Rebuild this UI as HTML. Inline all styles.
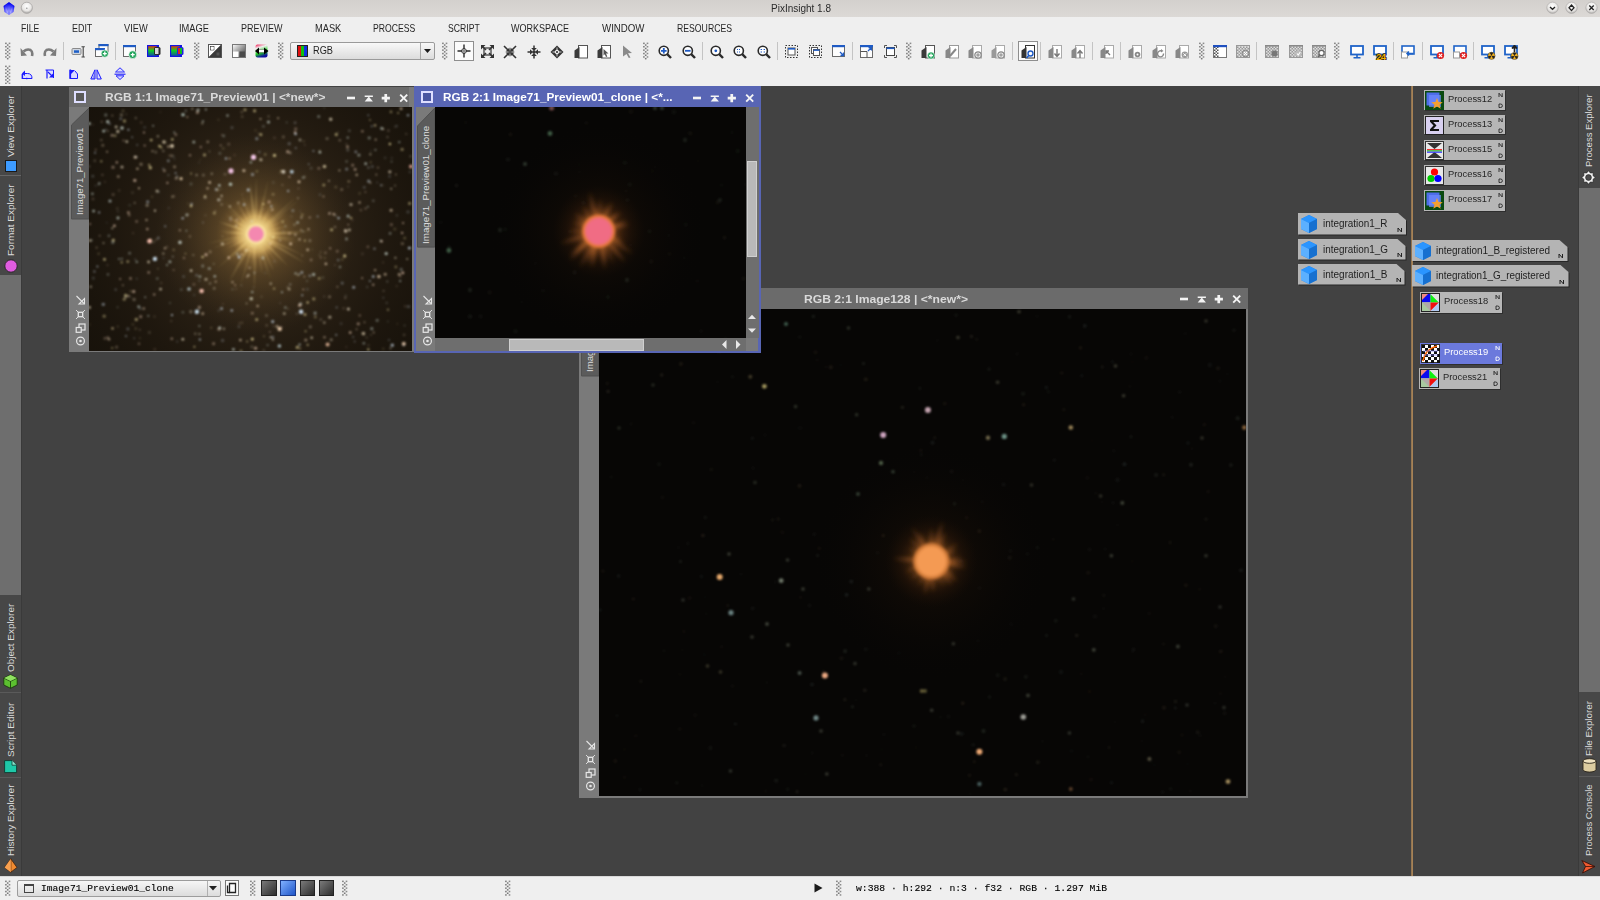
<!DOCTYPE html>
<html><head><meta charset="utf-8"><style>
html,body{margin:0;padding:0;width:1600px;height:900px;overflow:hidden;background:#424242}
#root{position:relative;width:1600px;height:900px;overflow:hidden}
#root div,#root svg{position:absolute}
.t{white-space:pre}
</style></head><body><div id="root">
<div style="left:0px;top:0px;width:1600px;height:17px;background:linear-gradient(#d3d0cd,#dcd9d6)"></div>
<div style="left:0px;top:17px;width:1600px;height:69px;background:#efefef"></div>
<div style="left:0px;top:86px;width:1600px;height:790px;background:#424242"></div>
<div style="left:0px;top:876px;width:1600px;height:24px;background:#efefef;border-top:1px solid #d8d8d8;box-sizing:border-box"></div>
<div class="t" style="left:771px;top:3.84px;font-size:10px;line-height:10px;color:#2b2b2b;font-family:'Liberation Sans', sans-serif;font-weight:normal;transform:scaleX(0.9994);transform-origin:0 0;">PixInsight 1.8</div>
<div class="t" style="left:21.25px;top:22.59px;font-size:11px;line-height:11px;color:#262626;font-family:'Liberation Sans', sans-serif;font-weight:normal;transform:scaleX(0.7899);transform-origin:0 0;">FILE</div>
<div class="t" style="left:71.5px;top:22.59px;font-size:11px;line-height:11px;color:#262626;font-family:'Liberation Sans', sans-serif;font-weight:normal;transform:scaleX(0.8102);transform-origin:0 0;">EDIT</div>
<div class="t" style="left:123.8px;top:22.59px;font-size:11px;line-height:11px;color:#262626;font-family:'Liberation Sans', sans-serif;font-weight:normal;transform:scaleX(0.8430);transform-origin:0 0;">VIEW</div>
<div class="t" style="left:179.3px;top:22.59px;font-size:11px;line-height:11px;color:#262626;font-family:'Liberation Sans', sans-serif;font-weight:normal;transform:scaleX(0.8463);transform-origin:0 0;">IMAGE</div>
<div class="t" style="left:241.2px;top:22.59px;font-size:11px;line-height:11px;color:#262626;font-family:'Liberation Sans', sans-serif;font-weight:normal;transform:scaleX(0.8180);transform-origin:0 0;">PREVIEW</div>
<div class="t" style="left:314.6px;top:22.59px;font-size:11px;line-height:11px;color:#262626;font-family:'Liberation Sans', sans-serif;font-weight:normal;transform:scaleX(0.8436);transform-origin:0 0;">MASK</div>
<div class="t" style="left:373.2px;top:22.59px;font-size:11px;line-height:11px;color:#262626;font-family:'Liberation Sans', sans-serif;font-weight:normal;transform:scaleX(0.7863);transform-origin:0 0;">PROCESS</div>
<div class="t" style="left:447.5px;top:22.59px;font-size:11px;line-height:11px;color:#262626;font-family:'Liberation Sans', sans-serif;font-weight:normal;transform:scaleX(0.7859);transform-origin:0 0;">SCRIPT</div>
<div class="t" style="left:511.2px;top:22.59px;font-size:11px;line-height:11px;color:#262626;font-family:'Liberation Sans', sans-serif;font-weight:normal;transform:scaleX(0.8204);transform-origin:0 0;">WORKSPACE</div>
<div class="t" style="left:601.5px;top:22.59px;font-size:11px;line-height:11px;color:#262626;font-family:'Liberation Sans', sans-serif;font-weight:normal;transform:scaleX(0.8806);transform-origin:0 0;">WINDOW</div>
<div class="t" style="left:676.5px;top:22.59px;font-size:11px;line-height:11px;color:#262626;font-family:'Liberation Sans', sans-serif;font-weight:normal;transform:scaleX(0.7893);transform-origin:0 0;">RESOURCES</div>
<svg style="left:5px;top:41.5px;width:6px;height:19.0px" width="6" height="19.0" viewBox="0 0 6 19.0"><rect x="0.1" y="0.60" width="1.6" height="1.5" fill="#6a6a6a" opacity="0.85"/><rect x="3.7" y="0.60" width="1.6" height="1.5" fill="#6a6a6a" opacity="0.75"/><rect x="1.9" y="2.30" width="1.6" height="1.5" fill="#6a6a6a" opacity="0.9"/><rect x="0.1" y="4.00" width="1.6" height="1.5" fill="#6a6a6a" opacity="0.85"/><rect x="3.7" y="4.00" width="1.6" height="1.5" fill="#6a6a6a" opacity="0.75"/><rect x="1.9" y="5.70" width="1.6" height="1.5" fill="#6a6a6a" opacity="0.9"/><rect x="0.1" y="7.40" width="1.6" height="1.5" fill="#6a6a6a" opacity="0.85"/><rect x="3.7" y="7.40" width="1.6" height="1.5" fill="#6a6a6a" opacity="0.75"/><rect x="1.9" y="9.10" width="1.6" height="1.5" fill="#6a6a6a" opacity="0.9"/><rect x="0.1" y="10.80" width="1.6" height="1.5" fill="#6a6a6a" opacity="0.85"/><rect x="3.7" y="10.80" width="1.6" height="1.5" fill="#6a6a6a" opacity="0.75"/><rect x="1.9" y="12.50" width="1.6" height="1.5" fill="#6a6a6a" opacity="0.9"/><rect x="0.1" y="14.20" width="1.6" height="1.5" fill="#6a6a6a" opacity="0.85"/><rect x="3.7" y="14.20" width="1.6" height="1.5" fill="#6a6a6a" opacity="0.75"/><rect x="1.9" y="15.90" width="1.6" height="1.5" fill="#6a6a6a" opacity="0.9"/></svg>
<svg style="left:5px;top:64.5px;width:6px;height:19.5px" width="6" height="19.5" viewBox="0 0 6 19.5"><rect x="0.1" y="0.60" width="1.6" height="1.5" fill="#6a6a6a" opacity="0.85"/><rect x="3.7" y="0.60" width="1.6" height="1.5" fill="#6a6a6a" opacity="0.75"/><rect x="1.9" y="2.30" width="1.6" height="1.5" fill="#6a6a6a" opacity="0.9"/><rect x="0.1" y="4.00" width="1.6" height="1.5" fill="#6a6a6a" opacity="0.85"/><rect x="3.7" y="4.00" width="1.6" height="1.5" fill="#6a6a6a" opacity="0.75"/><rect x="1.9" y="5.70" width="1.6" height="1.5" fill="#6a6a6a" opacity="0.9"/><rect x="0.1" y="7.40" width="1.6" height="1.5" fill="#6a6a6a" opacity="0.85"/><rect x="3.7" y="7.40" width="1.6" height="1.5" fill="#6a6a6a" opacity="0.75"/><rect x="1.9" y="9.10" width="1.6" height="1.5" fill="#6a6a6a" opacity="0.9"/><rect x="0.1" y="10.80" width="1.6" height="1.5" fill="#6a6a6a" opacity="0.85"/><rect x="3.7" y="10.80" width="1.6" height="1.5" fill="#6a6a6a" opacity="0.75"/><rect x="1.9" y="12.50" width="1.6" height="1.5" fill="#6a6a6a" opacity="0.9"/><rect x="0.1" y="14.20" width="1.6" height="1.5" fill="#6a6a6a" opacity="0.85"/><rect x="3.7" y="14.20" width="1.6" height="1.5" fill="#6a6a6a" opacity="0.75"/><rect x="1.9" y="15.90" width="1.6" height="1.5" fill="#6a6a6a" opacity="0.9"/><rect x="0.1" y="17.60" width="1.6" height="1.5" fill="#6a6a6a" opacity="0.85"/><rect x="3.7" y="17.60" width="1.6" height="1.5" fill="#6a6a6a" opacity="0.75"/></svg>
<svg style="left:20px;top:47px;width:14px;height:10px" width="14" height="10" viewBox="0 0 14 10"><g ><path d="M3.5 4.5 Q7 1.5 10.5 3 Q13 4.5 12 9" stroke="#7c7c7c" stroke-width="2.6" fill="none"/><path d="M0.5 1 L1 9 L7 8.5 Z" fill="#7c7c7c"/></g></svg>
<svg style="left:43px;top:47px;width:14px;height:10px" width="14" height="10" viewBox="0 0 14 10"><g transform="translate(14,0) scale(-1,1)"><path d="M3.5 4.5 Q7 1.5 10.5 3 Q13 4.5 12 9" stroke="#7c7c7c" stroke-width="2.6" fill="none"/><path d="M0.5 1 L1 9 L7 8.5 Z" fill="#7c7c7c"/></g></svg>
<div style="left:63px;top:42px;width:1px;height:17.5px;background:#c4c4c4"></div>
<svg style="left:71px;top:45.5px;width:15px;height:12px" width="15" height="12" viewBox="0 0 15 12"><rect x="1" y="2.5" width="9" height="6" rx="1" fill="#cfd6e0" stroke="#8a8a8a" stroke-width="1"/><rect x="3" y="4.3" width="5" height="2.5" fill="#1d5fc8"/><path d="M10.5 0.8 H13.8 M12.2 0.8 V11 M10.5 11 H13.8" stroke="#444" stroke-width="1.1" fill="none"/></svg>
<svg style="left:95px;top:44px;width:14px;height:14px" width="14" height="14" viewBox="0 0 14 14"><g transform="translate(3.5,0)"><rect x="0.5" y="0.5" width="9" height="7" fill="#fdfdfd" stroke="#6a6a6a" stroke-width="1"/><rect x="0" y="0" width="10" height="2.2" fill="#1f5bc4"/></g><g transform="translate(0,4)"><rect x="0.5" y="0.5" width="9" height="8" fill="#fdfdfd" stroke="#6a6a6a" stroke-width="1"/><rect x="0" y="0" width="10" height="2.2" fill="#1f5bc4"/></g><circle cx="9.8" cy="9.6" r="3.6" fill="#1fa35a" stroke="#fff" stroke-width="0.6"/><path d="M7.800000000000001 9.6 H11.8 M9.8 7.6 V11.6" stroke="#fff" stroke-width="1.3"/></svg>
<div style="left:115px;top:42px;width:1px;height:17.5px;background:#c4c4c4"></div>
<svg style="left:123px;top:45px;width:14px;height:14px" width="14" height="14" viewBox="0 0 14 14"><rect x="0.5" y="0.5" width="12" height="11" fill="#fdfdfd" stroke="#6a6a6a" stroke-width="1"/><rect x="0" y="0" width="13" height="2.2" fill="#1f5bc4"/><circle cx="9.7" cy="9.7" r="3.9" fill="#1fa35a" stroke="#fff" stroke-width="0.6"/><path d="M7.699999999999999 9.7 H11.7 M9.7 7.699999999999999 V11.7" stroke="#fff" stroke-width="1.3"/></svg>
<svg style="left:146.5px;top:45px;width:14px;height:12px" width="14" height="12" viewBox="0 0 14 12"><defs><linearGradient id="rg0" x1="0" y1="0" x2="0" y2="1"><stop offset="0" stop-color="#e23a10"/><stop offset="0.45" stop-color="#10d020"/><stop offset="1" stop-color="#1050a0"/></linearGradient></defs><rect x="0" y="0" width="12" height="12" fill="#1414e0"/><rect x="1.2" y="1.2" width="8.5" height="9.6" fill="url(#rg0)"/><rect x="7" y="2" width="6.5" height="8" rx="1.5" fill="#2a2a2a"/><rect x="8" y="3" width="3.5" height="6" fill="#d8d8d8"/></svg>
<svg style="left:170px;top:45px;width:14px;height:12px" width="14" height="12" viewBox="0 0 14 12"><defs><linearGradient id="rg1" x1="0" y1="0" x2="0" y2="1"><stop offset="0" stop-color="#e23a10"/><stop offset="0.45" stop-color="#10d020"/><stop offset="1" stop-color="#1050a0"/></linearGradient></defs><rect x="0" y="0" width="12" height="12" fill="#1414e0"/><rect x="1.2" y="1.2" width="8.5" height="9.6" fill="url(#rg1)"/><rect x="7" y="2" width="6.5" height="8" rx="1.5" fill="#2020e0"/><rect x="8" y="3" width="2" height="6" fill="#e02020"/><rect x="10" y="3" width="2" height="6" fill="#10c020"/></svg>
<svg style="left:193.5px;top:41.5px;width:6px;height:19.0px" width="6" height="19.0" viewBox="0 0 6 19.0"><rect x="0.1" y="0.60" width="1.6" height="1.5" fill="#6a6a6a" opacity="0.85"/><rect x="3.7" y="0.60" width="1.6" height="1.5" fill="#6a6a6a" opacity="0.75"/><rect x="1.9" y="2.30" width="1.6" height="1.5" fill="#6a6a6a" opacity="0.9"/><rect x="0.1" y="4.00" width="1.6" height="1.5" fill="#6a6a6a" opacity="0.85"/><rect x="3.7" y="4.00" width="1.6" height="1.5" fill="#6a6a6a" opacity="0.75"/><rect x="1.9" y="5.70" width="1.6" height="1.5" fill="#6a6a6a" opacity="0.9"/><rect x="0.1" y="7.40" width="1.6" height="1.5" fill="#6a6a6a" opacity="0.85"/><rect x="3.7" y="7.40" width="1.6" height="1.5" fill="#6a6a6a" opacity="0.75"/><rect x="1.9" y="9.10" width="1.6" height="1.5" fill="#6a6a6a" opacity="0.9"/><rect x="0.1" y="10.80" width="1.6" height="1.5" fill="#6a6a6a" opacity="0.85"/><rect x="3.7" y="10.80" width="1.6" height="1.5" fill="#6a6a6a" opacity="0.75"/><rect x="1.9" y="12.50" width="1.6" height="1.5" fill="#6a6a6a" opacity="0.9"/><rect x="0.1" y="14.20" width="1.6" height="1.5" fill="#6a6a6a" opacity="0.85"/><rect x="3.7" y="14.20" width="1.6" height="1.5" fill="#6a6a6a" opacity="0.75"/><rect x="1.9" y="15.90" width="1.6" height="1.5" fill="#6a6a6a" opacity="0.9"/></svg>
<svg style="left:208px;top:44px;width:14px;height:14px" width="14" height="14" viewBox="0 0 14 14"><rect x="0.5" y="0.5" width="13" height="13" fill="#3a3a3a" stroke="#555"/><path d="M1 1 H13 L1 13 Z" fill="#fff"/><path d="M13 1 V13 H1 Z" fill="#3a3a3a"/><rect x="2.5" y="2.5" width="3.5" height="3.5" fill="#fff" stroke="#222" stroke-width="0.6"/><rect x="8.5" y="8.5" width="3" height="3" fill="#555"/><path d="M3 3h2.5v2.5H3z" fill="#fff"/></svg>
<svg style="left:232px;top:44px;width:14px;height:14px" width="14" height="14" viewBox="0 0 14 14"><defs><linearGradient id="gsq" x1="0" y1="0" x2="1" y2="1"><stop offset="0" stop-color="#fff"/><stop offset="1" stop-color="#333"/></linearGradient></defs><rect x="0.5" y="0.5" width="13" height="13" fill="url(#gsq)" stroke="#777"/><rect x="1" y="7.5" width="5.5" height="5.5" fill="#fff"/><rect x="7.5" y="7.5" width="5.5" height="5.5" fill="#4a4a4a"/></svg>
<svg style="left:255px;top:44px;width:14px;height:14px" width="14" height="14" viewBox="0 0 14 14"><defs><linearGradient id="car" x1="0" y1="0" x2="0.3" y2="1"><stop offset="0" stop-color="#f0104a"/><stop offset="0.3" stop-color="#f0f0f0"/><stop offset="0.7" stop-color="#20d020"/><stop offset="1" stop-color="#1010a0"/></linearGradient></defs><rect x="0.5" y="0.5" width="12" height="13" rx="2" fill="url(#car)"/><path d="M0 7 L4 3.5 V5.5 H9 V3.5 L13.5 7 L9 10.5 V8.5 H4 V10.5 Z" fill="#000"/><rect x="4" y="5.6" width="5" height="2.8" fill="#fff"/></svg>
<svg style="left:278px;top:41.5px;width:6px;height:19.0px" width="6" height="19.0" viewBox="0 0 6 19.0"><rect x="0.1" y="0.60" width="1.6" height="1.5" fill="#6a6a6a" opacity="0.85"/><rect x="3.7" y="0.60" width="1.6" height="1.5" fill="#6a6a6a" opacity="0.75"/><rect x="1.9" y="2.30" width="1.6" height="1.5" fill="#6a6a6a" opacity="0.9"/><rect x="0.1" y="4.00" width="1.6" height="1.5" fill="#6a6a6a" opacity="0.85"/><rect x="3.7" y="4.00" width="1.6" height="1.5" fill="#6a6a6a" opacity="0.75"/><rect x="1.9" y="5.70" width="1.6" height="1.5" fill="#6a6a6a" opacity="0.9"/><rect x="0.1" y="7.40" width="1.6" height="1.5" fill="#6a6a6a" opacity="0.85"/><rect x="3.7" y="7.40" width="1.6" height="1.5" fill="#6a6a6a" opacity="0.75"/><rect x="1.9" y="9.10" width="1.6" height="1.5" fill="#6a6a6a" opacity="0.9"/><rect x="0.1" y="10.80" width="1.6" height="1.5" fill="#6a6a6a" opacity="0.85"/><rect x="3.7" y="10.80" width="1.6" height="1.5" fill="#6a6a6a" opacity="0.75"/><rect x="1.9" y="12.50" width="1.6" height="1.5" fill="#6a6a6a" opacity="0.9"/><rect x="0.1" y="14.20" width="1.6" height="1.5" fill="#6a6a6a" opacity="0.85"/><rect x="3.7" y="14.20" width="1.6" height="1.5" fill="#6a6a6a" opacity="0.75"/><rect x="1.9" y="15.90" width="1.6" height="1.5" fill="#6a6a6a" opacity="0.9"/></svg>
<div style="left:290px;top:41.5px;width:144.5px;height:18.5px;box-sizing:border-box;border:1px solid #9a9a9a;border-radius:2px;background:linear-gradient(#f8f8f8,#dcdcdc)"></div><div style="left:419.5px;top:42.5px;width:1px;height:16.5px;background:#a8a8a8"></div><svg style="left:422.5px;top:47.75px;width:9px;height:6px" width="9" height="6" viewBox="0 0 9 6"><path d="M1 1 H8 L4.5 5 Z" fill="#1a1a1a"/></svg>
<svg style="left:296.5px;top:45px;width:11px;height:12px" width="11" height="12" viewBox="0 0 11 12"><rect x="0" y="0" width="11" height="12" fill="#222"/><rect x="1" y="1" width="3" height="10" fill="#e01010"/><rect x="4" y="1" width="3" height="10" fill="#10c010"/><rect x="7" y="1" width="3" height="10" fill="#1030e0"/></svg>
<svg style="left:442px;top:41.5px;width:6px;height:19.0px" width="6" height="19.0" viewBox="0 0 6 19.0"><rect x="0.1" y="0.60" width="1.6" height="1.5" fill="#6a6a6a" opacity="0.85"/><rect x="3.7" y="0.60" width="1.6" height="1.5" fill="#6a6a6a" opacity="0.75"/><rect x="1.9" y="2.30" width="1.6" height="1.5" fill="#6a6a6a" opacity="0.9"/><rect x="0.1" y="4.00" width="1.6" height="1.5" fill="#6a6a6a" opacity="0.85"/><rect x="3.7" y="4.00" width="1.6" height="1.5" fill="#6a6a6a" opacity="0.75"/><rect x="1.9" y="5.70" width="1.6" height="1.5" fill="#6a6a6a" opacity="0.9"/><rect x="0.1" y="7.40" width="1.6" height="1.5" fill="#6a6a6a" opacity="0.85"/><rect x="3.7" y="7.40" width="1.6" height="1.5" fill="#6a6a6a" opacity="0.75"/><rect x="1.9" y="9.10" width="1.6" height="1.5" fill="#6a6a6a" opacity="0.9"/><rect x="0.1" y="10.80" width="1.6" height="1.5" fill="#6a6a6a" opacity="0.85"/><rect x="3.7" y="10.80" width="1.6" height="1.5" fill="#6a6a6a" opacity="0.75"/><rect x="1.9" y="12.50" width="1.6" height="1.5" fill="#6a6a6a" opacity="0.9"/><rect x="0.1" y="14.20" width="1.6" height="1.5" fill="#6a6a6a" opacity="0.85"/><rect x="3.7" y="14.20" width="1.6" height="1.5" fill="#6a6a6a" opacity="0.75"/><rect x="1.9" y="15.90" width="1.6" height="1.5" fill="#6a6a6a" opacity="0.9"/></svg>
<div style="left:453.5px;top:41px;width:20px;height:20px;box-sizing:border-box;border:1px solid #8e8e8e;background:#fbfbfb"></div>
<svg style="left:456.5px;top:44px;width:14px;height:14px" width="14" height="14" viewBox="0 0 14 14"><path d="M7 0.5 V5 M7 9 V13.5 M0.5 7 H5 M9 7 H13.5" stroke="#2a2a2a" stroke-width="1.4"/><circle cx="7" cy="7" r="2.4" fill="none" stroke="#2a2a2a" stroke-width="0.9"/><path d="M7 5 V9 M5 7 H9" stroke="#2a2a2a" stroke-width="0.6"/></svg>
<svg style="left:481px;top:45px;width:13px;height:13px" width="13" height="13" viewBox="0 0 13 13"><rect x="3" y="3" width="7" height="7" fill="none" stroke="#333" stroke-width="1.2"/><path d="M0 0 L4.5 0 L0 4.5 Z" fill="#333"/><path d="M1 1 L5 5" stroke="#333" stroke-width="1.6"/><path d="M13 0 L8.5 0 L13 4.5 Z" fill="#333"/><path d="M12 1 L8 5" stroke="#333" stroke-width="1.6"/><path d="M0 13 L4.5 13 L0 8.5 Z" fill="#333"/><path d="M1 12 L5 8" stroke="#333" stroke-width="1.6"/><path d="M13 13 L8.5 13 L13 8.5 Z" fill="#333"/><path d="M12 12 L8 8" stroke="#333" stroke-width="1.6"/></svg>
<svg style="left:503px;top:44.5px;width:14px;height:14px" width="14" height="14" viewBox="0 0 14 14"><path d="M1 1 L5.5 5.5" stroke="#333" stroke-width="1.6"/><path d="M6.5 6.5 L2.5 6.5 L6.5 2.5 Z" fill="#333"/><path d="M13 1 L8.5 5.5" stroke="#333" stroke-width="1.6"/><path d="M7.5 6.5 L11.5 6.5 L7.5 2.5 Z" fill="#333"/><path d="M1 13 L5.5 8.5" stroke="#333" stroke-width="1.6"/><path d="M6.5 7.5 L2.5 7.5 L6.5 11.5 Z" fill="#333"/><path d="M13 13 L8.5 8.5" stroke="#333" stroke-width="1.6"/><path d="M7.5 7.5 L11.5 7.5 L7.5 11.5 Z" fill="#333"/><path d="M7 4.5 V9.5 M4.5 7 H9.5" stroke="#333" stroke-width="1.2"/></svg>
<svg style="left:526.5px;top:44.5px;width:14px;height:14px" width="14" height="14" viewBox="0 0 14 14"><circle cx="7" cy="7" r="1.8" fill="#333"/><g transform="rotate(0 7 7)"><path d="M7 0.5 V5" stroke="#333" stroke-width="1.5"/><path d="M4.2 3 L7 6 L9.8 3 Z" fill="#333"/></g><g transform="rotate(90 7 7)"><path d="M7 0.5 V5" stroke="#333" stroke-width="1.5"/><path d="M4.2 3 L7 6 L9.8 3 Z" fill="#333"/></g><g transform="rotate(180 7 7)"><path d="M7 0.5 V5" stroke="#333" stroke-width="1.5"/><path d="M4.2 3 L7 6 L9.8 3 Z" fill="#333"/></g><g transform="rotate(270 7 7)"><path d="M7 0.5 V5" stroke="#333" stroke-width="1.5"/><path d="M4.2 3 L7 6 L9.8 3 Z" fill="#333"/></g></svg>
<svg style="left:550px;top:44.5px;width:14px;height:14px" width="14" height="14" viewBox="0 0 14 14"><path d="M7 0.5 L13.5 7 L7 13.5 L0.5 7 Z" fill="#333"/><path d="M7 4 L10 7 L7 10 L4 7 Z" fill="#efefef"/><circle cx="7" cy="7" r="1.1" fill="#333"/><path d="M7 2.5 V4 M7 10 V11.5 M2.5 7 H4 M10 7 H11.5" stroke="#efefef" stroke-width="0.8"/></svg>
<svg style="left:573.5px;top:45px;width:14px;height:14px" width="14" height="14" viewBox="0 0 14 14"><rect x="4.5" y="0.5" width="9" height="12.5" fill="#fff" stroke="#555" stroke-width="1"/><path d="M0.5 5.5 L5.5 2 V13 H0.5 Z" fill="#3a3a3a"/></svg>
<svg style="left:597px;top:45px;width:14px;height:14px" width="14" height="14" viewBox="0 0 14 14"><rect x="4.5" y="0.5" width="9" height="12.5" fill="#fff" stroke="#555" stroke-width="1"/><path d="M0.5 5.5 L5.5 2 V13 H0.5 Z" fill="#3a3a3a"/><path d="M6.5 4 L11.5 8.5 L9 8.6 L10.3 11.5 L9 12 L7.8 9.2 L6.5 10.5 Z" fill="#555"/></svg>
<svg style="left:622px;top:44.5px;width:11px;height:13px" width="11" height="13" viewBox="0 0 11 13"><path d="M1 0.5 L10 8 L6 8.3 L8.5 12.5 L6.8 13 L4.5 9 L1 11.5 Z" fill="#8a8a8a"/></svg>
<svg style="left:643px;top:41.5px;width:6px;height:19.0px" width="6" height="19.0" viewBox="0 0 6 19.0"><rect x="0.1" y="0.60" width="1.6" height="1.5" fill="#6a6a6a" opacity="0.85"/><rect x="3.7" y="0.60" width="1.6" height="1.5" fill="#6a6a6a" opacity="0.75"/><rect x="1.9" y="2.30" width="1.6" height="1.5" fill="#6a6a6a" opacity="0.9"/><rect x="0.1" y="4.00" width="1.6" height="1.5" fill="#6a6a6a" opacity="0.85"/><rect x="3.7" y="4.00" width="1.6" height="1.5" fill="#6a6a6a" opacity="0.75"/><rect x="1.9" y="5.70" width="1.6" height="1.5" fill="#6a6a6a" opacity="0.9"/><rect x="0.1" y="7.40" width="1.6" height="1.5" fill="#6a6a6a" opacity="0.85"/><rect x="3.7" y="7.40" width="1.6" height="1.5" fill="#6a6a6a" opacity="0.75"/><rect x="1.9" y="9.10" width="1.6" height="1.5" fill="#6a6a6a" opacity="0.9"/><rect x="0.1" y="10.80" width="1.6" height="1.5" fill="#6a6a6a" opacity="0.85"/><rect x="3.7" y="10.80" width="1.6" height="1.5" fill="#6a6a6a" opacity="0.75"/><rect x="1.9" y="12.50" width="1.6" height="1.5" fill="#6a6a6a" opacity="0.9"/><rect x="0.1" y="14.20" width="1.6" height="1.5" fill="#6a6a6a" opacity="0.85"/><rect x="3.7" y="14.20" width="1.6" height="1.5" fill="#6a6a6a" opacity="0.75"/><rect x="1.9" y="15.90" width="1.6" height="1.5" fill="#6a6a6a" opacity="0.9"/></svg>
<svg style="left:658px;top:44.5px;width:14px;height:14px" width="14" height="14" viewBox="0 0 14 14"><circle cx="5.8" cy="5.8" r="4.6" fill="#fff" stroke="#2a2a2a" stroke-width="1.6"/><path d="M9.2 9.2 L13 13" stroke="#2a2a2a" stroke-width="2.4"/><path d="M3 5.8 H8.6 M5.8 3 V8.6" stroke="#1f5bc4" stroke-width="1.8"/></svg>
<svg style="left:682px;top:44.5px;width:14px;height:14px" width="14" height="14" viewBox="0 0 14 14"><circle cx="5.8" cy="5.8" r="4.6" fill="#fff" stroke="#2a2a2a" stroke-width="1.6"/><path d="M9.2 9.2 L13 13" stroke="#2a2a2a" stroke-width="2.4"/><path d="M3 5.8 H8.6" stroke="#1f5bc4" stroke-width="1.8"/></svg>
<div style="left:702px;top:42px;width:1px;height:17.5px;background:#c4c4c4"></div>
<svg style="left:710px;top:44.5px;width:14px;height:14px" width="14" height="14" viewBox="0 0 14 14"><circle cx="5.8" cy="5.8" r="4.6" fill="#fff" stroke="#2a2a2a" stroke-width="1.6"/><path d="M9.2 9.2 L13 13" stroke="#2a2a2a" stroke-width="2.4"/><circle cx="5.8" cy="5.8" r="1.4" fill="#1f5bc4"/></svg>
<svg style="left:733px;top:44.5px;width:14px;height:14px" width="14" height="14" viewBox="0 0 14 14"><circle cx="5.8" cy="5.8" r="4.6" fill="#fff" stroke="#2a2a2a" stroke-width="1.6"/><path d="M9.2 9.2 L13 13" stroke="#2a2a2a" stroke-width="2.4"/><path d="M4 4.5 H7.6 M4 7 H7.6" stroke="#1f5bc4" stroke-width="1" stroke-dasharray="1 1"/></svg>
<svg style="left:757px;top:44.5px;width:14px;height:14px" width="14" height="14" viewBox="0 0 14 14"><circle cx="5.8" cy="5.8" r="4.6" fill="#fff" stroke="#2a2a2a" stroke-width="1.6"/><path d="M9.2 9.2 L13 13" stroke="#2a2a2a" stroke-width="2.4"/><path d="M3.6 4.5 H5 M6.6 4.5 H8 M3.6 7 H5 M6.6 7 H8" stroke="#1f5bc4" stroke-width="1.2"/></svg>
<div style="left:777px;top:42px;width:1px;height:17.5px;background:#c4c4c4"></div>
<svg style="left:785px;top:44.5px;width:13px;height:13px" width="13" height="13" viewBox="0 0 13 13"><rect x="0.5" y="0.5" width="12" height="12" fill="none" stroke="#333" stroke-dasharray="1.5 1.5"/><rect x="3" y="3" width="7" height="7" fill="#fff" stroke="#555"/><rect x="3" y="3" width="7" height="1.6" fill="#1f5bc4"/></svg>
<svg style="left:808.5px;top:44.5px;width:13px;height:13px" width="13" height="13" viewBox="0 0 13 13"><rect x="0.5" y="0.5" width="12" height="12" fill="none" stroke="#333" stroke-dasharray="1.5 1.5"/><rect x="2.5" y="2.5" width="6" height="6" fill="#fff" stroke="#555"/><rect x="4.5" y="4.5" width="6" height="6" fill="#fff" stroke="#555"/><rect x="4.5" y="4.5" width="6" height="1.4" fill="#1f5bc4"/></svg>
<svg style="left:832px;top:45px;width:13px;height:13px" width="13" height="13" viewBox="0 0 13 13"><rect x="0.5" y="0.5" width="12" height="11" fill="#fdfdfd" stroke="#6a6a6a" stroke-width="1"/><rect x="0" y="0" width="13" height="2.2" fill="#1f5bc4"/><path d="M8 7 L11.5 10.5 M11.5 7.5 V10.5 H8.5" stroke="#1f5bc4" stroke-width="1.3" fill="none"/></svg>
<div style="left:852px;top:42px;width:1px;height:17.5px;background:#c4c4c4"></div>
<svg style="left:860px;top:44.5px;width:13px;height:13px" width="13" height="13" viewBox="0 0 13 13"><rect x="0.5" y="0.5" width="12" height="12" fill="#fdfdfd" stroke="#6a6a6a" stroke-width="1"/><rect x="0" y="0" width="13" height="2.2" fill="#1f5bc4"/><path d="M0.5 6.5 H7 V12.5" stroke="#555" fill="none"/><path d="M8 6 L11.5 2.5 M8.5 2.5 H11.5 V5.5" stroke="#1f5bc4" stroke-width="1.3" fill="none"/></svg>
<svg style="left:883.5px;top:44.5px;width:13px;height:13px" width="13" height="13" viewBox="0 0 13 13"><rect x="2.5" y="2.5" width="8" height="8" fill="#fff" stroke="#444"/><rect x="2.5" y="2.5" width="8" height="1.6" fill="#1f5bc4"/><path d="M0.5 3 V0.5 H3 M10 0.5 H12.5 V3 M0.5 10 V12.5 H3 M10 12.5 H12.5 V10" stroke="#555" fill="none"/></svg>
<svg style="left:906px;top:41.5px;width:6px;height:19.0px" width="6" height="19.0" viewBox="0 0 6 19.0"><rect x="0.1" y="0.60" width="1.6" height="1.5" fill="#6a6a6a" opacity="0.85"/><rect x="3.7" y="0.60" width="1.6" height="1.5" fill="#6a6a6a" opacity="0.75"/><rect x="1.9" y="2.30" width="1.6" height="1.5" fill="#6a6a6a" opacity="0.9"/><rect x="0.1" y="4.00" width="1.6" height="1.5" fill="#6a6a6a" opacity="0.85"/><rect x="3.7" y="4.00" width="1.6" height="1.5" fill="#6a6a6a" opacity="0.75"/><rect x="1.9" y="5.70" width="1.6" height="1.5" fill="#6a6a6a" opacity="0.9"/><rect x="0.1" y="7.40" width="1.6" height="1.5" fill="#6a6a6a" opacity="0.85"/><rect x="3.7" y="7.40" width="1.6" height="1.5" fill="#6a6a6a" opacity="0.75"/><rect x="1.9" y="9.10" width="1.6" height="1.5" fill="#6a6a6a" opacity="0.9"/><rect x="0.1" y="10.80" width="1.6" height="1.5" fill="#6a6a6a" opacity="0.85"/><rect x="3.7" y="10.80" width="1.6" height="1.5" fill="#6a6a6a" opacity="0.75"/><rect x="1.9" y="12.50" width="1.6" height="1.5" fill="#6a6a6a" opacity="0.9"/><rect x="0.1" y="14.20" width="1.6" height="1.5" fill="#6a6a6a" opacity="0.85"/><rect x="3.7" y="14.20" width="1.6" height="1.5" fill="#6a6a6a" opacity="0.75"/><rect x="1.9" y="15.90" width="1.6" height="1.5" fill="#6a6a6a" opacity="0.9"/></svg>
<svg style="left:921px;top:45px;width:14px;height:14px" width="14" height="14" viewBox="0 0 14 14"><rect x="4.5" y="0.5" width="9" height="12.5" fill="#fff" stroke="#555" stroke-width="1"/><path d="M0.5 5.5 L5.5 2 V13 H0.5 Z" fill="#3a3a3a"/><circle cx="10" cy="10.5" r="3.6" fill="#1fa35a" stroke="#fff" stroke-width="0.6"/><path d="M8 10.5 H12 M10 8.5 V12.5" stroke="#fff" stroke-width="1.3"/></svg>
<svg style="left:945px;top:45px;width:14px;height:14px" width="14" height="14" viewBox="0 0 14 14"><rect x="4.5" y="0.5" width="9" height="12.5" fill="#fff" stroke="#999" stroke-width="1"/><path d="M0.5 5.5 L5.5 2 V13 H0.5 Z" fill="#888"/><path d="M5 11 L11 4" stroke="#888" stroke-width="2"/></svg>
<svg style="left:968px;top:45px;width:14px;height:14px" width="14" height="14" viewBox="0 0 14 14"><rect x="4.5" y="0.5" width="9" height="12.5" fill="#fff" stroke="#aaa" stroke-width="1"/><path d="M0.5 5.5 L5.5 2 V13 H0.5 Z" fill="#888"/><circle cx="10" cy="10" r="3.2" fill="#efefef" stroke="#888" stroke-width="1.2"/><path d="M8.2 10 H11.8 M10 8.2 V11.8" stroke="#888" stroke-width="1"/></svg>
<svg style="left:991px;top:45px;width:14px;height:14px" width="14" height="14" viewBox="0 0 14 14"><rect x="4.5" y="0.5" width="9" height="12.5" fill="#fff" stroke="#aaa" stroke-width="1"/><path d="M0.5 5.5 L5.5 2 V13 H0.5 Z" fill="#999"/><circle cx="10" cy="10" r="3.2" fill="#efefef" stroke="#888" stroke-width="1.2"/><path d="M8.2 10 H11.8 M10 8.2 V11.8" stroke="#888" stroke-width="1"/></svg>
<div style="left:1012px;top:42px;width:1px;height:17.5px;background:#c4c4c4"></div>
<div style="left:1017.5px;top:41px;width:20px;height:20px;box-sizing:border-box;border:1px solid #8e8e8e;background:#fbfbfb"></div>
<svg style="left:1020.5px;top:45px;width:14px;height:14px" width="14" height="14" viewBox="0 0 14 14"><rect x="4.5" y="0.5" width="9" height="12.5" fill="#fff" stroke="#333" stroke-width="1"/><path d="M0.5 5.5 L5.5 2 V13 H0.5 Z" fill="#333"/><circle cx="9.5" cy="8.5" r="2.5" fill="none" stroke="#1f5bc4" stroke-width="1.4"/><path d="M7.8 10.5 L5.5 13" stroke="#1f5bc4" stroke-width="1.6"/></svg>
<div style="left:1040px;top:42px;width:1px;height:17.5px;background:#c4c4c4"></div>
<svg style="left:1048px;top:45px;width:14px;height:14px" width="14" height="14" viewBox="0 0 14 14"><rect x="4.5" y="0.5" width="9" height="12.5" fill="#fff" stroke="#aaa" stroke-width="1"/><path d="M0.5 5.5 L5.5 2 V13 H0.5 Z" fill="#888"/><path d="M9 4 V11 M6.5 8.5 L9 11.5 L11.5 8.5" stroke="#777" stroke-width="1.4" fill="none"/></svg>
<svg style="left:1071px;top:45px;width:14px;height:14px" width="14" height="14" viewBox="0 0 14 14"><rect x="4.5" y="0.5" width="9" height="12.5" fill="#fff" stroke="#aaa" stroke-width="1"/><path d="M0.5 5.5 L5.5 2 V13 H0.5 Z" fill="#888"/><path d="M9 13 V6 M6.5 8.5 L9 5.5 L11.5 8.5" stroke="#777" stroke-width="1.4" fill="none"/></svg>
<div style="left:1092px;top:42px;width:1px;height:17.5px;background:#c4c4c4"></div>
<svg style="left:1100px;top:45px;width:14px;height:14px" width="14" height="14" viewBox="0 0 14 14"><rect x="4.5" y="0.5" width="9" height="12.5" fill="#fff" stroke="#aaa" stroke-width="1"/><path d="M0.5 5.5 L5.5 2 V13 H0.5 Z" fill="#888"/><path d="M6 6 L10 10 M6 9 V6 H9" stroke="#777" stroke-width="1.4" fill="none"/></svg>
<div style="left:1120px;top:42px;width:1px;height:17.5px;background:#c4c4c4"></div>
<svg style="left:1128px;top:45px;width:14px;height:14px" width="14" height="14" viewBox="0 0 14 14"><rect x="4.5" y="0.5" width="9" height="12.5" fill="#fff" stroke="#aaa" stroke-width="1"/><path d="M0.5 5.5 L5.5 2 V13 H0.5 Z" fill="#888"/><circle cx="9.5" cy="9.5" r="2.8" fill="#888"/><circle cx="9.5" cy="9.5" r="1" fill="#fff"/></svg>
<svg style="left:1152px;top:45px;width:14px;height:14px" width="14" height="14" viewBox="0 0 14 14"><rect x="4.5" y="0.5" width="9" height="12.5" fill="#fff" stroke="#aaa" stroke-width="1"/><path d="M0.5 5.5 L5.5 2 V13 H0.5 Z" fill="#888"/><path d="M11.5 8.5 A3 3 0 1 1 9.5 6" stroke="#888" stroke-width="1.4" fill="none"/><path d="M9 4 L11.5 6 L9 7.5 Z" fill="#888"/></svg>
<svg style="left:1175px;top:45px;width:14px;height:14px" width="14" height="14" viewBox="0 0 14 14"><rect x="4.5" y="0.5" width="9" height="12.5" fill="#fff" stroke="#aaa" stroke-width="1"/><path d="M0.5 5.5 L5.5 2 V13 H0.5 Z" fill="#888"/><circle cx="9.8" cy="9.8" r="3.2" fill="#999"/><path d="M8.4 8.4 L11.2 11.2 M11.2 8.4 L8.4 11.2" stroke="#fff" stroke-width="1"/></svg>
<svg style="left:1199px;top:41.5px;width:6px;height:19.0px" width="6" height="19.0" viewBox="0 0 6 19.0"><rect x="0.1" y="0.60" width="1.6" height="1.5" fill="#6a6a6a" opacity="0.85"/><rect x="3.7" y="0.60" width="1.6" height="1.5" fill="#6a6a6a" opacity="0.75"/><rect x="1.9" y="2.30" width="1.6" height="1.5" fill="#6a6a6a" opacity="0.9"/><rect x="0.1" y="4.00" width="1.6" height="1.5" fill="#6a6a6a" opacity="0.85"/><rect x="3.7" y="4.00" width="1.6" height="1.5" fill="#6a6a6a" opacity="0.75"/><rect x="1.9" y="5.70" width="1.6" height="1.5" fill="#6a6a6a" opacity="0.9"/><rect x="0.1" y="7.40" width="1.6" height="1.5" fill="#6a6a6a" opacity="0.85"/><rect x="3.7" y="7.40" width="1.6" height="1.5" fill="#6a6a6a" opacity="0.75"/><rect x="1.9" y="9.10" width="1.6" height="1.5" fill="#6a6a6a" opacity="0.9"/><rect x="0.1" y="10.80" width="1.6" height="1.5" fill="#6a6a6a" opacity="0.85"/><rect x="3.7" y="10.80" width="1.6" height="1.5" fill="#6a6a6a" opacity="0.75"/><rect x="1.9" y="12.50" width="1.6" height="1.5" fill="#6a6a6a" opacity="0.9"/><rect x="0.1" y="14.20" width="1.6" height="1.5" fill="#6a6a6a" opacity="0.85"/><rect x="3.7" y="14.20" width="1.6" height="1.5" fill="#6a6a6a" opacity="0.75"/><rect x="1.9" y="15.90" width="1.6" height="1.5" fill="#6a6a6a" opacity="0.9"/></svg>
<svg style="left:1213px;top:45px;width:14px;height:13px" width="14" height="13" viewBox="0 0 14 13"><rect x="0.5" y="0.5" width="13" height="12" fill="#fff" stroke="#777"/><rect x="1.0" y="1.5" width="1.5" height="1.5" fill="#555"/><rect x="1.0" y="4.5" width="1.5" height="1.5" fill="#555"/><rect x="1.0" y="7.5" width="1.5" height="1.5" fill="#555"/><rect x="1.0" y="10.5" width="1.5" height="1.5" fill="#555"/><rect x="2.5" y="3.0" width="1.5" height="1.5" fill="#555"/><rect x="2.5" y="6.0" width="1.5" height="1.5" fill="#555"/><rect x="2.5" y="9.0" width="1.5" height="1.5" fill="#555"/><rect x="4.0" y="1.5" width="1.5" height="1.5" fill="#555"/><rect x="4.0" y="4.5" width="1.5" height="1.5" fill="#555"/><rect x="4.0" y="7.5" width="1.5" height="1.5" fill="#555"/><rect x="4.0" y="10.5" width="1.5" height="1.5" fill="#555"/><rect x="0" y="0" width="14" height="2.2" fill="#1f50c0"/></svg>
<svg style="left:1236px;top:45px;width:14px;height:13px" width="14" height="13" viewBox="0 0 14 13"><rect x="0.5" y="0.5" width="13" height="12" fill="#ddd" stroke="#999"/><rect x="1.0" y="1.5" width="1.5" height="1.5" fill="#999"/><rect x="1.0" y="4.5" width="1.5" height="1.5" fill="#999"/><rect x="1.0" y="7.5" width="1.5" height="1.5" fill="#999"/><rect x="1.0" y="10.5" width="1.5" height="1.5" fill="#999"/><rect x="2.5" y="3.0" width="1.5" height="1.5" fill="#999"/><rect x="2.5" y="6.0" width="1.5" height="1.5" fill="#999"/><rect x="2.5" y="9.0" width="1.5" height="1.5" fill="#999"/><rect x="4.0" y="1.5" width="1.5" height="1.5" fill="#999"/><rect x="4.0" y="4.5" width="1.5" height="1.5" fill="#999"/><rect x="4.0" y="7.5" width="1.5" height="1.5" fill="#999"/><rect x="4.0" y="10.5" width="1.5" height="1.5" fill="#999"/><rect x="5.5" y="3.0" width="1.5" height="1.5" fill="#999"/><rect x="5.5" y="6.0" width="1.5" height="1.5" fill="#999"/><rect x="5.5" y="9.0" width="1.5" height="1.5" fill="#999"/><rect x="7.0" y="1.5" width="1.5" height="1.5" fill="#999"/><rect x="7.0" y="4.5" width="1.5" height="1.5" fill="#999"/><rect x="7.0" y="7.5" width="1.5" height="1.5" fill="#999"/><rect x="7.0" y="10.5" width="1.5" height="1.5" fill="#999"/><rect x="8.5" y="3.0" width="1.5" height="1.5" fill="#999"/><rect x="8.5" y="6.0" width="1.5" height="1.5" fill="#999"/><rect x="8.5" y="9.0" width="1.5" height="1.5" fill="#999"/><rect x="10.0" y="1.5" width="1.5" height="1.5" fill="#999"/><rect x="10.0" y="4.5" width="1.5" height="1.5" fill="#999"/><rect x="10.0" y="7.5" width="1.5" height="1.5" fill="#999"/><rect x="10.0" y="10.5" width="1.5" height="1.5" fill="#999"/><rect x="11.5" y="3.0" width="1.5" height="1.5" fill="#999"/><rect x="11.5" y="6.0" width="1.5" height="1.5" fill="#999"/><rect x="11.5" y="9.0" width="1.5" height="1.5" fill="#999"/><circle cx="9.5" cy="8.5" r="3.3" fill="#bbb" stroke="#888"/><path d="M8 7 L11 10 M11 7 L8 10" stroke="#fff" stroke-width="1"/></svg>
<div style="left:1256px;top:42px;width:1px;height:17.5px;background:#c4c4c4"></div>
<svg style="left:1265px;top:45px;width:14px;height:13px" width="14" height="13" viewBox="0 0 14 13"><rect x="0.5" y="0.5" width="13" height="12" fill="#ddd" stroke="#999"/><rect x="1.0" y="1.5" width="1.5" height="1.5" fill="#999"/><rect x="1.0" y="4.5" width="1.5" height="1.5" fill="#999"/><rect x="1.0" y="7.5" width="1.5" height="1.5" fill="#999"/><rect x="1.0" y="10.5" width="1.5" height="1.5" fill="#999"/><rect x="2.5" y="3.0" width="1.5" height="1.5" fill="#999"/><rect x="2.5" y="6.0" width="1.5" height="1.5" fill="#999"/><rect x="2.5" y="9.0" width="1.5" height="1.5" fill="#999"/><rect x="4.0" y="1.5" width="1.5" height="1.5" fill="#999"/><rect x="4.0" y="4.5" width="1.5" height="1.5" fill="#999"/><rect x="4.0" y="7.5" width="1.5" height="1.5" fill="#999"/><rect x="4.0" y="10.5" width="1.5" height="1.5" fill="#999"/><rect x="5.5" y="3.0" width="1.5" height="1.5" fill="#999"/><rect x="5.5" y="6.0" width="1.5" height="1.5" fill="#999"/><rect x="5.5" y="9.0" width="1.5" height="1.5" fill="#999"/><rect x="7.0" y="1.5" width="1.5" height="1.5" fill="#999"/><rect x="7.0" y="4.5" width="1.5" height="1.5" fill="#999"/><rect x="7.0" y="7.5" width="1.5" height="1.5" fill="#999"/><rect x="7.0" y="10.5" width="1.5" height="1.5" fill="#999"/><rect x="8.5" y="3.0" width="1.5" height="1.5" fill="#999"/><rect x="8.5" y="6.0" width="1.5" height="1.5" fill="#999"/><rect x="8.5" y="9.0" width="1.5" height="1.5" fill="#999"/><rect x="10.0" y="1.5" width="1.5" height="1.5" fill="#999"/><rect x="10.0" y="4.5" width="1.5" height="1.5" fill="#999"/><rect x="10.0" y="7.5" width="1.5" height="1.5" fill="#999"/><rect x="10.0" y="10.5" width="1.5" height="1.5" fill="#999"/><rect x="11.5" y="3.0" width="1.5" height="1.5" fill="#999"/><rect x="11.5" y="6.0" width="1.5" height="1.5" fill="#999"/><rect x="11.5" y="9.0" width="1.5" height="1.5" fill="#999"/><rect x="0" y="0" width="14" height="1.6" fill="#888"/><circle cx="9.5" cy="8.5" r="3" fill="#777"/></svg>
<svg style="left:1288.5px;top:45px;width:14px;height:13px" width="14" height="13" viewBox="0 0 14 13"><rect x="0.5" y="0.5" width="13" height="12" fill="#ddd" stroke="#999"/><rect x="1.0" y="1.5" width="1.5" height="1.5" fill="#999"/><rect x="1.0" y="4.5" width="1.5" height="1.5" fill="#999"/><rect x="1.0" y="7.5" width="1.5" height="1.5" fill="#999"/><rect x="1.0" y="10.5" width="1.5" height="1.5" fill="#999"/><rect x="2.5" y="3.0" width="1.5" height="1.5" fill="#999"/><rect x="2.5" y="6.0" width="1.5" height="1.5" fill="#999"/><rect x="2.5" y="9.0" width="1.5" height="1.5" fill="#999"/><rect x="4.0" y="1.5" width="1.5" height="1.5" fill="#999"/><rect x="4.0" y="4.5" width="1.5" height="1.5" fill="#999"/><rect x="4.0" y="7.5" width="1.5" height="1.5" fill="#999"/><rect x="4.0" y="10.5" width="1.5" height="1.5" fill="#999"/><rect x="5.5" y="3.0" width="1.5" height="1.5" fill="#999"/><rect x="5.5" y="6.0" width="1.5" height="1.5" fill="#999"/><rect x="5.5" y="9.0" width="1.5" height="1.5" fill="#999"/><rect x="7.0" y="1.5" width="1.5" height="1.5" fill="#999"/><rect x="7.0" y="4.5" width="1.5" height="1.5" fill="#999"/><rect x="7.0" y="7.5" width="1.5" height="1.5" fill="#999"/><rect x="7.0" y="10.5" width="1.5" height="1.5" fill="#999"/><rect x="8.5" y="3.0" width="1.5" height="1.5" fill="#999"/><rect x="8.5" y="6.0" width="1.5" height="1.5" fill="#999"/><rect x="8.5" y="9.0" width="1.5" height="1.5" fill="#999"/><rect x="10.0" y="1.5" width="1.5" height="1.5" fill="#999"/><rect x="10.0" y="4.5" width="1.5" height="1.5" fill="#999"/><rect x="10.0" y="7.5" width="1.5" height="1.5" fill="#999"/><rect x="10.0" y="10.5" width="1.5" height="1.5" fill="#999"/><rect x="11.5" y="3.0" width="1.5" height="1.5" fill="#999"/><rect x="11.5" y="6.0" width="1.5" height="1.5" fill="#999"/><rect x="11.5" y="9.0" width="1.5" height="1.5" fill="#999"/><rect x="0" y="0" width="14" height="1.6" fill="#888"/><circle cx="9.5" cy="8.5" r="3.3" fill="#bbb"/><path d="M8 8.5 L9.2 10 L11.3 7" stroke="#fff" stroke-width="1.1" fill="none"/></svg>
<svg style="left:1312px;top:45px;width:14px;height:13px" width="14" height="13" viewBox="0 0 14 13"><rect x="0.5" y="0.5" width="13" height="12" fill="#ddd" stroke="#999"/><rect x="1.0" y="1.5" width="1.5" height="1.5" fill="#999"/><rect x="1.0" y="4.5" width="1.5" height="1.5" fill="#999"/><rect x="1.0" y="7.5" width="1.5" height="1.5" fill="#999"/><rect x="1.0" y="10.5" width="1.5" height="1.5" fill="#999"/><rect x="2.5" y="3.0" width="1.5" height="1.5" fill="#999"/><rect x="2.5" y="6.0" width="1.5" height="1.5" fill="#999"/><rect x="2.5" y="9.0" width="1.5" height="1.5" fill="#999"/><rect x="4.0" y="1.5" width="1.5" height="1.5" fill="#999"/><rect x="4.0" y="4.5" width="1.5" height="1.5" fill="#999"/><rect x="4.0" y="7.5" width="1.5" height="1.5" fill="#999"/><rect x="4.0" y="10.5" width="1.5" height="1.5" fill="#999"/><rect x="5.5" y="3.0" width="1.5" height="1.5" fill="#999"/><rect x="5.5" y="6.0" width="1.5" height="1.5" fill="#999"/><rect x="5.5" y="9.0" width="1.5" height="1.5" fill="#999"/><rect x="7.0" y="1.5" width="1.5" height="1.5" fill="#999"/><rect x="7.0" y="4.5" width="1.5" height="1.5" fill="#999"/><rect x="7.0" y="7.5" width="1.5" height="1.5" fill="#999"/><rect x="7.0" y="10.5" width="1.5" height="1.5" fill="#999"/><rect x="8.5" y="3.0" width="1.5" height="1.5" fill="#999"/><rect x="8.5" y="6.0" width="1.5" height="1.5" fill="#999"/><rect x="8.5" y="9.0" width="1.5" height="1.5" fill="#999"/><rect x="10.0" y="1.5" width="1.5" height="1.5" fill="#999"/><rect x="10.0" y="4.5" width="1.5" height="1.5" fill="#999"/><rect x="10.0" y="7.5" width="1.5" height="1.5" fill="#999"/><rect x="10.0" y="10.5" width="1.5" height="1.5" fill="#999"/><rect x="11.5" y="3.0" width="1.5" height="1.5" fill="#999"/><rect x="11.5" y="6.0" width="1.5" height="1.5" fill="#999"/><rect x="11.5" y="9.0" width="1.5" height="1.5" fill="#999"/><rect x="0" y="0" width="14" height="1.6" fill="#888"/><circle cx="9.5" cy="8" r="2.6" fill="#fff" stroke="#666" stroke-width="1.2"/><path d="M7.8 10 L6 12" stroke="#666" stroke-width="1.5"/></svg>
<svg style="left:1334px;top:41.5px;width:6px;height:19.0px" width="6" height="19.0" viewBox="0 0 6 19.0"><rect x="0.1" y="0.60" width="1.6" height="1.5" fill="#6a6a6a" opacity="0.85"/><rect x="3.7" y="0.60" width="1.6" height="1.5" fill="#6a6a6a" opacity="0.75"/><rect x="1.9" y="2.30" width="1.6" height="1.5" fill="#6a6a6a" opacity="0.9"/><rect x="0.1" y="4.00" width="1.6" height="1.5" fill="#6a6a6a" opacity="0.85"/><rect x="3.7" y="4.00" width="1.6" height="1.5" fill="#6a6a6a" opacity="0.75"/><rect x="1.9" y="5.70" width="1.6" height="1.5" fill="#6a6a6a" opacity="0.9"/><rect x="0.1" y="7.40" width="1.6" height="1.5" fill="#6a6a6a" opacity="0.85"/><rect x="3.7" y="7.40" width="1.6" height="1.5" fill="#6a6a6a" opacity="0.75"/><rect x="1.9" y="9.10" width="1.6" height="1.5" fill="#6a6a6a" opacity="0.9"/><rect x="0.1" y="10.80" width="1.6" height="1.5" fill="#6a6a6a" opacity="0.85"/><rect x="3.7" y="10.80" width="1.6" height="1.5" fill="#6a6a6a" opacity="0.75"/><rect x="1.9" y="12.50" width="1.6" height="1.5" fill="#6a6a6a" opacity="0.9"/><rect x="0.1" y="14.20" width="1.6" height="1.5" fill="#6a6a6a" opacity="0.85"/><rect x="3.7" y="14.20" width="1.6" height="1.5" fill="#6a6a6a" opacity="0.75"/><rect x="1.9" y="15.90" width="1.6" height="1.5" fill="#6a6a6a" opacity="0.9"/></svg>
<svg style="left:1350px;top:44.5px;width:15px;height:15px" width="15" height="15" viewBox="0 0 15 15"><rect x="1" y="1" width="12" height="8.5" fill="#fff" stroke="#1f63c8" stroke-width="1.8"/><path d="M7 10 V12 M3.5 12.8 H10.5" stroke="#1f63c8" stroke-width="1.6"/></svg>
<svg style="left:1373px;top:44.5px;width:15px;height:15px" width="15" height="15" viewBox="0 0 15 15"><rect x="1" y="1" width="12" height="8.5" fill="#fff" stroke="#1f63c8" stroke-width="1.8"/><path d="M7 10 V12 M3.5 12.8 H10.5" stroke="#1f63c8" stroke-width="1.6"/><text x="3.2" y="14.6" font-family="Liberation Sans" font-weight="bold" font-size="9.5" fill="#f4b000" stroke="#1a1a1a" stroke-width="1.4" paint-order="stroke" letter-spacing="-0.6">24</text></svg>
<div style="left:1393px;top:42px;width:1px;height:17.5px;background:#c4c4c4"></div>
<svg style="left:1401px;top:44.5px;width:15px;height:15px" width="15" height="15" viewBox="0 0 15 15"><rect x="1" y="1" width="12" height="8" fill="#fff" stroke="#1f63c8" stroke-width="1.6"/><rect x="0.5" y="7" width="6" height="6" fill="#fff" stroke="#999" stroke-width="1"/><path d="M12 8.5 H6 M8 6.5 L6 8.5 L8 10.5" stroke="#1f63c8" stroke-width="1.5" fill="none"/></svg>
<div style="left:1422px;top:42px;width:1px;height:17.5px;background:#c4c4c4"></div>
<svg style="left:1430px;top:44.5px;width:15px;height:15px" width="15" height="15" viewBox="0 0 15 15"><rect x="1" y="1" width="12" height="8.5" fill="#fff" stroke="#1f63c8" stroke-width="1.8"/><path d="M7 10 V12 M3.5 12.8 H10.5" stroke="#1f63c8" stroke-width="1.6"/><circle cx="10.5" cy="10.5" r="3.6" fill="#e02020"/><path d="M8.9 8.9 L12.1 12.1 M12.1 8.9 L8.9 12.1" stroke="#fff" stroke-width="1.2"/></svg>
<svg style="left:1453px;top:44.5px;width:15px;height:15px" width="15" height="15" viewBox="0 0 15 15"><rect x="1" y="1" width="12" height="8" fill="#fff" stroke="#1f63c8" stroke-width="1.6"/><rect x="0.5" y="7" width="6" height="6" fill="#fff" stroke="#999" stroke-width="1"/><circle cx="10.5" cy="10.5" r="3.6" fill="#e02020"/><path d="M8.9 8.9 L12.1 12.1 M12.1 8.9 L8.9 12.1" stroke="#fff" stroke-width="1.2"/></svg>
<div style="left:1473px;top:42px;width:1px;height:17.5px;background:#c4c4c4"></div>
<svg style="left:1481px;top:44.5px;width:15px;height:15px" width="15" height="15" viewBox="0 0 15 15"><rect x="1" y="1" width="12" height="8.5" fill="#fff" stroke="#1f63c8" stroke-width="1.8"/><path d="M7 10 V12 M3.5 12.8 H10.5" stroke="#1f63c8" stroke-width="1.6"/><circle cx="10.5" cy="10.8" r="3.6" fill="#f0b020" stroke="#333" stroke-width="0.5"/><path d="M10.5 10.8 L8.7 7.800000000000001 A3.4 3.4 0 0 1 12.3 7.800000000000001 Z M10.5 10.8 L13.9 11.0 A3.4 3.4 0 0 1 12.1 13.8 Z M10.5 10.8 L8.9 13.8 A3.4 3.4 0 0 1 7.1 11.0 Z" fill="#222"/></svg>
<svg style="left:1504px;top:44.5px;width:15px;height:15px" width="15" height="15" viewBox="0 0 15 15"><rect x="1" y="1" width="12" height="8.5" fill="#fff" stroke="#1f63c8" stroke-width="1.8"/><path d="M7 10 V12 M3.5 12.8 H10.5" stroke="#1f63c8" stroke-width="1.6"/><circle cx="10.5" cy="11" r="3.6" fill="#f0b020" stroke="#333" stroke-width="0.5"/><path d="M10.5 11 L8.7 8 A3.4 3.4 0 0 1 12.3 8 Z M10.5 11 L13.9 11.2 A3.4 3.4 0 0 1 12.1 14 Z M10.5 11 L8.9 14 A3.4 3.4 0 0 1 7.1 11.2 Z" fill="#222"/><path d="M10.5 7 V1 M8 3.5 L10.5 0.5 L13 3.5" stroke="#222" stroke-width="1.6" fill="#222"/></svg>
<svg style="left:21px;top:68.5px;width:12px;height:13px" width="12" height="13" viewBox="0 0 12 13"><path d="M1 9.5 H11 Q11 4.5 6.5 4.5 H3.5" stroke="#1a1aff" stroke-width="1" fill="#dcdcff"/><path d="M0.8 4.5 L4 1.5 V7 Z" fill="#1a1aff"/><rect x="0.6" y="5" width="1.5" height="5" fill="#1a1aff"/><rect x="5" y="8.8" width="1.4" height="1.4" fill="#1a1aff"/></svg>
<svg style="left:45px;top:68.5px;width:12px;height:13px" width="12" height="13" viewBox="0 0 12 13"><path d="M0.5 1 H8.5 V9" stroke="#1a1aff" stroke-width="1" fill="#dcdcff"/><path d="M2 1 V9.5" stroke="#1a1aff" stroke-width="1.2"/><path d="M3 3 L7 7" stroke="#1a1aff" stroke-width="1.1"/><path d="M8 8.5 L4 8.5 L8 4.5 Z" fill="#1a1aff"/></svg>
<svg style="left:69px;top:68.5px;width:12px;height:13px" width="12" height="13" viewBox="0 0 12 13"><path d="M1 1 V9.5 H8.5 V5 L6 2" stroke="#1a1aff" stroke-width="1" fill="#dcdcff"/><rect x="0.5" y="0.5" width="1.6" height="9.5" fill="#1a1aff"/><path d="M1.5 1 H6 L1.5 5.5 Z" fill="#1a1aff"/></svg>
<svg style="left:90px;top:68.5px;width:12px;height:13px" width="12" height="13" viewBox="0 0 12 13"><path d="M5 0.8 V10 H0.8 Z" fill="none" stroke="#1a1aff" stroke-width="1"/><path d="M4.6 3 V10 H2 Z" fill="#1a1aff" opacity="0.45"/><path d="M7 0.8 V10 H11.3 Z" fill="#dcdcff" stroke="#1a1aff" stroke-width="1"/></svg>
<svg style="left:114px;top:66.8px;width:12px;height:13px" width="12" height="13" viewBox="0 0 12 13"><path d="M0.5 7.2 H11.5" stroke="#1a1aff" stroke-width="1.1"/><path d="M1.5 5 L6 0.8 L10.5 5 Z M2 8.8 L6 12.5 L10 8.8 Z" fill="#dcdcff" stroke="#1a1aff" stroke-width="0.9"/></svg>
<div class="t" style="left:313px;top:45.49px;font-size:11px;line-height:11px;color:#1e1e1e;font-family:'Liberation Sans', sans-serif;font-weight:normal;transform:scaleX(0.8390);transform-origin:0 0;">RGB</div>
<div style="left:0px;top:275px;width:22px;height:320px;background:#6e6e6e"></div>
<div style="left:1579px;top:188px;width:21px;height:504px;background:#6e6e6e"></div>
<div style="left:0px;top:86px;width:22px;height:89px;background:#474747"></div>
<div style="left:0px;top:175px;width:22px;height:1px;background:#666"></div>
<div style="left:0px;top:176px;width:22px;height:99px;background:#474747"></div>
<div style="left:0px;top:595px;width:22px;height:97px;background:#474747"></div>
<div style="left:0px;top:692px;width:22px;height:1px;background:#5a5a5a"></div>
<div style="left:0px;top:693px;width:22px;height:84px;background:#474747"></div>
<div style="left:0px;top:777px;width:22px;height:1px;background:#5a5a5a"></div>
<div style="left:0px;top:778px;width:22px;height:98px;background:#474747"></div>
<div style="left:21px;top:86px;width:1px;height:790px;background:#3a3a3a"></div>
<div style="left:1579px;top:86px;width:21px;height:102px;background:#474747"></div>
<div style="left:1579px;top:692px;width:21px;height:84px;background:#474747"></div>
<div style="left:1579px;top:776px;width:21px;height:1px;background:#5a5a5a"></div>
<div style="left:1579px;top:777px;width:21px;height:99px;background:#474747"></div>
<div style="left:1578px;top:86px;width:1px;height:790px;background:#3a3a3a"></div>
<div class="t" style="left:6.69px;top:157.10px;font-size:9.2px;line-height:9.2px;color:#dcdcdc;font-family:'Liberation Sans', sans-serif;font-weight:normal;transform:rotate(-90deg) scaleX(1.0903);transform-origin:0 0;">View Explorer</div>
<div class="t" style="left:6.69px;top:256.30px;font-size:9.2px;line-height:9.2px;color:#dcdcdc;font-family:'Liberation Sans', sans-serif;font-weight:normal;transform:rotate(-90deg) scaleX(1.0856);transform-origin:0 0;">Format Explorer</div>
<div class="t" style="left:6.69px;top:671.70px;font-size:9.2px;line-height:9.2px;color:#dcdcdc;font-family:'Liberation Sans', sans-serif;font-weight:normal;transform:rotate(-90deg) scaleX(1.0772);transform-origin:0 0;">Object Explorer</div>
<div class="t" style="left:6.69px;top:757.20px;font-size:9.2px;line-height:9.2px;color:#dcdcdc;font-family:'Liberation Sans', sans-serif;font-weight:normal;transform:rotate(-90deg) scaleX(1.0857);transform-origin:0 0;">Script Editor</div>
<div class="t" style="left:6.69px;top:856.30px;font-size:9.2px;line-height:9.2px;color:#dcdcdc;font-family:'Liberation Sans', sans-serif;font-weight:normal;transform:rotate(-90deg) scaleX(1.0941);transform-origin:0 0;">History Explorer</div>
<div class="t" style="left:1585.39px;top:167.30px;font-size:9.2px;line-height:9.2px;color:#dcdcdc;font-family:'Liberation Sans', sans-serif;font-weight:normal;transform:rotate(-90deg) scaleX(1.0378);transform-origin:0 0;">Process Explorer</div>
<div class="t" style="left:1585.39px;top:755.50px;font-size:9.2px;line-height:9.2px;color:#dcdcdc;font-family:'Liberation Sans', sans-serif;font-weight:normal;transform:rotate(-90deg) scaleX(1.0651);transform-origin:0 0;">File Explorer</div>
<div class="t" style="left:1585.39px;top:856.30px;font-size:9.2px;line-height:9.2px;color:#dcdcdc;font-family:'Liberation Sans', sans-serif;font-weight:normal;transform:rotate(-90deg) scaleX(1.0295);transform-origin:0 0;">Process Console</div>
<div style="left:1411px;top:86px;width:2px;height:790px;background:linear-gradient(90deg,#8a7050,#b08858)"></div>
<svg style="left:2px;top:1px;width:14px;height:15px" width="14" height="15"><defs><radialGradient id="lg" cx="0.5" cy="0.7" r="0.6"><stop offset="0" stop-color="#e0e0ff"/><stop offset="0.6" stop-color="#6060ff"/><stop offset="1" stop-color="#0000f0"/></radialGradient></defs><path d="M7 1 L12.5 5 L11.5 11 L7 14 L2.5 11 L1.5 5 Z" fill="url(#lg)"/><path d="M7 2 L4 5.5 L7 14 L10 5.5 Z" fill="#0a0af0" opacity="0.35"/></svg>
<svg style="left:20px;top:1px;width:14px;height:14px" width="14" height="14"><defs><radialGradient id="cg" cx="0.5" cy="0.35" r="0.6"><stop offset="0" stop-color="#ffffff"/><stop offset="0.7" stop-color="#e8e6e4"/><stop offset="1" stop-color="#b0aeac"/></radialGradient></defs><circle cx="6.8" cy="6.8" r="5.6" fill="url(#cg)" stroke="#a8a6a4" stroke-width="0.8"/><circle cx="6.8" cy="7.3" r="0.8" fill="#999"/></svg>
<svg style="left:1545.9px;top:1.2px;width:13px;height:14px" width="13" height="14"><defs><radialGradient id="wb0" cx="0.5" cy="0.35" r="0.6"><stop offset="0" stop-color="#ffffff"/><stop offset="0.75" stop-color="#e6e4e2"/><stop offset="1" stop-color="#b4b2b0"/></radialGradient></defs><circle cx="6.5" cy="6.8" r="5.7" fill="url(#wb0)" stroke="#b0aeac" stroke-width="0.7"/><path d="M4 6 L6.5 8.3 L9 6" stroke="#222" stroke-width="1.3" fill="none"/></svg>
<svg style="left:1565.4px;top:1.2px;width:13px;height:14px" width="13" height="14"><defs><radialGradient id="wb1" cx="0.5" cy="0.35" r="0.6"><stop offset="0" stop-color="#ffffff"/><stop offset="0.75" stop-color="#e6e4e2"/><stop offset="1" stop-color="#b4b2b0"/></radialGradient></defs><circle cx="6.5" cy="6.8" r="5.7" fill="url(#wb1)" stroke="#b0aeac" stroke-width="0.7"/><path d="M6.5 4 L9 6.8 L6.5 9.6 L4 6.8 Z" fill="none" stroke="#222" stroke-width="1.3"/></svg>
<svg style="left:1584.7px;top:1.2px;width:13px;height:14px" width="13" height="14"><defs><radialGradient id="wb2" cx="0.5" cy="0.35" r="0.6"><stop offset="0" stop-color="#ffffff"/><stop offset="0.75" stop-color="#e6e4e2"/><stop offset="1" stop-color="#b4b2b0"/></radialGradient></defs><circle cx="6.5" cy="6.8" r="5.7" fill="url(#wb2)" stroke="#b0aeac" stroke-width="0.7"/><path d="M4.3 4.5 L8.7 9 M8.7 4.5 L4.3 9" stroke="#222" stroke-width="1.3"/></svg>
<div style="left:4.5px;top:159.5px;width:12px;height:12px;box-sizing:border-box;border:1px solid #1a1a1a;background:#3d9bff"></div>
<svg style="left:4px;top:259px;width:14px;height:14px" width="14" height="14"><circle cx="7" cy="7" r="6.2" fill="#e05ce0" stroke="#222" stroke-width="0.9"/></svg>
<svg style="left:3px;top:673.5px;width:15px;height:15px" width="15" height="15"><path d="M7.5 0.7 L14.2 4 V11 L7.5 14.3 L0.8 11 V4 Z" fill="#5cc030" stroke="#1d3a10" stroke-width="0.9"/><path d="M0.8 4 L7.5 7.3 L14.2 4" stroke="#1d3a10" stroke-width="0.9" fill="none"/><path d="M7.5 7.3 V14.3" stroke="#1d3a10" stroke-width="0.9"/><path d="M1.2 4 L7.5 1 L13.8 4 L7.5 7 Z" fill="#90e060"/></svg>
<svg style="left:4px;top:759.5px;width:14px;height:14px" width="14" height="14"><path d="M0.6 0.6 H8 L12.6 5.2 V12.6 H0.6 Z" fill="#1ec8a8" stroke="#0d3a30" stroke-width="0.9"/><path d="M8 0.6 V5.2 H12.6" fill="#8ae8d0" stroke="#0d3a30" stroke-width="0.8"/></svg>
<svg style="left:3.5px;top:858px;width:14px;height:15px" width="14" height="15"><path d="M6.8 0.8 L13 9.5 L6.8 14.2 L0.6 9.5 Z" fill="#f08a30" stroke="#40200a" stroke-width="0.8"/><path d="M6.8 0.8 V14.2" stroke="#40200a" stroke-width="0.9"/><path d="M6.8 0.8 L0.6 9.5 L6.8 14.2 Z" fill="#f8a050"/></svg>
<svg style="left:1581.2px;top:169.5px;width:15px;height:15px" width="15" height="15"><path d="M7.50 0.70 L9.38 2.97 L12.31 2.69 L12.03 5.62 L14.30 7.50 L12.03 9.38 L12.31 12.31 L9.38 12.03 L7.50 14.30 L5.62 12.03 L2.69 12.31 L2.97 9.38 L0.70 7.50 L2.97 5.62 L2.69 2.69 L5.62 2.97 Z" fill="#f2f2f2" stroke="#202020" stroke-width="0.7"/><circle cx="7.5" cy="7.5" r="2.9" fill="#4a4a4a" stroke="#202020" stroke-width="0.6"/></svg>
<svg style="left:1581.5px;top:757.5px;width:15px;height:15px" width="15" height="15"><path d="M1 3 V11.5 A6.5 2.6 0 0 0 14 11.5 V3 Z" fill="#dccca0" stroke="#2a2418" stroke-width="0.9"/><ellipse cx="7.5" cy="3" rx="6.5" ry="2.3" fill="#efe2c0" stroke="#2a2418" stroke-width="0.9"/></svg>
<svg style="left:1581px;top:858.5px;width:15px;height:15px" width="15" height="15"><path d="M0.8 1.5 L14 7.5 L1.5 14 L4.5 7.5 Z" fill="#f05a30" stroke="#3a1008" stroke-width="0.9"/><path d="M4.5 7.5 L14 7.5" stroke="#3a1008" stroke-width="0.8"/></svg>
<div style="left:69px;top:87px;width:345px;height:265px;background:#7a7a7a"></div>
<div style="left:69px;top:87px;width:340px;height:20px;background:#6b6b6b"></div>
<div style="left:74px;top:91px;width:12px;height:12px;box-sizing:border-box;border:2px solid #dedeff;background:#5a5a5a"></div>
<div class="t" style="left:104.6px;top:92.29px;font-size:11px;line-height:11px;color:#dadada;font-family:'Liberation Sans', sans-serif;font-weight:bold;transform:scaleX(1.0894);transform-origin:0 0;">RGB 1:1 Image71_Preview01 | &lt;*new*&gt;</div>
<svg style="left:347.2px;top:92.7px;width:64px;height:10px" width="64" height="10" viewBox="0 0 64 10"><rect x="0" y="3.7" width="8" height="2.6" fill="#f4f4f4"/><rect x="17.7" y="2.5" width="8.2" height="1.5" fill="#f4f4f4"/><path d="M21.8 3.6 L25.9 8.5 L17.7 8.5 Z" fill="#f4f4f4"/><path d="M37.4 1.1h2.7v2.7h2.8v2.7h-2.8v2.8h-2.7v-2.8h-2.7v-2.7h2.7z" fill="#f4f4f4"/><path d="M53.2 1.6 L60.2 8.6 M60.2 1.6 L53.2 8.6" stroke="#f4f4f4" stroke-width="1.9"/></svg>
<div style="left:89px;top:107px;width:323px;height:244px;background:#1c160d"></div>
<div id="img1" style="left:89px;top:107px;width:323px;height:244px;overflow:hidden"><svg style="left:0;top:0" width="323" height="244" viewBox="0 0 323 244"><defs><filter id="bl11" x="-20%" y="-20%" width="140%" height="140%"><feGaussianBlur stdDeviation="0.8"/></filter><filter id="bl211" x="-50%" y="-50%" width="200%" height="200%"><feGaussianBlur stdDeviation="1.2"/></filter><radialGradient id="g11_0" cx="167" cy="127" r="250" gradientUnits="userSpaceOnUse"><stop offset="0" stop-color="#52402a" stop-opacity="0.75"/><stop offset="0.55" stop-color="#2a2014" stop-opacity="0.45"/><stop offset="1" stop-color="#18130b" stop-opacity="0"/></radialGradient><radialGradient id="g11_1" cx="167" cy="127" r="100" gradientUnits="userSpaceOnUse"><stop offset="0" stop-color="#d8a850" stop-opacity="0.85"/><stop offset="0.15" stop-color="#c09048" stop-opacity="0.7"/><stop offset="0.4" stop-color="#806030" stop-opacity="0.38"/><stop offset="1" stop-color="#4a3820" stop-opacity="0"/></radialGradient><radialGradient id="g11_2" cx="167" cy="127" r="26" gradientUnits="userSpaceOnUse"><stop offset="0" stop-color="#fff8d0" stop-opacity="1"/><stop offset="0.35" stop-color="#f8e098" stop-opacity="0.95"/><stop offset="0.7" stop-color="#e0b868" stop-opacity="0.55"/><stop offset="1" stop-color="#a07840" stop-opacity="0"/></radialGradient></defs><rect width="323" height="244" fill="#16110a"/><rect width="323" height="244" fill="url(#g11_0)"/><rect width="323" height="244" fill="url(#g11_1)"/><rect width="323" height="244" fill="url(#g11_2)"/><g filter="url(#bl211)"><path d="M167.0 128.7 L212.2 126.6 L167.0 125.3 Z" fill="#f0d080" fill-opacity="0.31"/><path d="M166.8 128.7 L210.4 132.2 L167.2 125.3 Z" fill="#f0d080" fill-opacity="0.25"/><path d="M166.7 128.7 L210.1 135.2 L167.3 125.3 Z" fill="#f0d080" fill-opacity="0.26"/><path d="M166.3 128.5 L195.8 140.4 L167.7 125.5 Z" fill="#f0d080" fill-opacity="0.21"/><path d="M166.3 128.6 L214.9 148.4 L167.7 125.4 Z" fill="#f0d080" fill-opacity="0.27"/><path d="M166.1 128.5 L216.4 156.4 L167.9 125.5 Z" fill="#f0d080" fill-opacity="0.31"/><path d="M165.8 128.2 L200.1 160.1 L168.2 125.8 Z" fill="#f0d080" fill-opacity="0.19"/><path d="M165.8 128.2 L198.4 158.3 L168.2 125.8 Z" fill="#f0d080" fill-opacity="0.17"/><path d="M165.6 128.0 L188.1 156.2 L168.4 126.0 Z" fill="#f0d080" fill-opacity="0.16"/><path d="M165.5 127.7 L185.1 164.7 L168.5 126.3 Z" fill="#f0d080" fill-opacity="0.29"/><path d="M165.4 127.5 L181.5 172.3 L168.6 126.5 Z" fill="#f0d080" fill-opacity="0.24"/><path d="M165.3 127.3 L173.6 168.7 L168.7 126.7 Z" fill="#f0d080" fill-opacity="0.20"/><path d="M165.3 126.9 L164.9 184.8 L168.7 127.1 Z" fill="#f0d080" fill-opacity="0.29"/><path d="M165.3 126.8 L163.0 164.9 L168.7 127.2 Z" fill="#f0d080" fill-opacity="0.20"/><path d="M165.3 126.8 L162.5 157.7 L168.7 127.2 Z" fill="#f0d080" fill-opacity="0.28"/><path d="M165.4 126.5 L151.5 178.2 L168.6 127.5 Z" fill="#f0d080" fill-opacity="0.22"/><path d="M165.5 126.1 L139.9 173.2 L168.5 127.9 Z" fill="#f0d080" fill-opacity="0.16"/><path d="M165.5 126.2 L140.1 175.4 L168.5 127.8 Z" fill="#f0d080" fill-opacity="0.24"/><path d="M165.8 125.8 L138.3 155.6 L168.2 128.2 Z" fill="#f0d080" fill-opacity="0.17"/><path d="M165.9 125.7 L128.5 161.3 L168.1 128.3 Z" fill="#f0d080" fill-opacity="0.20"/><path d="M165.9 125.7 L137.7 152.2 L168.1 128.3 Z" fill="#f0d080" fill-opacity="0.31"/><path d="M166.3 125.5 L137.8 141.1 L167.7 128.5 Z" fill="#f0d080" fill-opacity="0.20"/><path d="M166.3 125.5 L139.4 140.6 L167.7 128.5 Z" fill="#f0d080" fill-opacity="0.29"/><path d="M166.5 125.4 L124.0 141.0 L167.5 128.6 Z" fill="#f0d080" fill-opacity="0.23"/><path d="M166.7 125.3 L117.7 136.4 L167.3 128.7 Z" fill="#f0d080" fill-opacity="0.18"/><path d="M167.0 125.3 L134.6 126.1 L167.0 128.7 Z" fill="#f0d080" fill-opacity="0.23"/><path d="M167.1 125.3 L130.3 124.5 L166.9 128.7 Z" fill="#f0d080" fill-opacity="0.32"/><path d="M167.5 125.4 L131.0 115.4 L166.5 128.6 Z" fill="#f0d080" fill-opacity="0.30"/><path d="M167.5 125.4 L128.6 114.3 L166.5 128.6 Z" fill="#f0d080" fill-opacity="0.30"/><path d="M167.9 125.5 L139.5 110.8 L166.1 128.5 Z" fill="#f0d080" fill-opacity="0.32"/><path d="M167.9 125.6 L136.3 107.3 L166.1 128.4 Z" fill="#f0d080" fill-opacity="0.28"/><path d="M168.1 125.7 L138.7 102.2 L165.9 128.3 Z" fill="#f0d080" fill-opacity="0.17"/><path d="M168.2 125.8 L134.9 94.1 L165.8 128.2 Z" fill="#f0d080" fill-opacity="0.20"/><path d="M168.5 126.1 L146.4 93.0 L165.5 127.9 Z" fill="#f0d080" fill-opacity="0.23"/><path d="M168.6 126.4 L152.3 86.6 L165.4 127.6 Z" fill="#f0d080" fill-opacity="0.25"/><path d="M168.7 126.6 L158.8 93.7 L165.3 127.4 Z" fill="#f0d080" fill-opacity="0.18"/><path d="M168.7 126.8 L161.4 74.6 L165.3 127.2 Z" fill="#f0d080" fill-opacity="0.20"/><path d="M168.7 126.8 L160.7 76.9 L165.3 127.2 Z" fill="#f0d080" fill-opacity="0.31"/><path d="M168.7 127.0 L167.1 70.4 L165.3 127.0 Z" fill="#f0d080" fill-opacity="0.30"/><path d="M168.7 127.4 L175.6 86.7 L165.3 126.6 Z" fill="#f0d080" fill-opacity="0.18"/><path d="M168.7 127.4 L179.5 71.5 L165.3 126.6 Z" fill="#f0d080" fill-opacity="0.20"/><path d="M168.5 127.8 L183.9 94.7 L165.5 126.2 Z" fill="#f0d080" fill-opacity="0.29"/><path d="M168.4 127.9 L187.7 95.7 L165.6 126.1 Z" fill="#f0d080" fill-opacity="0.19"/><path d="M168.3 128.1 L187.8 104.0 L165.7 125.9 Z" fill="#f0d080" fill-opacity="0.20"/><path d="M168.1 128.3 L206.6 90.7 L165.9 125.7 Z" fill="#f0d080" fill-opacity="0.26"/><path d="M168.1 128.3 L210.5 92.4 L165.9 125.7 Z" fill="#f0d080" fill-opacity="0.19"/><path d="M168.0 128.4 L197.4 106.2 L166.0 125.6 Z" fill="#f0d080" fill-opacity="0.23"/><path d="M167.8 128.5 L197.5 111.7 L166.2 125.5 Z" fill="#f0d080" fill-opacity="0.22"/><path d="M167.4 128.7 L198.9 119.3 L166.6 125.3 Z" fill="#f0d080" fill-opacity="0.22"/><path d="M167.1 128.7 L224.4 124.3 L166.9 125.3 Z" fill="#f0d080" fill-opacity="0.27"/></g><g filter="url(#bl11)"><circle cx="223.3" cy="142.6" r="1.01" fill="#e8dcc0" fill-opacity="0.10"/><circle cx="153.4" cy="87.2" r="1.15" fill="#e8c8b0" fill-opacity="0.10"/><circle cx="205.5" cy="117.7" r="1.48" fill="#e8dcc0" fill-opacity="0.24"/><circle cx="24.3" cy="133.2" r="1.49" fill="#f0e0a0" fill-opacity="0.64"/><circle cx="238.1" cy="31.6" r="1.67" fill="#e8dcc0" fill-opacity="0.26"/><circle cx="221.3" cy="219.8" r="1.60" fill="#e8dcc0" fill-opacity="0.30"/><circle cx="278.9" cy="139.8" r="1.40" fill="#e8c8b0" fill-opacity="0.28"/><circle cx="4.0" cy="17.6" r="0.97" fill="#f0d8b8" fill-opacity="0.14"/><circle cx="284.2" cy="177.7" r="1.21" fill="#e8c8b0" fill-opacity="0.51"/><circle cx="147.9" cy="112.9" r="1.33" fill="#e8c8b0" fill-opacity="0.37"/><circle cx="9.6" cy="146.7" r="1.28" fill="#f0e0a0" fill-opacity="0.20"/><circle cx="36.5" cy="190.3" r="1.43" fill="#e8dcc0" fill-opacity="0.34"/><circle cx="118.8" cy="34.9" r="1.39" fill="#f0d8b8" fill-opacity="0.37"/><circle cx="213.2" cy="107.8" r="1.61" fill="#f0e0a0" fill-opacity="0.25"/><circle cx="80.9" cy="154.7" r="1.54" fill="#d8e8e0" fill-opacity="0.53"/><circle cx="284.3" cy="93.8" r="1.37" fill="#d8e8e0" fill-opacity="0.24"/><circle cx="43.5" cy="85.6" r="1.62" fill="#e8dcc0" fill-opacity="0.11"/><circle cx="306.9" cy="67.5" r="1.04" fill="#f0d8b8" fill-opacity="0.32"/><circle cx="299.0" cy="202.7" r="1.21" fill="#f0e0a0" fill-opacity="0.37"/><circle cx="101.9" cy="204.7" r="1.69" fill="#e8dcc0" fill-opacity="0.32"/><circle cx="267.7" cy="67.9" r="1.39" fill="#f0d8b8" fill-opacity="0.47"/><circle cx="184.3" cy="75.4" r="1.53" fill="#d8e8e0" fill-opacity="0.10"/><circle cx="130.9" cy="46.3" r="1.52" fill="#d8e8e0" fill-opacity="0.22"/><circle cx="257.4" cy="240.1" r="0.99" fill="#e8c8b0" fill-opacity="0.14"/><circle cx="211.6" cy="197.0" r="1.67" fill="#d8e8e0" fill-opacity="0.48"/><circle cx="266.1" cy="62.5" r="1.47" fill="#e8c8b0" fill-opacity="0.53"/><circle cx="230.7" cy="43.7" r="1.12" fill="#f0e0a0" fill-opacity="0.26"/><circle cx="305.8" cy="122.1" r="1.70" fill="#f0e0a0" fill-opacity="0.16"/><circle cx="292.7" cy="21.3" r="1.65" fill="#d8e8e0" fill-opacity="0.50"/><circle cx="145.5" cy="48.0" r="1.61" fill="#e8c8b0" fill-opacity="0.09"/><circle cx="183.7" cy="214.6" r="1.54" fill="#d0e0f0" fill-opacity="0.67"/><circle cx="105.4" cy="239.7" r="0.98" fill="#f0e0a0" fill-opacity="0.61"/><circle cx="298.5" cy="30.1" r="1.09" fill="#e8dcc0" fill-opacity="0.29"/><circle cx="315.7" cy="131.0" r="1.53" fill="#f0e0a0" fill-opacity="0.25"/><circle cx="276.4" cy="85.0" r="0.97" fill="#e8c8b0" fill-opacity="0.32"/><circle cx="136.1" cy="67.2" r="1.64" fill="#e8dcc0" fill-opacity="0.19"/><circle cx="138.5" cy="8.6" r="1.33" fill="#d8e8e0" fill-opacity="0.48"/><circle cx="152.0" cy="244.0" r="1.62" fill="#f0e0a0" fill-opacity="0.37"/><circle cx="222.7" cy="230.8" r="1.29" fill="#e8dcc0" fill-opacity="0.68"/><circle cx="244.8" cy="107.2" r="1.35" fill="#e8c8b0" fill-opacity="0.58"/><circle cx="206.4" cy="127.6" r="1.57" fill="#f0d8b8" fill-opacity="0.39"/><circle cx="216.8" cy="233.0" r="1.60" fill="#f0d8b8" fill-opacity="0.43"/><circle cx="274.8" cy="236.3" r="1.32" fill="#d8e8e0" fill-opacity="0.40"/><circle cx="132.8" cy="27.9" r="0.90" fill="#e8c8b0" fill-opacity="0.28"/><circle cx="313.1" cy="125.9" r="1.22" fill="#e8c8b0" fill-opacity="0.56"/><circle cx="39.4" cy="22.7" r="1.03" fill="#d0e0f0" fill-opacity="0.66"/><circle cx="133.6" cy="233.5" r="1.64" fill="#d0e0f0" fill-opacity="0.22"/><circle cx="159.3" cy="82.9" r="1.62" fill="#d0e0f0" fill-opacity="0.66"/><circle cx="169.6" cy="26.5" r="1.24" fill="#f0d8b8" fill-opacity="0.10"/><circle cx="41.8" cy="190.1" r="0.92" fill="#d8e8e0" fill-opacity="0.18"/><circle cx="3.8" cy="69.3" r="1.48" fill="#d0e0f0" fill-opacity="0.20"/><circle cx="33.9" cy="178.3" r="1.00" fill="#f0d8b8" fill-opacity="0.36"/><circle cx="231.8" cy="171.1" r="1.60" fill="#f0e0a0" fill-opacity="0.10"/><circle cx="133.5" cy="129.2" r="1.03" fill="#f0e0a0" fill-opacity="0.18"/><circle cx="172.5" cy="53.3" r="1.07" fill="#e8c8b0" fill-opacity="0.38"/><circle cx="276.7" cy="56.8" r="1.49" fill="#d8e8e0" fill-opacity="0.57"/><circle cx="102.0" cy="76.9" r="1.64" fill="#d8e8e0" fill-opacity="0.19"/><circle cx="286.7" cy="32.7" r="1.09" fill="#f0d8b8" fill-opacity="0.51"/><circle cx="125.3" cy="106.1" r="1.65" fill="#f0e0a0" fill-opacity="0.38"/><circle cx="40.7" cy="98.3" r="1.45" fill="#d8e8e0" fill-opacity="0.10"/><circle cx="184.1" cy="87.3" r="1.56" fill="#f0e0a0" fill-opacity="0.27"/><circle cx="163.3" cy="185.0" r="1.30" fill="#d8e8e0" fill-opacity="0.48"/><circle cx="259.3" cy="117.6" r="0.92" fill="#e8c8b0" fill-opacity="0.53"/><circle cx="166.3" cy="138.8" r="1.02" fill="#d8e8e0" fill-opacity="0.17"/><circle cx="55.7" cy="38.6" r="1.13" fill="#e8c8b0" fill-opacity="0.47"/><circle cx="20.0" cy="232.2" r="1.27" fill="#f0d8b8" fill-opacity="0.53"/><circle cx="126.3" cy="104.1" r="1.18" fill="#f0d8b8" fill-opacity="0.19"/><circle cx="4.3" cy="171.1" r="1.58" fill="#d0e0f0" fill-opacity="0.17"/><circle cx="116.1" cy="90.3" r="1.64" fill="#e8dcc0" fill-opacity="0.42"/><circle cx="165.6" cy="3.8" r="1.61" fill="#f0e0a0" fill-opacity="0.56"/><circle cx="282.8" cy="221.7" r="1.65" fill="#d8e8e0" fill-opacity="0.40"/><circle cx="162.9" cy="239.8" r="1.54" fill="#e8dcc0" fill-opacity="0.21"/><circle cx="240.5" cy="189.8" r="1.55" fill="#f0d8b8" fill-opacity="0.30"/><circle cx="284.2" cy="169.5" r="1.51" fill="#d0e0f0" fill-opacity="0.54"/><circle cx="66.8" cy="45.1" r="1.54" fill="#e8dcc0" fill-opacity="0.24"/><circle cx="3.4" cy="86.8" r="1.41" fill="#d8e8e0" fill-opacity="0.44"/><circle cx="88.2" cy="234.6" r="1.14" fill="#d0e0f0" fill-opacity="0.19"/><circle cx="184.0" cy="130.1" r="1.21" fill="#f0e0a0" fill-opacity="0.72"/><circle cx="68.9" cy="29.2" r="1.22" fill="#e8dcc0" fill-opacity="0.40"/><circle cx="198.8" cy="180.3" r="1.11" fill="#e8dcc0" fill-opacity="0.29"/><circle cx="245.9" cy="158.1" r="0.91" fill="#f0d8b8" fill-opacity="0.21"/><circle cx="292.5" cy="134.2" r="1.31" fill="#e8c8b0" fill-opacity="0.69"/><circle cx="273.4" cy="24.3" r="1.26" fill="#e8c8b0" fill-opacity="0.45"/><circle cx="193.0" cy="185.3" r="0.94" fill="#d8e8e0" fill-opacity="0.66"/><circle cx="124.6" cy="236.7" r="1.58" fill="#e8c8b0" fill-opacity="0.38"/><circle cx="18.9" cy="230.6" r="1.24" fill="#e8c8b0" fill-opacity="0.37"/><circle cx="100.9" cy="129.4" r="1.29" fill="#f0d8b8" fill-opacity="0.22"/><circle cx="214.3" cy="182.5" r="0.92" fill="#e8c8b0" fill-opacity="0.54"/><circle cx="13.8" cy="38.2" r="1.50" fill="#f0d8b8" fill-opacity="0.29"/><circle cx="241.7" cy="12.2" r="1.69" fill="#e8dcc0" fill-opacity="0.67"/><circle cx="257.6" cy="54.6" r="1.48" fill="#d8e8e0" fill-opacity="0.21"/><circle cx="14.7" cy="24.0" r="1.55" fill="#d8e8e0" fill-opacity="0.64"/><circle cx="316.2" cy="199.3" r="1.38" fill="#e8c8b0" fill-opacity="0.14"/><circle cx="134.7" cy="28.8" r="1.59" fill="#d8e8e0" fill-opacity="0.27"/><circle cx="40.2" cy="108.1" r="1.43" fill="#f0d8b8" fill-opacity="0.33"/><circle cx="206.6" cy="166.4" r="1.19" fill="#d8e8e0" fill-opacity="0.52"/><circle cx="307.7" cy="179.2" r="1.09" fill="#f0d8b8" fill-opacity="0.14"/><circle cx="253.3" cy="152.5" r="1.19" fill="#f0e0a0" fill-opacity="0.22"/><circle cx="234.2" cy="170.6" r="1.05" fill="#d8e8e0" fill-opacity="0.22"/><circle cx="61.3" cy="60.7" r="1.68" fill="#f0e0a0" fill-opacity="0.65"/><circle cx="12.8" cy="14.8" r="1.12" fill="#e8c8b0" fill-opacity="0.31"/><circle cx="12.3" cy="54.3" r="1.12" fill="#f0e0a0" fill-opacity="0.53"/><circle cx="52.0" cy="57.3" r="1.69" fill="#f0d8b8" fill-opacity="0.34"/><circle cx="68.0" cy="83.9" r="1.50" fill="#e8dcc0" fill-opacity="0.59"/><circle cx="259.1" cy="109.1" r="1.56" fill="#d8e8e0" fill-opacity="0.59"/><circle cx="143.5" cy="182.3" r="1.21" fill="#d8e8e0" fill-opacity="0.16"/><circle cx="211.1" cy="241.4" r="1.16" fill="#f0e0a0" fill-opacity="0.38"/><circle cx="266.8" cy="44.9" r="1.42" fill="#d0e0f0" fill-opacity="0.41"/><circle cx="282.7" cy="19.2" r="0.97" fill="#d0e0f0" fill-opacity="0.40"/><circle cx="263.3" cy="113.1" r="1.56" fill="#f0d8b8" fill-opacity="0.09"/><circle cx="68.9" cy="161.6" r="0.97" fill="#f0e0a0" fill-opacity="0.24"/><circle cx="246.8" cy="80.0" r="1.61" fill="#f0e0a0" fill-opacity="0.19"/><circle cx="234.5" cy="89.4" r="0.99" fill="#e8c8b0" fill-opacity="0.49"/><circle cx="192.1" cy="220.2" r="1.45" fill="#e8c8b0" fill-opacity="0.22"/><circle cx="259.4" cy="74.4" r="1.15" fill="#f0e0a0" fill-opacity="0.29"/><circle cx="289.0" cy="60.6" r="1.19" fill="#f0d8b8" fill-opacity="0.27"/><circle cx="218.7" cy="142.7" r="1.54" fill="#f0d8b8" fill-opacity="0.52"/><circle cx="257.5" cy="131.9" r="1.57" fill="#d8e8e0" fill-opacity="0.39"/><circle cx="29.0" cy="110.9" r="1.58" fill="#d8e8e0" fill-opacity="0.57"/><circle cx="166.6" cy="132.8" r="1.35" fill="#f0e0a0" fill-opacity="0.69"/><circle cx="271.9" cy="103.1" r="1.37" fill="#e8c8b0" fill-opacity="0.24"/><circle cx="27.1" cy="19.9" r="1.49" fill="#e8dcc0" fill-opacity="0.64"/><circle cx="8.4" cy="159.5" r="0.98" fill="#d0e0f0" fill-opacity="0.57"/><circle cx="79.3" cy="53.8" r="1.51" fill="#d0e0f0" fill-opacity="0.37"/><circle cx="127.4" cy="82.4" r="1.67" fill="#d0e0f0" fill-opacity="0.47"/><circle cx="157.6" cy="196.4" r="0.96" fill="#e8dcc0" fill-opacity="0.43"/><circle cx="132.6" cy="201.6" r="1.43" fill="#d0e0f0" fill-opacity="0.60"/><circle cx="269.3" cy="216.8" r="1.67" fill="#e8c8b0" fill-opacity="0.45"/><circle cx="116.9" cy="2.5" r="0.99" fill="#d8e8e0" fill-opacity="0.65"/><circle cx="79.4" cy="39.6" r="1.41" fill="#f0d8b8" fill-opacity="0.48"/><circle cx="66.0" cy="103.7" r="1.13" fill="#e8dcc0" fill-opacity="0.69"/><circle cx="152.3" cy="178.3" r="1.14" fill="#d8e8e0" fill-opacity="0.16"/><circle cx="294.6" cy="183.8" r="0.91" fill="#e8dcc0" fill-opacity="0.34"/><circle cx="101.0" cy="48.2" r="1.19" fill="#e8c8b0" fill-opacity="0.41"/><circle cx="231.7" cy="145.1" r="1.08" fill="#f0d8b8" fill-opacity="0.17"/><circle cx="130.0" cy="222.2" r="1.65" fill="#e8c8b0" fill-opacity="0.44"/><circle cx="154.9" cy="63.6" r="1.61" fill="#f0d8b8" fill-opacity="0.65"/><circle cx="213.3" cy="188.3" r="0.97" fill="#d0e0f0" fill-opacity="0.61"/><circle cx="16.1" cy="231.2" r="1.54" fill="#e8c8b0" fill-opacity="0.28"/><circle cx="256.7" cy="188.9" r="1.53" fill="#d8e8e0" fill-opacity="0.11"/><circle cx="288.2" cy="213.3" r="1.62" fill="#d8e8e0" fill-opacity="0.32"/><circle cx="230.4" cy="147.9" r="1.03" fill="#f0d8b8" fill-opacity="0.16"/><circle cx="46.8" cy="221.6" r="1.55" fill="#f0e0a0" fill-opacity="0.15"/><circle cx="320.8" cy="65.0" r="1.33" fill="#d8e8e0" fill-opacity="0.16"/><circle cx="0.4" cy="200.4" r="1.58" fill="#e8dcc0" fill-opacity="0.58"/><circle cx="113.6" cy="150.0" r="1.32" fill="#f0e0a0" fill-opacity="0.63"/><circle cx="151.4" cy="233.1" r="1.37" fill="#f0d8b8" fill-opacity="0.60"/><circle cx="6.1" cy="45.8" r="1.05" fill="#d0e0f0" fill-opacity="0.48"/><circle cx="67.3" cy="132.6" r="1.32" fill="#f0d8b8" fill-opacity="0.16"/><circle cx="102.1" cy="98.9" r="1.35" fill="#f0e0a0" fill-opacity="0.71"/><circle cx="231.0" cy="87.8" r="1.45" fill="#d0e0f0" fill-opacity="0.14"/><circle cx="218.3" cy="182.2" r="1.53" fill="#d0e0f0" fill-opacity="0.14"/><circle cx="4.0" cy="92.0" r="1.47" fill="#e8c8b0" fill-opacity="0.20"/><circle cx="36.6" cy="188.3" r="1.58" fill="#f0e0a0" fill-opacity="0.59"/><circle cx="66.8" cy="150.3" r="1.13" fill="#e8c8b0" fill-opacity="0.28"/><circle cx="242.2" cy="232.8" r="1.50" fill="#e8dcc0" fill-opacity="0.39"/><circle cx="82.8" cy="48.8" r="1.49" fill="#f0d8b8" fill-opacity="0.25"/><circle cx="181.8" cy="176.6" r="1.17" fill="#e8dcc0" fill-opacity="0.58"/><circle cx="32.9" cy="151.7" r="1.01" fill="#d8e8e0" fill-opacity="0.44"/><circle cx="58.1" cy="98.2" r="1.57" fill="#e8dcc0" fill-opacity="0.41"/><circle cx="32.4" cy="7.9" r="1.69" fill="#e8dcc0" fill-opacity="0.31"/><circle cx="110.4" cy="200.9" r="1.64" fill="#d8e8e0" fill-opacity="0.15"/><circle cx="247.7" cy="200.4" r="1.21" fill="#d0e0f0" fill-opacity="0.25"/><circle cx="201.2" cy="177.4" r="1.39" fill="#d8e8e0" fill-opacity="0.24"/><circle cx="213.3" cy="148.5" r="0.91" fill="#f0d8b8" fill-opacity="0.25"/><circle cx="99.1" cy="107.7" r="1.35" fill="#f0d8b8" fill-opacity="0.18"/><circle cx="254.7" cy="201.3" r="1.39" fill="#e8c8b0" fill-opacity="0.16"/><circle cx="291.7" cy="133.8" r="1.18" fill="#d8e8e0" fill-opacity="0.35"/><circle cx="185.5" cy="48.4" r="1.65" fill="#f0e0a0" fill-opacity="0.71"/><circle cx="269.9" cy="48.1" r="1.66" fill="#d8e8e0" fill-opacity="0.44"/><circle cx="250.8" cy="33.3" r="1.28" fill="#f0d8b8" fill-opacity="0.30"/><circle cx="106.3" cy="226.7" r="1.19" fill="#e8dcc0" fill-opacity="0.33"/><circle cx="146.1" cy="178.1" r="1.09" fill="#e8c8b0" fill-opacity="0.40"/><circle cx="181.1" cy="136.7" r="1.11" fill="#f0d8b8" fill-opacity="0.64"/><circle cx="194.3" cy="29.9" r="1.56" fill="#f0d8b8" fill-opacity="0.23"/><circle cx="77.8" cy="140.0" r="1.56" fill="#e8c8b0" fill-opacity="0.17"/><circle cx="262.0" cy="110.9" r="1.22" fill="#f0e0a0" fill-opacity="0.55"/><circle cx="44.7" cy="184.5" r="1.58" fill="#e8c8b0" fill-opacity="0.64"/><circle cx="191.2" cy="196.1" r="0.91" fill="#d0e0f0" fill-opacity="0.18"/><circle cx="10.7" cy="128.8" r="0.99" fill="#f0d8b8" fill-opacity="0.30"/><circle cx="167.9" cy="64.3" r="1.35" fill="#f0e0a0" fill-opacity="0.25"/><circle cx="253.2" cy="176.1" r="1.53" fill="#d0e0f0" fill-opacity="0.29"/><circle cx="193.8" cy="114.7" r="1.23" fill="#f0e0a0" fill-opacity="0.44"/><circle cx="182.4" cy="99.3" r="1.13" fill="#d0e0f0" fill-opacity="0.63"/><circle cx="270.8" cy="208.6" r="1.23" fill="#e8c8b0" fill-opacity="0.31"/><circle cx="37.0" cy="229.1" r="1.16" fill="#d0e0f0" fill-opacity="0.37"/><circle cx="292.1" cy="78.2" r="0.94" fill="#d0e0f0" fill-opacity="0.51"/><circle cx="236.4" cy="145.8" r="1.50" fill="#e8c8b0" fill-opacity="0.24"/><circle cx="283.3" cy="59.6" r="1.58" fill="#d0e0f0" fill-opacity="0.20"/><circle cx="314.1" cy="116.1" r="0.98" fill="#e8c8b0" fill-opacity="0.64"/><circle cx="98.9" cy="96.5" r="1.09" fill="#f0e0a0" fill-opacity="0.12"/><circle cx="312.2" cy="162.4" r="1.59" fill="#d8e8e0" fill-opacity="0.30"/><circle cx="71.6" cy="182.2" r="1.35" fill="#e8dcc0" fill-opacity="0.64"/><circle cx="167.8" cy="31.7" r="1.61" fill="#d0e0f0" fill-opacity="0.40"/><circle cx="0.2" cy="59.5" r="1.14" fill="#e8dcc0" fill-opacity="0.25"/><circle cx="142.4" cy="109.8" r="1.32" fill="#f0e0a0" fill-opacity="0.15"/><circle cx="189.1" cy="11.2" r="0.92" fill="#f0d8b8" fill-opacity="0.64"/><circle cx="104.8" cy="34.9" r="1.52" fill="#d8e8e0" fill-opacity="0.54"/><circle cx="65.5" cy="209.6" r="1.45" fill="#f0d8b8" fill-opacity="0.11"/><circle cx="270.6" cy="86.4" r="1.28" fill="#f0e0a0" fill-opacity="0.17"/><circle cx="321.5" cy="49.3" r="1.41" fill="#e8dcc0" fill-opacity="0.18"/><circle cx="210.0" cy="74.7" r="1.55" fill="#f0d8b8" fill-opacity="0.68"/><circle cx="280.9" cy="174.0" r="1.01" fill="#d0e0f0" fill-opacity="0.49"/><circle cx="134.1" cy="41.3" r="1.59" fill="#f0e0a0" fill-opacity="0.14"/><circle cx="63.5" cy="44.2" r="1.09" fill="#f0d8b8" fill-opacity="0.46"/><circle cx="120.3" cy="161.5" r="1.61" fill="#d8e8e0" fill-opacity="0.41"/><circle cx="315.6" cy="218.5" r="1.04" fill="#d8e8e0" fill-opacity="0.19"/><circle cx="206.7" cy="22.0" r="1.69" fill="#e8c8b0" fill-opacity="0.32"/><circle cx="23.8" cy="221.4" r="0.91" fill="#e8c8b0" fill-opacity="0.41"/><circle cx="81.0" cy="196.0" r="0.97" fill="#d8e8e0" fill-opacity="0.23"/><circle cx="79.4" cy="68.1" r="1.34" fill="#d8e8e0" fill-opacity="0.17"/><circle cx="319.0" cy="8.2" r="1.27" fill="#d0e0f0" fill-opacity="0.52"/><circle cx="0.9" cy="217.5" r="0.95" fill="#f0e0a0" fill-opacity="0.12"/><circle cx="293.8" cy="78.3" r="1.29" fill="#f0d8b8" fill-opacity="0.10"/><circle cx="163.3" cy="206.3" r="1.45" fill="#e8c8b0" fill-opacity="0.37"/><circle cx="56.2" cy="190.2" r="1.03" fill="#d8e8e0" fill-opacity="0.42"/><circle cx="215.9" cy="133.7" r="1.10" fill="#f0e0a0" fill-opacity="0.50"/><circle cx="76.2" cy="119.3" r="1.08" fill="#d0e0f0" fill-opacity="0.41"/><circle cx="84.4" cy="49.4" r="1.68" fill="#d0e0f0" fill-opacity="0.11"/><circle cx="281.9" cy="43.9" r="1.02" fill="#d0e0f0" fill-opacity="0.10"/><circle cx="260.4" cy="122.9" r="1.48" fill="#e8dcc0" fill-opacity="0.60"/><circle cx="23.4" cy="221.4" r="1.36" fill="#f0e0a0" fill-opacity="0.38"/><circle cx="76.9" cy="35.7" r="1.15" fill="#f0d8b8" fill-opacity="0.11"/><circle cx="264.7" cy="180.2" r="1.52" fill="#d0e0f0" fill-opacity="0.54"/><circle cx="28.6" cy="200.2" r="1.04" fill="#d8e8e0" fill-opacity="0.21"/><circle cx="160.5" cy="160.8" r="1.38" fill="#f0d8b8" fill-opacity="0.33"/><circle cx="132.6" cy="88.9" r="1.07" fill="#e8dcc0" fill-opacity="0.69"/><circle cx="41.5" cy="184.3" r="1.38" fill="#f0e0a0" fill-opacity="0.15"/><circle cx="147.1" cy="181.8" r="0.93" fill="#e8c8b0" fill-opacity="0.20"/><circle cx="45.7" cy="95.9" r="1.14" fill="#e8dcc0" fill-opacity="0.31"/><circle cx="313.8" cy="165.9" r="1.47" fill="#e8c8b0" fill-opacity="0.70"/><circle cx="74.2" cy="61.8" r="1.34" fill="#d0e0f0" fill-opacity="0.20"/><circle cx="27.8" cy="55.4" r="1.15" fill="#e8c8b0" fill-opacity="0.67"/><circle cx="70.5" cy="39.1" r="1.37" fill="#f0e0a0" fill-opacity="0.71"/><circle cx="110.9" cy="169.5" r="1.59" fill="#d8e8e0" fill-opacity="0.41"/><circle cx="149.4" cy="95.9" r="1.57" fill="#e8dcc0" fill-opacity="0.28"/><circle cx="69.6" cy="84.8" r="1.05" fill="#d8e8e0" fill-opacity="0.39"/><circle cx="155.1" cy="97.7" r="1.38" fill="#d0e0f0" fill-opacity="0.53"/><circle cx="144.4" cy="242.4" r="1.44" fill="#d8e8e0" fill-opacity="0.61"/><circle cx="174.5" cy="102.3" r="0.94" fill="#f0d8b8" fill-opacity="0.22"/><circle cx="200.6" cy="126.6" r="1.49" fill="#e8c8b0" fill-opacity="0.36"/><circle cx="298.3" cy="174.5" r="1.11" fill="#d8e8e0" fill-opacity="0.27"/><circle cx="235.2" cy="189.6" r="1.01" fill="#e8dcc0" fill-opacity="0.20"/><circle cx="6.6" cy="78.6" r="1.21" fill="#d0e0f0" fill-opacity="0.12"/><circle cx="105.1" cy="188.1" r="1.32" fill="#d0e0f0" fill-opacity="0.11"/><circle cx="196.4" cy="119.2" r="1.05" fill="#d8e8e0" fill-opacity="0.36"/><circle cx="10.3" cy="76.2" r="1.24" fill="#d8e8e0" fill-opacity="0.38"/><circle cx="167.0" cy="133.7" r="1.15" fill="#d0e0f0" fill-opacity="0.32"/><circle cx="47.5" cy="50.0" r="1.12" fill="#d0e0f0" fill-opacity="0.50"/><circle cx="44.1" cy="126.1" r="1.18" fill="#f0d8b8" fill-opacity="0.13"/><circle cx="111.4" cy="52.6" r="0.93" fill="#f0e0a0" fill-opacity="0.10"/><circle cx="156.0" cy="2.8" r="1.51" fill="#f0e0a0" fill-opacity="0.52"/><circle cx="216.6" cy="224.3" r="1.07" fill="#f0e0a0" fill-opacity="0.48"/><circle cx="39.4" cy="189.0" r="1.20" fill="#f0d8b8" fill-opacity="0.55"/><circle cx="29.0" cy="104.4" r="1.21" fill="#d0e0f0" fill-opacity="0.11"/><circle cx="300.6" cy="69.4" r="1.46" fill="#d0e0f0" fill-opacity="0.19"/><circle cx="65.2" cy="187.5" r="1.18" fill="#e8c8b0" fill-opacity="0.50"/><circle cx="30.1" cy="83.4" r="1.24" fill="#e8c8b0" fill-opacity="0.16"/><circle cx="83.0" cy="208.1" r="1.15" fill="#d0e0f0" fill-opacity="0.65"/><circle cx="38.9" cy="222.0" r="1.63" fill="#d0e0f0" fill-opacity="0.22"/><circle cx="160.1" cy="143.0" r="1.28" fill="#f0d8b8" fill-opacity="0.25"/><circle cx="23.3" cy="8.6" r="1.16" fill="#f0d8b8" fill-opacity="0.28"/><circle cx="84.6" cy="163.0" r="1.05" fill="#e8c8b0" fill-opacity="0.33"/><circle cx="110.3" cy="219.0" r="0.92" fill="#d8e8e0" fill-opacity="0.49"/><circle cx="249.2" cy="153.1" r="1.40" fill="#d0e0f0" fill-opacity="0.30"/><circle cx="20.6" cy="16.7" r="1.27" fill="#d0e0f0" fill-opacity="0.32"/><circle cx="12.3" cy="33.1" r="1.31" fill="#f0d8b8" fill-opacity="0.24"/><circle cx="152.8" cy="5.1" r="1.38" fill="#f0d8b8" fill-opacity="0.22"/><circle cx="219.7" cy="57.2" r="0.90" fill="#d0e0f0" fill-opacity="0.38"/><circle cx="1.1" cy="133.5" r="1.58" fill="#e8dcc0" fill-opacity="0.54"/><circle cx="201.7" cy="136.8" r="1.56" fill="#f0d8b8" fill-opacity="0.69"/><circle cx="85.3" cy="25.4" r="0.92" fill="#d8e8e0" fill-opacity="0.56"/><circle cx="224.6" cy="167.5" r="1.67" fill="#d8e8e0" fill-opacity="0.58"/><circle cx="107.6" cy="168.2" r="1.54" fill="#d0e0f0" fill-opacity="0.23"/><circle cx="92.3" cy="182.7" r="1.33" fill="#d8e8e0" fill-opacity="0.20"/><circle cx="117.0" cy="172.3" r="1.63" fill="#e8dcc0" fill-opacity="0.52"/><circle cx="319.5" cy="199.6" r="1.61" fill="#d0e0f0" fill-opacity="0.24"/><circle cx="165.5" cy="165.7" r="0.93" fill="#d0e0f0" fill-opacity="0.43"/><circle cx="281.0" cy="13.0" r="1.10" fill="#f0e0a0" fill-opacity="0.36"/><circle cx="126.7" cy="174.7" r="1.10" fill="#f0d8b8" fill-opacity="0.50"/><circle cx="59.3" cy="208.9" r="1.06" fill="#d8e8e0" fill-opacity="0.39"/><circle cx="183.3" cy="102.6" r="1.47" fill="#f0d8b8" fill-opacity="0.43"/><circle cx="258.8" cy="30.6" r="1.20" fill="#d8e8e0" fill-opacity="0.47"/><circle cx="210.6" cy="237.6" r="1.28" fill="#d8e8e0" fill-opacity="0.48"/><circle cx="86.6" cy="66.1" r="1.10" fill="#d0e0f0" fill-opacity="0.46"/><circle cx="301.5" cy="241.3" r="0.94" fill="#e8dcc0" fill-opacity="0.50"/><circle cx="281.3" cy="47.3" r="1.19" fill="#e8dcc0" fill-opacity="0.38"/><circle cx="130.7" cy="220.8" r="1.57" fill="#d8e8e0" fill-opacity="0.60"/><circle cx="120.6" cy="75.4" r="1.54" fill="#f0d8b8" fill-opacity="0.59"/><circle cx="72.2" cy="176.1" r="1.23" fill="#e8c8b0" fill-opacity="0.15"/><circle cx="125.8" cy="169.3" r="1.34" fill="#d8e8e0" fill-opacity="0.56"/><circle cx="142.8" cy="203.5" r="1.34" fill="#d0e0f0" fill-opacity="0.63"/><circle cx="139.7" cy="37.1" r="1.61" fill="#e8c8b0" fill-opacity="0.22"/><circle cx="46.4" cy="152.6" r="1.12" fill="#d0e0f0" fill-opacity="0.20"/><circle cx="65.0" cy="134.6" r="1.35" fill="#e8dcc0" fill-opacity="0.16"/><circle cx="288.3" cy="75.5" r="0.96" fill="#d0e0f0" fill-opacity="0.17"/><circle cx="45.1" cy="192.5" r="1.69" fill="#e8dcc0" fill-opacity="0.30"/><circle cx="133.9" cy="196.9" r="1.22" fill="#e8c8b0" fill-opacity="0.11"/><circle cx="199.2" cy="201.8" r="1.10" fill="#f0d8b8" fill-opacity="0.18"/><circle cx="279.3" cy="242.6" r="1.25" fill="#f0e0a0" fill-opacity="0.59"/><circle cx="15.2" cy="209.2" r="1.66" fill="#f0e0a0" fill-opacity="0.38"/><circle cx="24.1" cy="87.6" r="1.50" fill="#e8c8b0" fill-opacity="0.24"/><circle cx="150.5" cy="216.3" r="0.95" fill="#e8c8b0" fill-opacity="0.27"/><circle cx="85.6" cy="59.8" r="1.64" fill="#f0d8b8" fill-opacity="0.35"/><circle cx="259.4" cy="201.9" r="1.51" fill="#e8dcc0" fill-opacity="0.70"/><circle cx="302.4" cy="117.6" r="1.57" fill="#e8c8b0" fill-opacity="0.30"/><circle cx="7.6" cy="140.7" r="1.08" fill="#f0d8b8" fill-opacity="0.28"/><circle cx="163.5" cy="67.5" r="1.69" fill="#d0e0f0" fill-opacity="0.44"/><circle cx="114.4" cy="68.1" r="1.62" fill="#e8dcc0" fill-opacity="0.25"/><circle cx="85.5" cy="52.1" r="1.04" fill="#d8e8e0" fill-opacity="0.11"/><circle cx="176.4" cy="166.0" r="1.04" fill="#d8e8e0" fill-opacity="0.14"/><circle cx="120.4" cy="44.5" r="0.92" fill="#e8dcc0" fill-opacity="0.29"/><circle cx="130.3" cy="78.4" r="1.33" fill="#d8e8e0" fill-opacity="0.68"/><circle cx="6.7" cy="42.6" r="0.95" fill="#e8c8b0" fill-opacity="0.41"/><circle cx="319.0" cy="104.9" r="1.67" fill="#d0e0f0" fill-opacity="0.19"/><circle cx="252.1" cy="216.6" r="1.55" fill="#d0e0f0" fill-opacity="0.12"/><circle cx="306.1" cy="78.6" r="1.05" fill="#e8dcc0" fill-opacity="0.27"/><circle cx="47.8" cy="154.9" r="1.20" fill="#d8e8e0" fill-opacity="0.45"/><circle cx="199.1" cy="84.1" r="1.25" fill="#d0e0f0" fill-opacity="0.50"/><circle cx="163.1" cy="138.5" r="0.99" fill="#f0e0a0" fill-opacity="0.59"/><circle cx="240.4" cy="106.4" r="1.27" fill="#e8c8b0" fill-opacity="0.59"/><circle cx="74.3" cy="146.6" r="1.36" fill="#e8dcc0" fill-opacity="0.36"/><circle cx="170.6" cy="110.2" r="1.13" fill="#e8dcc0" fill-opacity="0.11"/><circle cx="300.9" cy="37.1" r="1.27" fill="#f0e0a0" fill-opacity="0.71"/><circle cx="201.2" cy="45.9" r="1.28" fill="#e8dcc0" fill-opacity="0.39"/><circle cx="280.2" cy="30.9" r="1.69" fill="#d8e8e0" fill-opacity="0.35"/><circle cx="60.4" cy="225.4" r="1.53" fill="#e8dcc0" fill-opacity="0.15"/><circle cx="257.6" cy="124.8" r="1.69" fill="#e8dcc0" fill-opacity="0.12"/><circle cx="229.9" cy="61.2" r="1.55" fill="#e8c8b0" fill-opacity="0.32"/><circle cx="4.6" cy="104.1" r="1.29" fill="#d8e8e0" fill-opacity="0.68"/><circle cx="23.8" cy="135.4" r="1.53" fill="#d8e8e0" fill-opacity="0.35"/><circle cx="23.3" cy="121.2" r="0.94" fill="#e8dcc0" fill-opacity="0.61"/><circle cx="257.4" cy="37.0" r="1.19" fill="#e8dcc0" fill-opacity="0.13"/><circle cx="300.0" cy="233.1" r="1.08" fill="#d0e0f0" fill-opacity="0.23"/><circle cx="58.7" cy="94.8" r="1.58" fill="#d0e0f0" fill-opacity="0.43"/><circle cx="23.2" cy="241.0" r="1.07" fill="#f0e0a0" fill-opacity="0.44"/><circle cx="313.4" cy="136.6" r="1.70" fill="#f0d8b8" fill-opacity="0.28"/><circle cx="226.1" cy="206.1" r="1.66" fill="#d8e8e0" fill-opacity="0.46"/><circle cx="224.4" cy="44.1" r="1.00" fill="#d0e0f0" fill-opacity="0.48"/><circle cx="13.4" cy="67.9" r="1.11" fill="#e8c8b0" fill-opacity="0.26"/><circle cx="115.5" cy="47.9" r="1.70" fill="#f0e0a0" fill-opacity="0.48"/><circle cx="231.8" cy="212.4" r="1.52" fill="#e8dcc0" fill-opacity="0.18"/><circle cx="203.9" cy="103.6" r="1.56" fill="#d0e0f0" fill-opacity="0.30"/><circle cx="43.2" cy="30.2" r="0.98" fill="#d0e0f0" fill-opacity="0.36"/><circle cx="75.9" cy="141.3" r="1.13" fill="#f0d8b8" fill-opacity="0.62"/><circle cx="307.5" cy="19.1" r="1.42" fill="#d0e0f0" fill-opacity="0.19"/><circle cx="125.2" cy="181.4" r="1.38" fill="#e8dcc0" fill-opacity="0.32"/><circle cx="118.6" cy="81.3" r="1.37" fill="#f0d8b8" fill-opacity="0.46"/><circle cx="94.6" cy="169.6" r="1.44" fill="#d0e0f0" fill-opacity="0.20"/><circle cx="121.1" cy="144.8" r="1.59" fill="#f0d8b8" fill-opacity="0.28"/><circle cx="110.3" cy="200.2" r="1.58" fill="#e8c8b0" fill-opacity="0.41"/><circle cx="212.4" cy="110.6" r="1.07" fill="#e8dcc0" fill-opacity="0.55"/><circle cx="121.0" cy="176.4" r="1.44" fill="#e8dcc0" fill-opacity="0.26"/><circle cx="215.8" cy="38.0" r="0.96" fill="#e8c8b0" fill-opacity="0.17"/><circle cx="102.1" cy="163.7" r="1.38" fill="#e8dcc0" fill-opacity="0.69"/><circle cx="320.6" cy="96.4" r="1.56" fill="#f0e0a0" fill-opacity="0.45"/><circle cx="35.5" cy="14.0" r="1.70" fill="#f0e0a0" fill-opacity="0.46"/><circle cx="301.1" cy="126.4" r="1.37" fill="#d8e8e0" fill-opacity="0.35"/><circle cx="166.5" cy="23.4" r="1.54" fill="#f0e0a0" fill-opacity="0.09"/><circle cx="224.8" cy="191.9" r="1.62" fill="#f0e0a0" fill-opacity="0.46"/><circle cx="153.0" cy="215.7" r="1.25" fill="#f0d8b8" fill-opacity="0.16"/><circle cx="277.7" cy="230.5" r="1.62" fill="#f0d8b8" fill-opacity="0.10"/><circle cx="133.4" cy="136.9" r="1.68" fill="#e8dcc0" fill-opacity="0.54"/><circle cx="97.4" cy="123.8" r="1.00" fill="#d8e8e0" fill-opacity="0.40"/><circle cx="214.0" cy="124.4" r="1.15" fill="#d8e8e0" fill-opacity="0.26"/><circle cx="79.7" cy="101.0" r="0.94" fill="#d0e0f0" fill-opacity="0.19"/><circle cx="55.0" cy="25.5" r="1.01" fill="#e8c8b0" fill-opacity="0.64"/><circle cx="50.0" cy="236.8" r="1.32" fill="#e8c8b0" fill-opacity="0.30"/><circle cx="311.2" cy="173.9" r="1.00" fill="#d8e8e0" fill-opacity="0.58"/><circle cx="49.7" cy="199.7" r="1.49" fill="#d8e8e0" fill-opacity="0.50"/><circle cx="95.0" cy="150.9" r="1.22" fill="#e8c8b0" fill-opacity="0.35"/><circle cx="207.7" cy="206.8" r="0.94" fill="#e8dcc0" fill-opacity="0.30"/><circle cx="69.3" cy="131.0" r="1.43" fill="#d0e0f0" fill-opacity="0.30"/><circle cx="65.8" cy="242.3" r="1.35" fill="#e8c8b0" fill-opacity="0.15"/><circle cx="299.4" cy="23.7" r="1.40" fill="#e8c8b0" fill-opacity="0.22"/><circle cx="83.4" cy="89.8" r="1.24" fill="#f0d8b8" fill-opacity="0.34"/><circle cx="209.5" cy="81.5" r="0.99" fill="#e8c8b0" fill-opacity="0.24"/><circle cx="19.9" cy="128.8" r="1.34" fill="#d8e8e0" fill-opacity="0.29"/><circle cx="218.0" cy="174.0" r="0.93" fill="#d8e8e0" fill-opacity="0.27"/><circle cx="167.9" cy="128.6" r="1.49" fill="#e8c8b0" fill-opacity="0.28"/><circle cx="312.1" cy="1.7" r="1.37" fill="#f0d8b8" fill-opacity="0.68"/><circle cx="311.2" cy="169.3" r="1.57" fill="#e8c8b0" fill-opacity="0.19"/><circle cx="18.1" cy="44.8" r="0.99" fill="#f0d8b8" fill-opacity="0.53"/><circle cx="17.1" cy="22.7" r="1.10" fill="#d0e0f0" fill-opacity="0.22"/><circle cx="209.0" cy="91.1" r="0.97" fill="#e8dcc0" fill-opacity="0.40"/><circle cx="27.6" cy="240.1" r="1.57" fill="#f0d8b8" fill-opacity="0.25"/><circle cx="48.2" cy="38.0" r="1.13" fill="#d0e0f0" fill-opacity="0.22"/><circle cx="15.5" cy="152.4" r="1.34" fill="#f0e0a0" fill-opacity="0.66"/><circle cx="231.8" cy="150.5" r="1.45" fill="#e8c8b0" fill-opacity="0.19"/><circle cx="1.8" cy="179.8" r="1.23" fill="#e8dcc0" fill-opacity="0.47"/><circle cx="55.7" cy="20.4" r="1.45" fill="#d0e0f0" fill-opacity="0.15"/><circle cx="218.7" cy="195.5" r="1.26" fill="#f0e0a0" fill-opacity="0.63"/><circle cx="23.1" cy="28.3" r="1.57" fill="#e8c8b0" fill-opacity="0.46"/><circle cx="230.0" cy="171.5" r="1.22" fill="#f0e0a0" fill-opacity="0.48"/><circle cx="180.9" cy="225.0" r="1.07" fill="#e8c8b0" fill-opacity="0.30"/><circle cx="45.2" cy="231.2" r="1.02" fill="#d0e0f0" fill-opacity="0.22"/><circle cx="10.1" cy="105.4" r="1.20" fill="#d0e0f0" fill-opacity="0.47"/><circle cx="159.4" cy="168.3" r="1.21" fill="#e8dcc0" fill-opacity="0.54"/><circle cx="177.5" cy="208.6" r="1.52" fill="#e8dcc0" fill-opacity="0.25"/><circle cx="111.8" cy="40.0" r="1.18" fill="#e8c8b0" fill-opacity="0.41"/><circle cx="220.8" cy="110.5" r="1.37" fill="#e8c8b0" fill-opacity="0.33"/><circle cx="47.8" cy="171.7" r="1.22" fill="#d0e0f0" fill-opacity="0.13"/><circle cx="75.4" cy="63.7" r="1.48" fill="#f0d8b8" fill-opacity="0.40"/><circle cx="297.7" cy="195.9" r="1.10" fill="#d8e8e0" fill-opacity="0.20"/><circle cx="139.8" cy="150.7" r="1.35" fill="#e8c8b0" fill-opacity="0.70"/><circle cx="147.2" cy="118.8" r="1.09" fill="#e8dcc0" fill-opacity="0.53"/><circle cx="219.5" cy="122.2" r="1.02" fill="#f0d8b8" fill-opacity="0.71"/><circle cx="183.5" cy="134.6" r="1.17" fill="#f0d8b8" fill-opacity="0.16"/><circle cx="260.3" cy="23.8" r="1.53" fill="#d8e8e0" fill-opacity="0.19"/><circle cx="278.2" cy="180.0" r="1.18" fill="#d8e8e0" fill-opacity="0.16"/><circle cx="188.1" cy="219.4" r="1.64" fill="#f0d8b8" fill-opacity="0.48"/><circle cx="35.2" cy="192.2" r="1.55" fill="#f0e0a0" fill-opacity="0.42"/><circle cx="317.2" cy="26.9" r="1.19" fill="#f0d8b8" fill-opacity="0.17"/><circle cx="215.7" cy="69.9" r="1.35" fill="#e8dcc0" fill-opacity="0.21"/><circle cx="88.1" cy="69.6" r="1.12" fill="#d0e0f0" fill-opacity="0.36"/><circle cx="51.7" cy="209.7" r="1.58" fill="#e8c8b0" fill-opacity="0.43"/><circle cx="258.5" cy="39.7" r="1.50" fill="#e8c8b0" fill-opacity="0.49"/><circle cx="250.4" cy="63.4" r="0.94" fill="#f0d8b8" fill-opacity="0.67"/><circle cx="210.5" cy="132.4" r="1.28" fill="#f0d8b8" fill-opacity="0.48"/><circle cx="235.5" cy="230.2" r="1.30" fill="#f0d8b8" fill-opacity="0.40"/><circle cx="286.0" cy="18.4" r="1.34" fill="#f0e0a0" fill-opacity="0.40"/><circle cx="239.9" cy="73.8" r="0.90" fill="#e8dcc0" fill-opacity="0.66"/><circle cx="63.1" cy="89.7" r="1.18" fill="#f0e0a0" fill-opacity="0.15"/><circle cx="214.7" cy="34.3" r="1.23" fill="#f0e0a0" fill-opacity="0.15"/><circle cx="314.7" cy="237.8" r="1.64" fill="#d0e0f0" fill-opacity="0.38"/><circle cx="170.2" cy="45.0" r="1.32" fill="#d0e0f0" fill-opacity="0.26"/><circle cx="298.9" cy="214.6" r="0.98" fill="#d8e8e0" fill-opacity="0.15"/><circle cx="25.4" cy="118.8" r="1.35" fill="#e8c8b0" fill-opacity="0.69"/><circle cx="28.8" cy="219.5" r="1.10" fill="#f0d8b8" fill-opacity="0.19"/><circle cx="303.3" cy="238.2" r="1.66" fill="#d0e0f0" fill-opacity="0.66"/><circle cx="302.0" cy="4.9" r="1.29" fill="#f0e0a0" fill-opacity="0.41"/><circle cx="184.6" cy="219.2" r="1.15" fill="#e8c8b0" fill-opacity="0.17"/><circle cx="50.8" cy="222.8" r="0.99" fill="#f0d8b8" fill-opacity="0.23"/><circle cx="309.2" cy="5.9" r="0.93" fill="#f0e0a0" fill-opacity="0.58"/><circle cx="195.3" cy="206.6" r="1.51" fill="#e8dcc0" fill-opacity="0.47"/><circle cx="0.2" cy="16.6" r="1.54" fill="#d8e8e0" fill-opacity="0.70"/><circle cx="131.7" cy="81.9" r="1.18" fill="#d8e8e0" fill-opacity="0.10"/><circle cx="84.7" cy="142.9" r="1.32" fill="#f0e0a0" fill-opacity="0.25"/><circle cx="113.7" cy="159.0" r="1.64" fill="#d8e8e0" fill-opacity="0.30"/><circle cx="48.4" cy="61.8" r="1.28" fill="#f0d8b8" fill-opacity="0.55"/><circle cx="59.7" cy="165.5" r="1.39" fill="#e8c8b0" fill-opacity="0.42"/><circle cx="82.3" cy="214.0" r="1.05" fill="#f0d8b8" fill-opacity="0.20"/><circle cx="164.6" cy="180.4" r="1.06" fill="#d8e8e0" fill-opacity="0.10"/><circle cx="174.4" cy="19.2" r="1.51" fill="#d8e8e0" fill-opacity="0.20"/><circle cx="14.5" cy="135.9" r="1.01" fill="#e8dcc0" fill-opacity="0.47"/><circle cx="294.3" cy="241.7" r="1.21" fill="#f0e0a0" fill-opacity="0.15"/><circle cx="252.7" cy="82.5" r="1.53" fill="#f0d8b8" fill-opacity="0.28"/><circle cx="181.6" cy="230.3" r="0.95" fill="#e8dcc0" fill-opacity="0.70"/><circle cx="16.8" cy="8.0" r="1.66" fill="#d8e8e0" fill-opacity="0.31"/><circle cx="46.3" cy="50.2" r="1.60" fill="#f0d8b8" fill-opacity="0.68"/><circle cx="110.4" cy="227.1" r="1.01" fill="#e8dcc0" fill-opacity="0.50"/><circle cx="62.2" cy="33.1" r="1.44" fill="#f0e0a0" fill-opacity="0.62"/><circle cx="286.1" cy="163.1" r="1.19" fill="#f0d8b8" fill-opacity="0.51"/><circle cx="47.3" cy="212.5" r="1.69" fill="#f0e0a0" fill-opacity="0.51"/><circle cx="15.9" cy="74.9" r="1.05" fill="#e8c8b0" fill-opacity="0.14"/><circle cx="168.6" cy="199.1" r="1.25" fill="#f0d8b8" fill-opacity="0.56"/><circle cx="305.9" cy="19.9" r="1.08" fill="#f0d8b8" fill-opacity="0.12"/><circle cx="315.1" cy="227.9" r="1.44" fill="#f0d8b8" fill-opacity="0.17"/><circle cx="206.1" cy="25.6" r="1.29" fill="#e8c8b0" fill-opacity="0.63"/><circle cx="148.5" cy="147.2" r="1.58" fill="#d8e8e0" fill-opacity="0.33"/><circle cx="47.6" cy="114.5" r="1.44" fill="#e8c8b0" fill-opacity="0.32"/><circle cx="129.4" cy="12.7" r="1.03" fill="#f0e0a0" fill-opacity="0.17"/><circle cx="265.7" cy="234.5" r="0.92" fill="#d0e0f0" fill-opacity="0.31"/><circle cx="197.7" cy="15.4" r="0.92" fill="#d8e8e0" fill-opacity="0.26"/><circle cx="98.3" cy="10.1" r="1.11" fill="#f0d8b8" fill-opacity="0.43"/><circle cx="222.1" cy="61.2" r="1.49" fill="#d8e8e0" fill-opacity="0.16"/><circle cx="285.5" cy="141.8" r="1.23" fill="#d0e0f0" fill-opacity="0.38"/><circle cx="82.8" cy="231.7" r="1.29" fill="#e8c8b0" fill-opacity="0.47"/><circle cx="275.5" cy="215.2" r="1.03" fill="#f0d8b8" fill-opacity="0.36"/><circle cx="247.2" cy="227.9" r="1.15" fill="#d0e0f0" fill-opacity="0.39"/><circle cx="50.9" cy="231.2" r="1.13" fill="#f0e0a0" fill-opacity="0.13"/><circle cx="1.0" cy="117.0" r="0.99" fill="#e8c8b0" fill-opacity="0.52"/><circle cx="210.1" cy="167.3" r="1.43" fill="#d0e0f0" fill-opacity="0.29"/><circle cx="185.5" cy="154.2" r="1.27" fill="#d0e0f0" fill-opacity="0.13"/><circle cx="206.5" cy="15.1" r="1.01" fill="#e8c8b0" fill-opacity="0.10"/><circle cx="143.0" cy="20.6" r="1.54" fill="#d0e0f0" fill-opacity="0.20"/><circle cx="257.7" cy="62.1" r="1.62" fill="#d0e0f0" fill-opacity="0.36"/><circle cx="114.0" cy="14.2" r="0.96" fill="#d8e8e0" fill-opacity="0.61"/><circle cx="93.9" cy="205.2" r="1.30" fill="#d8e8e0" fill-opacity="0.26"/><circle cx="208.9" cy="168.3" r="1.26" fill="#f0e0a0" fill-opacity="0.23"/><circle cx="296.2" cy="167.2" r="1.54" fill="#f0d8b8" fill-opacity="0.50"/><circle cx="258.8" cy="43.0" r="1.55" fill="#d8e8e0" fill-opacity="0.24"/><circle cx="14.3" cy="197.3" r="1.66" fill="#d0e0f0" fill-opacity="0.46"/><circle cx="255.7" cy="149.0" r="1.63" fill="#f0e0a0" fill-opacity="0.66"/><circle cx="279.5" cy="238.2" r="1.03" fill="#f0d8b8" fill-opacity="0.21"/><circle cx="281.4" cy="75.8" r="1.05" fill="#f0d8b8" fill-opacity="0.48"/><circle cx="318.2" cy="152.0" r="1.00" fill="#e8dcc0" fill-opacity="0.51"/><circle cx="140.9" cy="99.4" r="1.22" fill="#e8dcc0" fill-opacity="0.53"/><circle cx="183.8" cy="230.2" r="1.41" fill="#d0e0f0" fill-opacity="0.35"/><circle cx="229.7" cy="9.5" r="1.61" fill="#d8e8e0" fill-opacity="0.35"/><circle cx="74.6" cy="150.9" r="0.99" fill="#d0e0f0" fill-opacity="0.16"/><circle cx="102.1" cy="66.6" r="1.05" fill="#f0e0a0" fill-opacity="0.45"/><circle cx="249.2" cy="25.2" r="1.16" fill="#e8dcc0" fill-opacity="0.11"/><circle cx="93.8" cy="232.3" r="1.40" fill="#e8dcc0" fill-opacity="0.69"/><circle cx="107.6" cy="68.1" r="1.32" fill="#e8dcc0" fill-opacity="0.35"/><circle cx="31.2" cy="172.0" r="0.94" fill="#e8c8b0" fill-opacity="0.53"/><circle cx="80.7" cy="48.6" r="1.36" fill="#f0d8b8" fill-opacity="0.20"/><circle cx="128.7" cy="82.9" r="1.67" fill="#f0e0a0" fill-opacity="0.23"/><circle cx="171.7" cy="52.6" r="1.64" fill="#e8dcc0" fill-opacity="0.55"/><circle cx="39.4" cy="105.6" r="1.45" fill="#e8c8b0" fill-opacity="0.53"/><circle cx="261.2" cy="225.6" r="1.30" fill="#e8c8b0" fill-opacity="0.67"/><circle cx="174.8" cy="243.3" r="1.32" fill="#e8dcc0" fill-opacity="0.18"/><circle cx="198.7" cy="44.8" r="1.68" fill="#e8c8b0" fill-opacity="0.55"/><circle cx="234.8" cy="77.9" r="1.51" fill="#f0e0a0" fill-opacity="0.45"/><circle cx="18.7" cy="14.8" r="1.68" fill="#d8e8e0" fill-opacity="0.68"/><circle cx="308.4" cy="216.8" r="0.94" fill="#f0d8b8" fill-opacity="0.12"/><circle cx="150.1" cy="150.1" r="1.59" fill="#d0e0f0" fill-opacity="0.71"/><circle cx="185.1" cy="181.6" r="1.22" fill="#f0e0a0" fill-opacity="0.45"/><circle cx="278.9" cy="99.8" r="0.97" fill="#d8e8e0" fill-opacity="0.40"/><circle cx="17.7" cy="115.6" r="0.91" fill="#d0e0f0" fill-opacity="0.12"/><circle cx="235.9" cy="151.1" r="1.07" fill="#f0e0a0" fill-opacity="0.20"/><circle cx="157.2" cy="143.4" r="1.15" fill="#e8dcc0" fill-opacity="0.70"/><circle cx="108.4" cy="5.4" r="1.57" fill="#e8c8b0" fill-opacity="0.50"/><circle cx="132.6" cy="97.3" r="1.61" fill="#e8dcc0" fill-opacity="0.21"/><circle cx="228.7" cy="109.4" r="1.19" fill="#d0e0f0" fill-opacity="0.31"/><circle cx="140.6" cy="51.5" r="0.92" fill="#e8c8b0" fill-opacity="0.62"/><circle cx="249.6" cy="111.1" r="1.28" fill="#d0e0f0" fill-opacity="0.62"/><circle cx="212.9" cy="165.4" r="1.30" fill="#d0e0f0" fill-opacity="0.56"/><circle cx="286.2" cy="18.3" r="1.08" fill="#e8c8b0" fill-opacity="0.20"/><circle cx="306.8" cy="160.0" r="1.44" fill="#f0e0a0" fill-opacity="0.31"/><circle cx="96.4" cy="146.6" r="0.97" fill="#f0e0a0" fill-opacity="0.41"/><circle cx="110.4" cy="173.6" r="0.91" fill="#d0e0f0" fill-opacity="0.30"/><circle cx="83.8" cy="149.7" r="1.08" fill="#d8e8e0" fill-opacity="0.29"/><circle cx="241.4" cy="105.8" r="1.30" fill="#d8e8e0" fill-opacity="0.11"/><circle cx="270.5" cy="95.5" r="1.37" fill="#f0d8b8" fill-opacity="0.50"/><circle cx="241.2" cy="141.3" r="1.10" fill="#e8c8b0" fill-opacity="0.49"/><circle cx="131.7" cy="38.3" r="0.92" fill="#e8c8b0" fill-opacity="0.53"/><circle cx="104.9" cy="177.3" r="1.66" fill="#e8c8b0" fill-opacity="0.22"/><circle cx="110.9" cy="232.6" r="1.16" fill="#d0e0f0" fill-opacity="0.65"/><circle cx="214.2" cy="70.6" r="1.54" fill="#d8e8e0" fill-opacity="0.30"/><circle cx="31.7" cy="11.8" r="1.27" fill="#d0e0f0" fill-opacity="0.39"/><circle cx="183.9" cy="232.6" r="1.18" fill="#e8dcc0" fill-opacity="0.53"/><circle cx="2.9" cy="133.2" r="1.03" fill="#d8e8e0" fill-opacity="0.27"/><circle cx="122.8" cy="66.8" r="1.19" fill="#e8dcc0" fill-opacity="0.38"/><circle cx="174.3" cy="97.1" r="1.22" fill="#f0e0a0" fill-opacity="0.55"/><circle cx="281.9" cy="227.8" r="1.10" fill="#e8dcc0" fill-opacity="0.17"/><circle cx="294.1" cy="155.4" r="0.92" fill="#e8dcc0" fill-opacity="0.18"/><circle cx="158.0" cy="169.7" r="0.92" fill="#f0d8b8" fill-opacity="0.57"/><circle cx="68.3" cy="171.6" r="1.46" fill="#d8e8e0" fill-opacity="0.26"/><circle cx="273.2" cy="171.1" r="0.92" fill="#e8c8b0" fill-opacity="0.65"/><circle cx="90.9" cy="123.3" r="1.19" fill="#e8c8b0" fill-opacity="0.39"/><circle cx="200.2" cy="36.7" r="1.67" fill="#d0e0f0" fill-opacity="0.26"/><circle cx="286.4" cy="42.9" r="1.05" fill="#d8e8e0" fill-opacity="0.41"/><circle cx="152.8" cy="147.5" r="1.18" fill="#f0d8b8" fill-opacity="0.54"/><circle cx="281.7" cy="55.3" r="1.19" fill="#f0e0a0" fill-opacity="0.20"/><circle cx="216.0" cy="207.4" r="1.50" fill="#f0e0a0" fill-opacity="0.54"/><circle cx="175.5" cy="142.3" r="0.98" fill="#f0d8b8" fill-opacity="0.11"/><circle cx="246.0" cy="120.0" r="1.33" fill="#e8dcc0" fill-opacity="0.28"/><circle cx="134.9" cy="221.8" r="1.39" fill="#e8dcc0" fill-opacity="0.39"/><circle cx="215.4" cy="169.7" r="1.16" fill="#f0d8b8" fill-opacity="0.33"/><circle cx="71.4" cy="5.0" r="1.10" fill="#f0d8b8" fill-opacity="0.09"/><circle cx="96.8" cy="3.7" r="1.19" fill="#d8e8e0" fill-opacity="0.30"/><circle cx="86.8" cy="27.6" r="1.58" fill="#e8c8b0" fill-opacity="0.33"/><circle cx="61.3" cy="133.0" r="1.60" fill="#f0e0a0" fill-opacity="0.62"/><circle cx="143.5" cy="175.2" r="1.10" fill="#f0d8b8" fill-opacity="0.57"/><circle cx="162.8" cy="114.3" r="1.32" fill="#d8e8e0" fill-opacity="0.37"/><circle cx="92.1" cy="72.3" r="1.21" fill="#e8dcc0" fill-opacity="0.45"/><circle cx="200.4" cy="69.7" r="1.05" fill="#e8c8b0" fill-opacity="0.61"/><circle cx="220.8" cy="168.8" r="1.50" fill="#d0e0f0" fill-opacity="0.33"/><circle cx="161.9" cy="55.3" r="1.36" fill="#d8e8e0" fill-opacity="0.46"/><circle cx="24.0" cy="60.2" r="1.68" fill="#e8c8b0" fill-opacity="0.38"/><circle cx="179.6" cy="9.5" r="1.13" fill="#e8dcc0" fill-opacity="0.27"/><circle cx="171.8" cy="27.5" r="1.59" fill="#f0e0a0" fill-opacity="0.56"/><circle cx="206.6" cy="27.0" r="1.35" fill="#d0e0f0" fill-opacity="0.67"/><circle cx="191.1" cy="133.4" r="0.94" fill="#e8dcc0" fill-opacity="0.49"/><circle cx="149.9" cy="219.7" r="1.44" fill="#d0e0f0" fill-opacity="0.19"/><circle cx="210.7" cy="198.2" r="1.69" fill="#e8c8b0" fill-opacity="0.65"/><circle cx="5.8" cy="53.7" r="1.43" fill="#e8dcc0" fill-opacity="0.19"/><circle cx="78.4" cy="75.9" r="1.04" fill="#e8c8b0" fill-opacity="0.63"/><circle cx="32.7" cy="155.4" r="1.11" fill="#f0e0a0" fill-opacity="0.57"/><circle cx="72.3" cy="40.4" r="1.18" fill="#f0e0a0" fill-opacity="0.51"/><circle cx="45.4" cy="49.2" r="0.92" fill="#d0e0f0" fill-opacity="0.16"/><circle cx="208.3" cy="240.2" r="1.54" fill="#f0e0a0" fill-opacity="0.64"/><circle cx="59.6" cy="155.0" r="1.39" fill="#e8dcc0" fill-opacity="0.66"/><circle cx="279.7" cy="74.2" r="1.60" fill="#d0e0f0" fill-opacity="0.46"/><circle cx="230.9" cy="45.2" r="1.30" fill="#d8e8e0" fill-opacity="0.69"/><circle cx="190.9" cy="66.0" r="1.06" fill="#f0d8b8" fill-opacity="0.12"/><circle cx="60.2" cy="57.9" r="1.13" fill="#f0e0a0" fill-opacity="0.59"/><circle cx="38.8" cy="154.6" r="1.42" fill="#f0e0a0" fill-opacity="0.48"/><circle cx="103.3" cy="1.7" r="1.23" fill="#e8dcc0" fill-opacity="0.41"/><circle cx="171.5" cy="11.9" r="0.92" fill="#f0d8b8" fill-opacity="0.70"/><circle cx="180.1" cy="95.0" r="1.65" fill="#e8c8b0" fill-opacity="0.45"/><circle cx="58.3" cy="122.1" r="1.30" fill="#e8c8b0" fill-opacity="0.54"/><circle cx="202.4" cy="109.4" r="1.29" fill="#e8c8b0" fill-opacity="0.11"/><circle cx="279.3" cy="8.2" r="1.05" fill="#d0e0f0" fill-opacity="0.33"/><circle cx="200.1" cy="182.0" r="1.51" fill="#e8dcc0" fill-opacity="0.50"/><circle cx="113.3" cy="16.4" r="1.12" fill="#e8dcc0" fill-opacity="0.43"/><circle cx="78.0" cy="157.9" r="1.02" fill="#d8e8e0" fill-opacity="0.50"/><circle cx="273.4" cy="146.8" r="1.63" fill="#e8dcc0" fill-opacity="0.10"/><circle cx="74.3" cy="43.9" r="1.26" fill="#e8dcc0" fill-opacity="0.31"/><circle cx="206.8" cy="41.0" r="1.03" fill="#d0e0f0" fill-opacity="0.38"/><circle cx="132.4" cy="92.3" r="1.50" fill="#e8dcc0" fill-opacity="0.13"/><circle cx="153.2" cy="9.7" r="1.39" fill="#f0d8b8" fill-opacity="0.18"/><circle cx="302.1" cy="103.2" r="1.53" fill="#f0d8b8" fill-opacity="0.60"/><circle cx="175.0" cy="229.3" r="1.01" fill="#f0e0a0" fill-opacity="0.28"/><circle cx="284.7" cy="225.6" r="0.99" fill="#f0d8b8" fill-opacity="0.46"/><circle cx="91.9" cy="71.4" r="1.50" fill="#f0e0a0" fill-opacity="0.55"/><circle cx="236.9" cy="156.9" r="1.40" fill="#f0d8b8" fill-opacity="0.61"/><circle cx="247.3" cy="27.5" r="1.68" fill="#f0e0a0" fill-opacity="0.52"/><circle cx="117.0" cy="147.7" r="1.67" fill="#e8c8b0" fill-opacity="0.63"/><circle cx="287.3" cy="67.7" r="1.09" fill="#f0d8b8" fill-opacity="0.34"/><circle cx="310.2" cy="35.1" r="1.22" fill="#d8e8e0" fill-opacity="0.40"/><circle cx="251.0" cy="159.9" r="1.25" fill="#d8e8e0" fill-opacity="0.40"/><circle cx="104.3" cy="148.1" r="1.05" fill="#e8dcc0" fill-opacity="0.32"/><circle cx="84.8" cy="89.2" r="1.46" fill="#f0d8b8" fill-opacity="0.18"/><circle cx="64.2" cy="135.8" r="1.17" fill="#e8dcc0" fill-opacity="0.09"/><circle cx="222.1" cy="153.0" r="1.41" fill="#e8c8b0" fill-opacity="0.33"/><circle cx="206.0" cy="15.9" r="1.47" fill="#d0e0f0" fill-opacity="0.20"/><circle cx="57.5" cy="113.0" r="1.28" fill="#f0d8b8" fill-opacity="0.47"/><circle cx="102.6" cy="97.0" r="1.15" fill="#d0e0f0" fill-opacity="0.52"/><circle cx="173.9" cy="151.0" r="1.63" fill="#d8e8e0" fill-opacity="0.46"/><circle cx="40.6" cy="146.2" r="1.45" fill="#d8e8e0" fill-opacity="0.30"/><circle cx="176.2" cy="47.5" r="1.44" fill="#f0e0a0" fill-opacity="0.27"/><circle cx="18.8" cy="24.0" r="0.93" fill="#f0d8b8" fill-opacity="0.33"/><circle cx="220.9" cy="133.7" r="1.58" fill="#e8dcc0" fill-opacity="0.28"/><circle cx="18.5" cy="158.1" r="1.28" fill="#e8c8b0" fill-opacity="0.13"/><circle cx="52.2" cy="15.6" r="1.33" fill="#e8c8b0" fill-opacity="0.15"/><circle cx="226.3" cy="209.9" r="1.63" fill="#f0e0a0" fill-opacity="0.28"/><circle cx="235.3" cy="215.7" r="1.34" fill="#e8dcc0" fill-opacity="0.41"/><circle cx="218.7" cy="237.9" r="1.13" fill="#f0e0a0" fill-opacity="0.54"/><circle cx="137.0" cy="51.6" r="1.25" fill="#d0e0f0" fill-opacity="0.60"/><circle cx="194.3" cy="124.3" r="1.31" fill="#d8e8e0" fill-opacity="0.11"/><circle cx="116.1" cy="89.1" r="0.98" fill="#f0e0a0" fill-opacity="0.68"/><circle cx="93.7" cy="111.2" r="1.30" fill="#d0e0f0" fill-opacity="0.56"/><circle cx="310.3" cy="167.3" r="1.64" fill="#f0d8b8" fill-opacity="0.48"/><circle cx="26.1" cy="28.7" r="1.46" fill="#f0e0a0" fill-opacity="0.38"/><circle cx="307.9" cy="108.4" r="1.36" fill="#d8e8e0" fill-opacity="0.13"/><circle cx="246.6" cy="108.5" r="1.14" fill="#d8e8e0" fill-opacity="0.27"/><circle cx="235.3" cy="0.8" r="1.04" fill="#d8e8e0" fill-opacity="0.15"/><circle cx="43.9" cy="217.3" r="1.50" fill="#f0e0a0" fill-opacity="0.12"/><circle cx="50.0" cy="81.2" r="1.05" fill="#f0d8b8" fill-opacity="0.70"/><circle cx="302.2" cy="81.8" r="1.02" fill="#e8dcc0" fill-opacity="0.55"/><circle cx="178.6" cy="238.1" r="1.17" fill="#d8e8e0" fill-opacity="0.29"/><circle cx="267.6" cy="222.3" r="1.04" fill="#f0d8b8" fill-opacity="0.35"/><circle cx="296.1" cy="50.9" r="1.41" fill="#d8e8e0" fill-opacity="0.12"/><circle cx="306.4" cy="150.8" r="1.16" fill="#e8dcc0" fill-opacity="0.51"/><circle cx="263.7" cy="58.2" r="1.58" fill="#e8c8b0" fill-opacity="0.36"/><circle cx="279.4" cy="60.7" r="1.34" fill="#d8e8e0" fill-opacity="0.24"/><circle cx="192.2" cy="64.1" r="1.09" fill="#f0e0a0" fill-opacity="0.47"/><circle cx="302.6" cy="54.6" r="0.95" fill="#d8e8e0" fill-opacity="0.36"/><circle cx="54.8" cy="201.6" r="1.30" fill="#f0d8b8" fill-opacity="0.45"/><circle cx="64.1" cy="18.8" r="1.08" fill="#d8e8e0" fill-opacity="0.42"/><circle cx="41.5" cy="171.5" r="1.38" fill="#e8c8b0" fill-opacity="0.43"/><circle cx="256.2" cy="190.9" r="1.25" fill="#f0d8b8" fill-opacity="0.20"/><circle cx="294.3" cy="190.8" r="1.00" fill="#d0e0f0" fill-opacity="0.21"/><circle cx="113.7" cy="206.6" r="1.54" fill="#f0d8b8" fill-opacity="0.47"/><circle cx="124.7" cy="156.8" r="1.10" fill="#e8dcc0" fill-opacity="0.24"/><circle cx="313.1" cy="42.4" r="1.63" fill="#f0e0a0" fill-opacity="0.41"/><circle cx="37.8" cy="34.7" r="1.41" fill="#e8dcc0" fill-opacity="0.63"/><circle cx="172.5" cy="189.7" r="1.29" fill="#e8dcc0" fill-opacity="0.13"/><circle cx="114.0" cy="115.5" r="1.06" fill="#d0e0f0" fill-opacity="0.23"/><circle cx="260.3" cy="74.5" r="1.28" fill="#e8c8b0" fill-opacity="0.19"/><circle cx="259.2" cy="79.6" r="1.05" fill="#e8dcc0" fill-opacity="0.14"/><circle cx="26.7" cy="182.7" r="1.34" fill="#d0e0f0" fill-opacity="0.20"/><circle cx="193.4" cy="77.9" r="0.93" fill="#f0d8b8" fill-opacity="0.30"/><circle cx="83.3" cy="32.5" r="1.40" fill="#f0e0a0" fill-opacity="0.53"/><circle cx="185.5" cy="30.7" r="1.55" fill="#e8c8b0" fill-opacity="0.13"/><circle cx="212.0" cy="123.0" r="1.04" fill="#f0d8b8" fill-opacity="0.43"/><circle cx="320.4" cy="141.0" r="1.62" fill="#d0e0f0" fill-opacity="0.68"/><circle cx="208.6" cy="115.4" r="1.52" fill="#d8e8e0" fill-opacity="0.47"/><circle cx="167.7" cy="212.6" r="1.54" fill="#f0e0a0" fill-opacity="0.52"/><circle cx="196.4" cy="200.4" r="1.51" fill="#d8e8e0" fill-opacity="0.32"/><circle cx="240.8" cy="210.2" r="1.67" fill="#e8dcc0" fill-opacity="0.54"/><circle cx="141.8" cy="113.5" r="1.35" fill="#e8c8b0" fill-opacity="0.22"/><circle cx="107.1" cy="206.3" r="1.54" fill="#e8c8b0" fill-opacity="0.09"/><circle cx="122.2" cy="220.8" r="1.07" fill="#f0e0a0" fill-opacity="0.26"/><circle cx="248.3" cy="144.2" r="1.43" fill="#e8c8b0" fill-opacity="0.30"/><circle cx="211.3" cy="104.4" r="0.93" fill="#d0e0f0" fill-opacity="0.11"/><circle cx="34.5" cy="33.6" r="1.06" fill="#e8c8b0" fill-opacity="0.37"/><circle cx="158.2" cy="234.5" r="1.07" fill="#f0e0a0" fill-opacity="0.45"/><circle cx="51.3" cy="201.5" r="1.68" fill="#d0e0f0" fill-opacity="0.17"/><circle cx="302.7" cy="50.9" r="1.00" fill="#d8e8e0" fill-opacity="0.16"/><circle cx="294.3" cy="22.2" r="0.90" fill="#f0d8b8" fill-opacity="0.59"/><circle cx="29.3" cy="69.5" r="1.58" fill="#f0d8b8" fill-opacity="0.38"/><circle cx="141.2" cy="111.5" r="1.27" fill="#d0e0f0" fill-opacity="0.27"/><circle cx="163.3" cy="232.1" r="1.60" fill="#f0e0a0" fill-opacity="0.69"/><circle cx="46.8" cy="11.0" r="1.21" fill="#e8dcc0" fill-opacity="0.27"/><circle cx="177.7" cy="218.4" r="1.43" fill="#f0d8b8" fill-opacity="0.19"/><circle cx="9.8" cy="77.3" r="1.19" fill="#d8e8e0" fill-opacity="0.24"/><circle cx="19.0" cy="167.5" r="1.39" fill="#d8e8e0" fill-opacity="0.25"/><circle cx="34.0" cy="3.7" r="1.51" fill="#f0e0a0" fill-opacity="0.20"/><circle cx="264.1" cy="230.0" r="1.06" fill="#d0e0f0" fill-opacity="0.28"/><circle cx="248.4" cy="179.8" r="1.14" fill="#f0d8b8" fill-opacity="0.32"/><circle cx="28.8" cy="24.5" r="1.67" fill="#e8dcc0" fill-opacity="0.66"/><circle cx="297.2" cy="146.6" r="1.67" fill="#d8e8e0" fill-opacity="0.67"/><circle cx="275.3" cy="80.3" r="1.64" fill="#d0e0f0" fill-opacity="0.19"/><circle cx="97.8" cy="107.9" r="1.57" fill="#d8e8e0" fill-opacity="0.47"/><circle cx="28.3" cy="101.4" r="1.55" fill="#f0d8b8" fill-opacity="0.10"/><circle cx="92.3" cy="71.4" r="1.24" fill="#e8c8b0" fill-opacity="0.67"/><circle cx="276.5" cy="101.4" r="1.23" fill="#e8c8b0" fill-opacity="0.29"/><circle cx="110.0" cy="55.5" r="0.95" fill="#d0e0f0" fill-opacity="0.11"/><circle cx="87.3" cy="71.2" r="1.64" fill="#f0d8b8" fill-opacity="0.38"/><circle cx="5.4" cy="164.5" r="1.17" fill="#d0e0f0" fill-opacity="0.35"/><circle cx="30.0" cy="151.9" r="0.91" fill="#d8e8e0" fill-opacity="0.53"/><circle cx="37.1" cy="7.2" r="1.28" fill="#e8dcc0" fill-opacity="0.10"/><circle cx="116.4" cy="108.3" r="1.32" fill="#e8dcc0" fill-opacity="0.10"/><circle cx="129.8" cy="203.6" r="1.42" fill="#d0e0f0" fill-opacity="0.13"/><circle cx="242.6" cy="122.8" r="1.53" fill="#f0e0a0" fill-opacity="0.59"/><circle cx="45.8" cy="73.4" r="1.67" fill="#e8c8b0" fill-opacity="0.63"/><circle cx="166.6" cy="241.2" r="1.64" fill="#e8c8b0" fill-opacity="0.59"/><circle cx="164.5" cy="50.2" r="2.60" fill="#f4c8e8" fill-opacity="1.00"/><circle cx="142.0" cy="63.9" r="2.60" fill="#f0c0e0" fill-opacity="1.00"/><circle cx="194.4" cy="64.8" r="2.00" fill="#e8e0d0" fill-opacity="0.80"/><circle cx="202.8" cy="64.8" r="2.00" fill="#c8e0f0" fill-opacity="0.80"/><circle cx="141.5" cy="77.2" r="1.80" fill="#d8f0e8" fill-opacity="0.70"/><circle cx="60.6" cy="134.2" r="2.40" fill="#f8c0b0" fill-opacity="0.95"/><circle cx="65.9" cy="151.9" r="2.20" fill="#d0e8f8" fill-opacity="0.90"/><circle cx="91.0" cy="135.4" r="1.80" fill="#e0f0e8" fill-opacity="0.70"/><circle cx="112.6" cy="184.0" r="2.30" fill="#f8c0b0" fill-opacity="0.95"/><circle cx="100.0" cy="182.0" r="1.80" fill="#d0e8f0" fill-opacity="0.70"/><circle cx="107.9" cy="204.8" r="2.20" fill="#d0e8f8" fill-opacity="0.90"/><circle cx="212.1" cy="204.8" r="2.20" fill="#d8e8f8" fill-opacity="0.90"/><circle cx="190.7" cy="221.9" r="2.20" fill="#f0d0b0" fill-opacity="0.90"/><circle cx="162.3" cy="191.7" r="1.80" fill="#e0e0c8" fill-opacity="0.70"/><circle cx="256.6" cy="123.9" r="1.80" fill="#e8d8c0" fill-opacity="0.70"/><circle cx="262.0" cy="97.5" r="1.60" fill="#e8d8c0" fill-opacity="0.60"/><circle cx="235.5" cy="59.5" r="1.80" fill="#e8d8b0" fill-opacity="0.70"/><circle cx="322.0" cy="59.5" r="2.00" fill="#f0b0a0" fill-opacity="0.80"/><circle cx="94.0" cy="7.8" r="1.80" fill="#d0e8e0" fill-opacity="0.70"/><circle cx="83.0" cy="39.0" r="2.00" fill="#f0e0c0" fill-opacity="0.80"/><circle cx="75.0" cy="35.0" r="1.80" fill="#f0e0c0" fill-opacity="0.70"/><circle cx="33.0" cy="21.0" r="1.80" fill="#d8e8e0" fill-opacity="0.70"/><circle cx="129.7" cy="92.8" r="1.60" fill="#e0e0d0" fill-opacity="0.60"/><circle cx="314.8" cy="236.8" r="2.00" fill="#f0d0b0" fill-opacity="0.80"/><circle cx="274.4" cy="226.6" r="1.80" fill="#e0d0b0" fill-opacity="0.70"/><circle cx="190.4" cy="239.0" r="1.80" fill="#d0e8f0" fill-opacity="0.70"/><circle cx="238.6" cy="237.5" r="2.00" fill="#f0c0a0" fill-opacity="0.80"/><circle cx="289.9" cy="169.6" r="1.80" fill="#e8d0b0" fill-opacity="0.70"/><circle cx="300.8" cy="64.8" r="1.60" fill="#e8d8c0" fill-opacity="0.60"/><circle cx="179.5" cy="15.0" r="1.60" fill="#d8e8e0" fill-opacity="0.60"/><circle cx="109.0" cy="3.0" r="1.60" fill="#d8e8e0" fill-opacity="0.60"/><circle cx="211.0" cy="33.0" r="1.40" fill="#e0d8c0" fill-opacity="0.50"/><circle cx="33.0" cy="60.0" r="1.60" fill="#e8d8c0" fill-opacity="0.60"/><circle cx="21.0" cy="94.0" r="1.60" fill="#d0e0e0" fill-opacity="0.60"/></g><filter id="cb11" x="-50%" y="-50%" width="200%" height="200%"><feGaussianBlur stdDeviation="1.0"/></filter><g filter="url(#cb11)"><circle cx="167" cy="127" r="9.8" fill="#f8e0a0"/><circle cx="167" cy="127" r="7.8" fill="#f488b0"/></g></svg></div>
<svg style="left:71px;top:108px;width:18px;height:111.5px" width="18" height="111.5"><path d="M0.5 17 L18 0 L18 111.0 L0.5 111.0 Z" fill="#5b5b5b" stroke="#505050" stroke-width="1"/></svg>
<div class="t" style="left:76.09px;top:215.20px;font-size:9px;line-height:9px;color:#dddddd;font-family:'Liberation Sans', sans-serif;font-weight:normal;transform:rotate(-90deg) scaleX(1.0627);transform-origin:0 0;">Image71_Preview01</div>
<svg style="left:75px;top:294.5px;width:12px;height:52px" width="12" height="52" viewBox="0 0 12 52"><path d="M1.5 1 L9 8.5" stroke="#e6e6e6" stroke-width="1.1" fill="none"/><path d="M9.5 3.5 L9.5 9 L4 9 Z" fill="none" stroke="#e6e6e6" stroke-width="1.1"/><rect x="3.3" y="17.3" width="4.4" height="4.4" fill="none" stroke="#e6e6e6" stroke-width="1.3"/><path d="M1 15 L3.5 17.5 M10 15 L7.5 17.5 M1 24 L3.5 21.5 M10 24 L7.5 21.5" stroke="#e6e6e6" stroke-width="0.9"/><rect x="4" y="29" width="6" height="6" fill="none" stroke="#e6e6e6" stroke-width="1.2"/><rect x="1.2" y="32.5" width="5" height="4.8" fill="#7a7a7a" stroke="#e6e6e6" stroke-width="1.2"/><circle cx="5.5" cy="46" r="3.9" fill="none" stroke="#e6e6e6" stroke-width="1.2"/><circle cx="5.5" cy="46" r="1.3" fill="#e6e6e6"/></svg>
<div style="left:579px;top:288px;width:669px;height:510px;background:#7a7a7a"></div>
<div style="left:579px;top:288px;width:669px;height:21px;background:#6b6b6b"></div>
<div class="t" style="left:804.2px;top:293.69px;font-size:11px;line-height:11px;color:#dadada;font-family:'Liberation Sans', sans-serif;font-weight:bold;transform:scaleX(1.1037);transform-origin:0 0;">RGB 2:1 Image128 | &lt;*new*&gt;</div>
<svg style="left:1179.9px;top:294.4px;width:64px;height:10px" width="64" height="10" viewBox="0 0 64 10"><rect x="0" y="3.7" width="8" height="2.6" fill="#f4f4f4"/><rect x="17.7" y="2.5" width="8.2" height="1.5" fill="#f4f4f4"/><path d="M21.8 3.6 L25.9 8.5 L17.7 8.5 Z" fill="#f4f4f4"/><path d="M37.4 1.1h2.7v2.7h2.8v2.7h-2.8v2.8h-2.7v-2.8h-2.7v-2.7h2.7z" fill="#f4f4f4"/><path d="M53.2 1.6 L60.2 8.6 M60.2 1.6 L53.2 8.6" stroke="#f4f4f4" stroke-width="1.9"/></svg>
<div style="left:599px;top:309px;width:647px;height:487px;background:#060505"></div>
<div id="img3" style="left:599px;top:309px;width:647px;height:487px;overflow:hidden"><svg style="left:0;top:0" width="647" height="487" viewBox="0 0 647 487"><defs><filter id="bl33" x="-20%" y="-20%" width="140%" height="140%"><feGaussianBlur stdDeviation="1.1"/></filter><filter id="bl233" x="-50%" y="-50%" width="200%" height="200%"><feGaussianBlur stdDeviation="1.9"/></filter><radialGradient id="g33_0" cx="332.3" cy="252.3" r="46" gradientUnits="userSpaceOnUse"><stop offset="0" stop-color="#f09040" stop-opacity="0.8"/><stop offset="0.42" stop-color="#b06020" stop-opacity="0.45"/><stop offset="0.7" stop-color="#602e10" stop-opacity="0.2"/><stop offset="1" stop-color="#301808" stop-opacity="0"/></radialGradient><radialGradient id="g33_1" cx="332.3" cy="252.3" r="120" gradientUnits="userSpaceOnUse"><stop offset="0" stop-color="#2a1808" stop-opacity="0.5"/><stop offset="1" stop-color="#070605" stop-opacity="0"/></radialGradient></defs><rect width="647" height="487" fill="#070605"/><rect width="647" height="487" fill="url(#g33_0)"/><rect width="647" height="487" fill="url(#g33_1)"/><g filter="url(#bl233)"><path d="M332.2 256.3 L368.2 252.8 L332.4 248.3 Z" fill="#c87030" fill-opacity="0.55"/><path d="M331.6 256.2 L368.1 258.3 L333.0 248.4 Z" fill="#c87030" fill-opacity="0.57"/><path d="M330.4 255.8 L355.2 264.8 L334.2 248.8 Z" fill="#c87030" fill-opacity="0.50"/><path d="M329.9 255.5 L358.6 272.4 L334.7 249.1 Z" fill="#c87030" fill-opacity="0.59"/><path d="M329.3 255.0 L353.4 276.0 L335.3 249.6 Z" fill="#c87030" fill-opacity="0.58"/><path d="M328.8 254.2 L345.9 277.5 L335.8 250.4 Z" fill="#c87030" fill-opacity="0.39"/><path d="M328.5 253.5 L339.5 274.3 L336.1 251.1 Z" fill="#c87030" fill-opacity="0.48"/><path d="M328.3 252.5 L334.1 283.6 L336.3 252.1 Z" fill="#c87030" fill-opacity="0.55"/><path d="M328.4 251.5 L325.8 285.9 L336.2 253.1 Z" fill="#c87030" fill-opacity="0.50"/><path d="M328.4 251.4 L326.8 274.9 L336.2 253.2 Z" fill="#c87030" fill-opacity="0.59"/><path d="M328.8 250.5 L320.0 276.0 L335.8 254.1 Z" fill="#c87030" fill-opacity="0.57"/><path d="M329.5 249.5 L314.9 269.8 L335.1 255.1 Z" fill="#c87030" fill-opacity="0.40"/><path d="M329.8 249.2 L310.5 269.9 L334.8 255.4 Z" fill="#c87030" fill-opacity="0.30"/><path d="M330.7 248.6 L306.0 263.8 L333.9 256.0 Z" fill="#c87030" fill-opacity="0.42"/><path d="M331.2 248.4 L308.8 258.9 L333.4 256.2 Z" fill="#c87030" fill-opacity="0.31"/><path d="M332.6 248.3 L294.0 249.4 L332.0 256.3 Z" fill="#c87030" fill-opacity="0.47"/><path d="M332.8 248.3 L307.3 248.9 L331.8 256.3 Z" fill="#c87030" fill-opacity="0.34"/><path d="M333.8 248.6 L310.7 243.6 L330.8 256.0 Z" fill="#c87030" fill-opacity="0.38"/><path d="M334.5 248.9 L310.2 238.2 L330.1 255.7 Z" fill="#c87030" fill-opacity="0.50"/><path d="M335.2 249.6 L310.4 228.4 L329.4 255.0 Z" fill="#c87030" fill-opacity="0.41"/><path d="M335.8 250.3 L312.9 218.1 L328.8 254.3 Z" fill="#c87030" fill-opacity="0.39"/><path d="M336.0 250.7 L319.6 222.3 L328.6 253.9 Z" fill="#c87030" fill-opacity="0.41"/><path d="M336.3 252.1 L331.1 227.9 L328.3 252.5 Z" fill="#c87030" fill-opacity="0.56"/><path d="M336.3 252.3 L332.6 218.4 L328.3 252.3 Z" fill="#c87030" fill-opacity="0.43"/><path d="M336.1 253.4 L343.7 212.3 L328.5 251.2 Z" fill="#c87030" fill-opacity="0.51"/><path d="M335.9 254.1 L346.8 222.8 L328.7 250.5 Z" fill="#c87030" fill-opacity="0.48"/><path d="M335.5 254.7 L346.6 233.1 L329.1 249.9 Z" fill="#c87030" fill-opacity="0.48"/><path d="M334.5 255.6 L359.2 234.6 L330.1 249.0 Z" fill="#c87030" fill-opacity="0.43"/><path d="M333.9 256.0 L357.7 241.1 L330.7 248.6 Z" fill="#c87030" fill-opacity="0.56"/><path d="M332.8 256.3 L364.7 248.5 L331.8 248.3 Z" fill="#c87030" fill-opacity="0.31"/></g><g filter="url(#bl33)"><circle cx="256.9" cy="391.1" r="1.46" fill="#708070" fill-opacity="0.04"/><circle cx="592.0" cy="155.7" r="1.96" fill="#708070" fill-opacity="0.19"/><circle cx="492.1" cy="470.5" r="1.87" fill="#806850" fill-opacity="0.09"/><circle cx="598.7" cy="423.2" r="1.80" fill="#807860" fill-opacity="0.12"/><circle cx="550.1" cy="304.4" r="1.78" fill="#807860" fill-opacity="0.05"/><circle cx="515.7" cy="412.9" r="1.26" fill="#708070" fill-opacity="0.04"/><circle cx="128.8" cy="296.6" r="1.25" fill="#807860" fill-opacity="0.14"/><circle cx="371.2" cy="484.8" r="1.74" fill="#708070" fill-opacity="0.02"/><circle cx="267.5" cy="446.4" r="1.85" fill="#807860" fill-opacity="0.04"/><circle cx="504.9" cy="286.4" r="1.37" fill="#807860" fill-opacity="0.11"/><circle cx="216.5" cy="43.2" r="1.91" fill="#806850" fill-opacity="0.10"/><circle cx="626.3" cy="367.5" r="1.87" fill="#807860" fill-opacity="0.02"/><circle cx="321.9" cy="141.5" r="1.46" fill="#806850" fill-opacity="0.11"/><circle cx="63.3" cy="188.4" r="1.80" fill="#807860" fill-opacity="0.06"/><circle cx="341.5" cy="408.1" r="1.41" fill="#708070" fill-opacity="0.05"/><circle cx="88.8" cy="234.4" r="1.57" fill="#708070" fill-opacity="0.07"/><circle cx="4.6" cy="11.5" r="1.32" fill="#806850" fill-opacity="0.05"/><circle cx="153.6" cy="299.2" r="1.85" fill="#607070" fill-opacity="0.10"/><circle cx="370.5" cy="466.3" r="1.42" fill="#806850" fill-opacity="0.16"/><circle cx="103.2" cy="476.5" r="1.48" fill="#708070" fill-opacity="0.04"/><circle cx="417.3" cy="465.8" r="1.47" fill="#807860" fill-opacity="0.17"/><circle cx="551.3" cy="327.5" r="1.30" fill="#607070" fill-opacity="0.04"/><circle cx="398.8" cy="366.2" r="1.88" fill="#708070" fill-opacity="0.10"/><circle cx="565.0" cy="398.7" r="1.89" fill="#806850" fill-opacity="0.15"/><circle cx="472.5" cy="441.9" r="1.70" fill="#607070" fill-opacity="0.06"/><circle cx="518.4" cy="216.2" r="1.52" fill="#607070" fill-opacity="0.04"/><circle cx="102.4" cy="106.4" r="1.23" fill="#607070" fill-opacity="0.04"/><circle cx="213.2" cy="443.8" r="1.87" fill="#708070" fill-opacity="0.04"/><circle cx="62.7" cy="65.9" r="1.62" fill="#807860" fill-opacity="0.19"/><circle cx="514.1" cy="193.8" r="1.28" fill="#607070" fill-opacity="0.12"/><circle cx="247.6" cy="285.8" r="1.83" fill="#607070" fill-opacity="0.21"/><circle cx="136.5" cy="415.0" r="1.34" fill="#607070" fill-opacity="0.21"/><circle cx="183.2" cy="223.2" r="1.93" fill="#806850" fill-opacity="0.06"/><circle cx="9.1" cy="82.3" r="1.59" fill="#807860" fill-opacity="0.21"/><circle cx="601.0" cy="426.5" r="1.84" fill="#607070" fill-opacity="0.05"/><circle cx="25.5" cy="468.3" r="1.40" fill="#806850" fill-opacity="0.09"/><circle cx="226.9" cy="58.1" r="1.22" fill="#806850" fill-opacity="0.07"/><circle cx="406.3" cy="480.5" r="1.80" fill="#806850" fill-opacity="0.21"/><circle cx="532.0" cy="127.8" r="1.22" fill="#708070" fill-opacity="0.16"/><circle cx="510.2" cy="438.5" r="1.22" fill="#807860" fill-opacity="0.15"/><circle cx="533.2" cy="252.3" r="1.46" fill="#806850" fill-opacity="0.04"/><circle cx="518.5" cy="170.9" r="1.97" fill="#607070" fill-opacity="0.12"/><circle cx="477.7" cy="326.5" r="1.41" fill="#807860" fill-opacity="0.21"/><circle cx="210.5" cy="296.5" r="1.78" fill="#708070" fill-opacity="0.08"/><circle cx="462.7" cy="64.0" r="1.34" fill="#806850" fill-opacity="0.17"/><circle cx="227.1" cy="365.3" r="1.43" fill="#807860" fill-opacity="0.14"/><circle cx="201.6" cy="288.3" r="1.25" fill="#806850" fill-opacity="0.11"/><circle cx="118.5" cy="73.1" r="1.60" fill="#708070" fill-opacity="0.04"/><circle cx="107.3" cy="304.7" r="1.43" fill="#708070" fill-opacity="0.04"/><circle cx="438.3" cy="238.6" r="1.30" fill="#708070" fill-opacity="0.13"/><circle cx="102.4" cy="267.5" r="1.42" fill="#607070" fill-opacity="0.13"/><circle cx="488.2" cy="168.9" r="1.95" fill="#807860" fill-opacity="0.05"/><circle cx="72.6" cy="33.4" r="1.22" fill="#708070" fill-opacity="0.05"/><circle cx="355.6" cy="194.8" r="1.70" fill="#708070" fill-opacity="0.13"/><circle cx="462.0" cy="363.0" r="1.95" fill="#607070" fill-opacity="0.13"/><circle cx="245.9" cy="390.8" r="1.49" fill="#807860" fill-opacity="0.17"/><circle cx="580.2" cy="443.3" r="1.75" fill="#806850" fill-opacity="0.10"/><circle cx="631.9" cy="156.0" r="1.86" fill="#708070" fill-opacity="0.15"/><circle cx="133.3" cy="67.7" r="1.29" fill="#708070" fill-opacity="0.11"/><circle cx="628.2" cy="64.7" r="1.28" fill="#607070" fill-opacity="0.05"/><circle cx="490.5" cy="240.5" r="1.75" fill="#607070" fill-opacity="0.08"/><circle cx="218.6" cy="246.6" r="1.25" fill="#708070" fill-opacity="0.17"/><circle cx="424.7" cy="95.8" r="1.39" fill="#806850" fill-opacity="0.21"/><circle cx="265.8" cy="381.3" r="1.77" fill="#807860" fill-opacity="0.17"/><circle cx="19.7" cy="267.0" r="1.47" fill="#607070" fill-opacity="0.18"/><circle cx="573.3" cy="108.4" r="1.29" fill="#708070" fill-opacity="0.07"/><circle cx="65.1" cy="341.8" r="1.45" fill="#708070" fill-opacity="0.06"/><circle cx="367.6" cy="208.8" r="1.81" fill="#806850" fill-opacity="0.09"/><circle cx="506.3" cy="240.0" r="1.26" fill="#607070" fill-opacity="0.08"/><circle cx="246.1" cy="342.1" r="1.85" fill="#708070" fill-opacity="0.20"/><circle cx="564.7" cy="165.7" r="1.50" fill="#807860" fill-opacity="0.13"/><circle cx="200.5" cy="176.9" r="1.82" fill="#806850" fill-opacity="0.19"/><circle cx="383.3" cy="192.8" r="1.61" fill="#807860" fill-opacity="0.05"/><circle cx="489.2" cy="263.7" r="1.88" fill="#806850" fill-opacity="0.11"/><circle cx="426.8" cy="367.8" r="1.90" fill="#708070" fill-opacity="0.12"/><circle cx="512.5" cy="473.8" r="1.22" fill="#607070" fill-opacity="0.20"/><circle cx="615.9" cy="394.0" r="1.52" fill="#607070" fill-opacity="0.05"/><circle cx="576.3" cy="399.0" r="1.50" fill="#607070" fill-opacity="0.14"/><circle cx="600.6" cy="280.3" r="1.31" fill="#806850" fill-opacity="0.08"/><circle cx="133.3" cy="376.9" r="1.55" fill="#807860" fill-opacity="0.07"/><circle cx="488.9" cy="447.8" r="1.47" fill="#708070" fill-opacity="0.06"/><circle cx="176.1" cy="273.0" r="1.98" fill="#607070" fill-opacity="0.04"/><circle cx="564.4" cy="334.9" r="1.24" fill="#807860" fill-opacity="0.10"/><circle cx="166.8" cy="482.1" r="1.82" fill="#806850" fill-opacity="0.04"/><circle cx="571.1" cy="233.5" r="1.22" fill="#807860" fill-opacity="0.16"/><circle cx="481.5" cy="38.8" r="1.58" fill="#806850" fill-opacity="0.17"/><circle cx="112.1" cy="160.5" r="1.56" fill="#807860" fill-opacity="0.10"/><circle cx="1.0" cy="301.0" r="1.31" fill="#607070" fill-opacity="0.18"/><circle cx="588.1" cy="455.0" r="1.34" fill="#607070" fill-opacity="0.03"/><circle cx="103.9" cy="226.5" r="1.65" fill="#806850" fill-opacity="0.21"/><circle cx="362.8" cy="424.9" r="1.97" fill="#607070" fill-opacity="0.15"/><circle cx="84.9" cy="322.4" r="1.36" fill="#806850" fill-opacity="0.09"/><circle cx="622.1" cy="342.3" r="1.51" fill="#806850" fill-opacity="0.12"/><circle cx="352.6" cy="162.5" r="1.99" fill="#807860" fill-opacity="0.08"/><circle cx="4.7" cy="328.6" r="1.28" fill="#607070" fill-opacity="0.04"/><circle cx="243.4" cy="446.3" r="1.42" fill="#807860" fill-opacity="0.07"/><circle cx="555.5" cy="456.1" r="1.29" fill="#607070" fill-opacity="0.03"/><circle cx="218.1" cy="51.1" r="1.27" fill="#806850" fill-opacity="0.07"/><circle cx="503.2" cy="193.0" r="1.81" fill="#806850" fill-opacity="0.02"/><circle cx="384.5" cy="422.0" r="1.99" fill="#708070" fill-opacity="0.20"/><circle cx="106.3" cy="208.4" r="1.67" fill="#708070" fill-opacity="0.11"/><circle cx="406.1" cy="370.1" r="1.80" fill="#807860" fill-opacity="0.15"/><circle cx="266.8" cy="70.3" r="1.88" fill="#806850" fill-opacity="0.18"/><circle cx="607.0" cy="210.2" r="1.47" fill="#807860" fill-opacity="0.12"/><circle cx="266.9" cy="340.2" r="1.96" fill="#708070" fill-opacity="0.08"/><circle cx="90.7" cy="289.0" r="1.87" fill="#806850" fill-opacity="0.09"/><circle cx="166.2" cy="126.0" r="1.81" fill="#708070" fill-opacity="0.03"/><circle cx="32.1" cy="114.9" r="1.80" fill="#807860" fill-opacity="0.04"/><circle cx="589.0" cy="134.1" r="1.35" fill="#607070" fill-opacity="0.16"/><circle cx="77.9" cy="473.8" r="1.36" fill="#708070" fill-opacity="0.13"/><circle cx="447.5" cy="326.6" r="1.26" fill="#708070" fill-opacity="0.17"/><circle cx="455.3" cy="151.3" r="1.44" fill="#607070" fill-opacity="0.12"/><circle cx="462.1" cy="33.4" r="1.25" fill="#708070" fill-opacity="0.02"/><circle cx="372.4" cy="27.5" r="1.41" fill="#807860" fill-opacity="0.22"/><circle cx="547.3" cy="48.9" r="1.91" fill="#807860" fill-opacity="0.08"/><circle cx="253.4" cy="397.8" r="1.54" fill="#708070" fill-opacity="0.17"/><circle cx="284.2" cy="226.6" r="1.56" fill="#806850" fill-opacity="0.17"/><circle cx="200.7" cy="28.0" r="1.25" fill="#708070" fill-opacity="0.12"/><circle cx="438.8" cy="453.3" r="1.74" fill="#807860" fill-opacity="0.18"/><circle cx="552.3" cy="453.7" r="1.59" fill="#708070" fill-opacity="0.02"/><circle cx="638.7" cy="109.2" r="1.93" fill="#708070" fill-opacity="0.17"/><circle cx="8.3" cy="74.4" r="1.66" fill="#806850" fill-opacity="0.10"/><circle cx="485.8" cy="16.9" r="1.78" fill="#607070" fill-opacity="0.20"/><circle cx="621.2" cy="342.5" r="1.79" fill="#806850" fill-opacity="0.07"/><circle cx="60.0" cy="155.1" r="1.88" fill="#708070" fill-opacity="0.09"/><circle cx="482.3" cy="364.8" r="1.85" fill="#806850" fill-opacity="0.04"/><circle cx="496.8" cy="184.2" r="1.54" fill="#807860" fill-opacity="0.05"/><circle cx="111.4" cy="438.9" r="1.84" fill="#708070" fill-opacity="0.11"/><circle cx="36.8" cy="426.8" r="1.62" fill="#806850" fill-opacity="0.07"/><circle cx="447.3" cy="78.4" r="1.66" fill="#607070" fill-opacity="0.15"/><circle cx="513.4" cy="52.8" r="1.40" fill="#607070" fill-opacity="0.13"/><circle cx="404.6" cy="175.7" r="1.85" fill="#607070" fill-opacity="0.10"/><circle cx="252.3" cy="272.6" r="1.82" fill="#607070" fill-opacity="0.19"/><circle cx="179.2" cy="209.9" r="1.74" fill="#807860" fill-opacity="0.10"/><circle cx="141.9" cy="265.3" r="1.20" fill="#607070" fill-opacity="0.07"/><circle cx="504.5" cy="299.7" r="1.91" fill="#607070" fill-opacity="0.04"/><circle cx="18.0" cy="406.7" r="1.33" fill="#607070" fill-opacity="0.09"/><circle cx="580.6" cy="83.3" r="1.44" fill="#607070" fill-opacity="0.11"/><circle cx="299.9" cy="344.3" r="1.99" fill="#607070" fill-opacity="0.03"/><circle cx="320.9" cy="79.3" r="1.21" fill="#708070" fill-opacity="0.14"/><circle cx="3.9" cy="262.1" r="1.50" fill="#806850" fill-opacity="0.12"/><circle cx="83.4" cy="340.8" r="1.40" fill="#807860" fill-opacity="0.03"/><circle cx="357.1" cy="6.1" r="1.54" fill="#708070" fill-opacity="0.12"/><circle cx="464.9" cy="100.7" r="1.59" fill="#806850" fill-opacity="0.11"/><circle cx="349.5" cy="407.6" r="1.73" fill="#708070" fill-opacity="0.06"/><circle cx="345.8" cy="94.6" r="1.70" fill="#806850" fill-opacity="0.12"/><circle cx="12.3" cy="168.1" r="1.47" fill="#708070" fill-opacity="0.06"/><circle cx="147.9" cy="40.7" r="1.89" fill="#607070" fill-opacity="0.12"/><circle cx="242.5" cy="349.2" r="1.99" fill="#806850" fill-opacity="0.10"/><circle cx="378.9" cy="332.1" r="1.49" fill="#807860" fill-opacity="0.05"/><circle cx="41.0" cy="480.8" r="1.44" fill="#607070" fill-opacity="0.10"/><circle cx="361.6" cy="251.9" r="1.71" fill="#807860" fill-opacity="0.08"/><circle cx="327.8" cy="168.7" r="1.58" fill="#807860" fill-opacity="0.03"/><circle cx="153.3" cy="129.3" r="1.32" fill="#607070" fill-opacity="0.16"/><circle cx="605.4" cy="115.6" r="1.62" fill="#806850" fill-opacity="0.11"/><circle cx="167.9" cy="373.6" r="1.78" fill="#708070" fill-opacity="0.04"/><circle cx="185.1" cy="436.6" r="1.72" fill="#807860" fill-opacity="0.14"/><circle cx="278.5" cy="243.6" r="1.70" fill="#607070" fill-opacity="0.07"/><circle cx="390.0" cy="60.2" r="1.43" fill="#708070" fill-opacity="0.14"/><circle cx="557.1" cy="165.9" r="1.96" fill="#708070" fill-opacity="0.14"/><circle cx="534.4" cy="340.6" r="1.81" fill="#607070" fill-opacity="0.11"/><circle cx="264.5" cy="54.5" r="1.70" fill="#708070" fill-opacity="0.14"/><circle cx="198.2" cy="482.7" r="1.41" fill="#807860" fill-opacity="0.20"/><circle cx="530.7" cy="77.4" r="1.41" fill="#807860" fill-opacity="0.05"/><circle cx="317.4" cy="438.6" r="1.50" fill="#807860" fill-opacity="0.03"/><circle cx="424.1" cy="84.7" r="1.96" fill="#708070" fill-opacity="0.13"/><circle cx="284.9" cy="425.4" r="1.83" fill="#607070" fill-opacity="0.05"/><circle cx="80.9" cy="420.0" r="1.74" fill="#806850" fill-opacity="0.08"/><circle cx="533.3" cy="52.8" r="1.50" fill="#806850" fill-opacity="0.03"/><circle cx="390.5" cy="388.0" r="1.42" fill="#708070" fill-opacity="0.14"/><circle cx="616.7" cy="317.1" r="1.97" fill="#807860" fill-opacity="0.11"/><circle cx="438.0" cy="7.3" r="1.37" fill="#708070" fill-opacity="0.05"/><circle cx="609.1" cy="182.5" r="1.50" fill="#806850" fill-opacity="0.11"/><circle cx="189.2" cy="251.1" r="1.91" fill="#607070" fill-opacity="0.04"/><circle cx="79.5" cy="238.6" r="1.62" fill="#708070" fill-opacity="0.03"/><circle cx="16.3" cy="452.1" r="1.76" fill="#806850" fill-opacity="0.14"/><circle cx="26.8" cy="14.6" r="1.48" fill="#607070" fill-opacity="0.09"/><circle cx="470.5" cy="7.8" r="1.73" fill="#708070" fill-opacity="0.12"/><circle cx="281.7" cy="455.8" r="1.23" fill="#807860" fill-opacity="0.16"/><circle cx="224.4" cy="362.3" r="1.30" fill="#806850" fill-opacity="0.13"/><circle cx="454.3" cy="230.4" r="1.33" fill="#806850" fill-opacity="0.07"/><circle cx="418.1" cy="44.8" r="1.94" fill="#607070" fill-opacity="0.04"/><circle cx="10.0" cy="1.8" r="1.97" fill="#607070" fill-opacity="0.07"/><circle cx="14.9" cy="32.4" r="1.56" fill="#607070" fill-opacity="0.07"/><circle cx="81.5" cy="252.6" r="1.29" fill="#708070" fill-opacity="0.21"/><circle cx="456.8" cy="311.7" r="1.82" fill="#708070" fill-opacity="0.13"/><circle cx="503.2" cy="58.0" r="1.41" fill="#807860" fill-opacity="0.14"/><circle cx="188.7" cy="480.2" r="1.68" fill="#708070" fill-opacity="0.09"/><circle cx="333.5" cy="133.7" r="1.91" fill="#607070" fill-opacity="0.16"/><circle cx="525.5" cy="155.2" r="1.87" fill="#607070" fill-opacity="0.21"/><circle cx="514.8" cy="141.8" r="1.57" fill="#607070" fill-opacity="0.08"/><circle cx="303.4" cy="98.3" r="1.61" fill="#807860" fill-opacity="0.20"/><circle cx="173.5" cy="210.9" r="1.54" fill="#807860" fill-opacity="0.10"/><circle cx="411.5" cy="241.9" r="1.67" fill="#708070" fill-opacity="0.07"/><circle cx="374.2" cy="435.7" r="1.57" fill="#708070" fill-opacity="0.12"/><circle cx="496.0" cy="307.4" r="1.96" fill="#708070" fill-opacity="0.07"/><circle cx="34.3" cy="290.0" r="1.22" fill="#806850" fill-opacity="0.20"/><circle cx="428.4" cy="244.8" r="1.62" fill="#708070" fill-opacity="0.08"/><circle cx="563.6" cy="483.1" r="1.65" fill="#607070" fill-opacity="0.10"/><circle cx="214.4" cy="7.3" r="1.60" fill="#708070" fill-opacity="0.18"/><circle cx="206.2" cy="465.2" r="1.53" fill="#708070" fill-opacity="0.02"/><circle cx="533.8" cy="342.7" r="1.90" fill="#607070" fill-opacity="0.04"/><circle cx="380.8" cy="279.0" r="1.85" fill="#607070" fill-opacity="0.06"/><circle cx="122.6" cy="337.8" r="1.72" fill="#806850" fill-opacity="0.06"/><circle cx="220.3" cy="239.4" r="1.36" fill="#806850" fill-opacity="0.13"/><circle cx="201.1" cy="119.1" r="1.98" fill="#607070" fill-opacity="0.06"/><circle cx="610.8" cy="56.0" r="1.93" fill="#607070" fill-opacity="0.12"/><circle cx="375.3" cy="452.7" r="1.43" fill="#806850" fill-opacity="0.14"/><circle cx="542.4" cy="431.9" r="1.51" fill="#806850" fill-opacity="0.03"/><circle cx="105.1" cy="345.6" r="1.79" fill="#607070" fill-opacity="0.03"/><circle cx="213.0" cy="375.5" r="1.75" fill="#607070" fill-opacity="0.18"/><circle cx="482.7" cy="66.8" r="1.21" fill="#607070" fill-opacity="0.16"/><circle cx="377.8" cy="30.4" r="1.41" fill="#807860" fill-opacity="0.10"/><circle cx="449.4" cy="82.7" r="1.48" fill="#708070" fill-opacity="0.09"/><circle cx="106.2" cy="288.2" r="1.27" fill="#607070" fill-opacity="0.03"/><circle cx="364.3" cy="171.4" r="1.37" fill="#607070" fill-opacity="0.04"/><circle cx="215.3" cy="225.3" r="1.74" fill="#607070" fill-opacity="0.09"/><circle cx="322.3" cy="145.6" r="1.60" fill="#708070" fill-opacity="0.08"/><circle cx="621.5" cy="384.4" r="1.48" fill="#807860" fill-opacity="0.05"/><circle cx="380.3" cy="222.1" r="1.89" fill="#806850" fill-opacity="0.15"/><circle cx="96.1" cy="406.1" r="1.90" fill="#807860" fill-opacity="0.06"/><circle cx="546.4" cy="405.8" r="1.88" fill="#806850" fill-opacity="0.03"/><circle cx="490.5" cy="382.4" r="1.27" fill="#806850" fill-opacity="0.13"/><circle cx="571.6" cy="479.7" r="1.55" fill="#708070" fill-opacity="0.11"/><circle cx="621.1" cy="71.9" r="1.99" fill="#607070" fill-opacity="0.03"/><circle cx="410.7" cy="248.8" r="1.98" fill="#807860" fill-opacity="0.10"/><circle cx="241.8" cy="55.7" r="1.50" fill="#607070" fill-opacity="0.03"/><circle cx="25.3" cy="440.3" r="1.64" fill="#806850" fill-opacity="0.04"/><circle cx="642.1" cy="261.2" r="1.71" fill="#607070" fill-opacity="0.17"/><circle cx="543.6" cy="412.2" r="1.72" fill="#607070" fill-opacity="0.16"/><circle cx="231.8" cy="58.2" r="1.93" fill="#806850" fill-opacity="0.16"/><circle cx="81.9" cy="54.9" r="1.89" fill="#806850" fill-opacity="0.16"/><circle cx="363.7" cy="394.2" r="1.62" fill="#806850" fill-opacity="0.20"/><circle cx="315.0" cy="417.0" r="1.70" fill="#708070" fill-opacity="0.11"/><circle cx="625.7" cy="404.2" r="1.87" fill="#807860" fill-opacity="0.08"/><circle cx="131.6" cy="26.0" r="1.47" fill="#708070" fill-opacity="0.10"/><circle cx="586.4" cy="24.7" r="1.94" fill="#708070" fill-opacity="0.03"/><circle cx="177.2" cy="471.6" r="1.96" fill="#708070" fill-opacity="0.14"/><circle cx="315.6" cy="163.1" r="1.54" fill="#806850" fill-opacity="0.03"/><circle cx="493.0" cy="131.6" r="1.63" fill="#807860" fill-opacity="0.02"/><circle cx="80.8" cy="365.3" r="1.71" fill="#807860" fill-opacity="0.03"/><circle cx="592.8" cy="139.6" r="1.31" fill="#806850" fill-opacity="0.06"/><circle cx="338.4" cy="31.2" r="1.65" fill="#708070" fill-opacity="0.03"/><circle cx="41.9" cy="372.3" r="1.26" fill="#807860" fill-opacity="0.15"/><circle cx="154.0" cy="159.1" r="1.63" fill="#607070" fill-opacity="0.08"/><circle cx="532.1" cy="45.0" r="1.73" fill="#708070" fill-opacity="0.03"/><circle cx="583.0" cy="425.9" r="1.50" fill="#806850" fill-opacity="0.08"/><circle cx="619.1" cy="59.3" r="1.82" fill="#806850" fill-opacity="0.15"/><circle cx="412.2" cy="315.3" r="1.95" fill="#708070" fill-opacity="0.03"/><circle cx="335.7" cy="128.7" r="1.20" fill="#807860" fill-opacity="0.16"/><circle cx="94.5" cy="113.8" r="1.81" fill="#807860" fill-opacity="0.05"/><circle cx="120.2" cy="42.3" r="1.96" fill="#607070" fill-opacity="0.15"/><circle cx="576.5" cy="392.4" r="1.77" fill="#807860" fill-opacity="0.13"/><circle cx="591.2" cy="482.0" r="1.50" fill="#806850" fill-opacity="0.05"/><circle cx="586.9" cy="276.2" r="1.63" fill="#806850" fill-opacity="0.14"/><circle cx="96.3" cy="9.0" r="1.47" fill="#607070" fill-opacity="0.08"/><circle cx="124.8" cy="11.1" r="1.64" fill="#708070" fill-opacity="0.21"/><circle cx="443.6" cy="432.1" r="1.21" fill="#708070" fill-opacity="0.07"/><circle cx="282.9" cy="440.4" r="1.71" fill="#708070" fill-opacity="0.02"/><circle cx="635.0" cy="21.3" r="1.49" fill="#708070" fill-opacity="0.12"/><circle cx="284.2" cy="126.1" r="3.00" fill="#f0c0e0" fill-opacity="0.85"/><circle cx="282.0" cy="154.0" r="2.20" fill="#a0c090" fill-opacity="0.45"/><circle cx="165.4" cy="77.3" r="2.40" fill="#e0d080" fill-opacity="0.70"/><circle cx="151.3" cy="67.8" r="2.00" fill="#a09060" fill-opacity="0.35"/><circle cx="187.0" cy="15.0" r="2.00" fill="#80c0a0" fill-opacity="0.45"/><circle cx="259.0" cy="185.0" r="2.00" fill="#90b090" fill-opacity="0.30"/><circle cx="196.6" cy="97.6" r="1.80" fill="#90a080" fill-opacity="0.25"/><circle cx="249.5" cy="19.0" r="1.80" fill="#90a080" fill-opacity="0.25"/><circle cx="294.0" cy="162.7" r="1.80" fill="#90b090" fill-opacity="0.30"/><circle cx="257.6" cy="105.7" r="1.80" fill="#90a080" fill-opacity="0.25"/><circle cx="54.0" cy="76.0" r="1.80" fill="#90a080" fill-opacity="0.20"/><circle cx="20.0" cy="119.0" r="1.80" fill="#90a080" fill-opacity="0.20"/><circle cx="156.0" cy="173.5" r="1.80" fill="#90a080" fill-opacity="0.22"/><circle cx="328.9" cy="100.9" r="3.00" fill="#f0c8d8" fill-opacity="0.80"/><circle cx="405.3" cy="127.4" r="2.60" fill="#a0d8c8" fill-opacity="0.65"/><circle cx="389.0" cy="128.8" r="2.20" fill="#c0b080" fill-opacity="0.55"/><circle cx="471.8" cy="118.5" r="2.30" fill="#e0c080" fill-opacity="0.65"/><circle cx="645.3" cy="118.5" r="2.20" fill="#e0a060" fill-opacity="0.60"/><circle cx="523.3" cy="193.9" r="1.90" fill="#a0b090" fill-opacity="0.35"/><circle cx="359.0" cy="28.5" r="1.80" fill="#a0a080" fill-opacity="0.30"/><circle cx="398.6" cy="73.2" r="1.80" fill="#a0a080" fill-opacity="0.30"/><circle cx="516.5" cy="57.0" r="1.80" fill="#a0a080" fill-opacity="0.30"/><circle cx="524.6" cy="86.8" r="1.80" fill="#a0a080" fill-opacity="0.30"/><circle cx="501.6" cy="187.0" r="1.80" fill="#a0a080" fill-opacity="0.25"/><circle cx="432.5" cy="176.0" r="1.80" fill="#a0a080" fill-opacity="0.25"/><circle cx="603.0" cy="129.0" r="1.80" fill="#a0a080" fill-opacity="0.25"/><circle cx="420.0" cy="2.7" r="1.80" fill="#a0a080" fill-opacity="0.30"/><circle cx="607.0" cy="12.0" r="1.80" fill="#a0a080" fill-opacity="0.25"/><circle cx="120.7" cy="267.9" r="3.00" fill="#f0b070" fill-opacity="0.95"/><circle cx="132.0" cy="303.7" r="2.60" fill="#a8d0d0" fill-opacity="0.60"/><circle cx="182.2" cy="271.7" r="2.40" fill="#b0c0a8" fill-opacity="0.60"/><circle cx="225.9" cy="366.6" r="3.00" fill="#f8b088" fill-opacity="0.95"/><circle cx="217.0" cy="408.9" r="2.60" fill="#b0d8d8" fill-opacity="0.60"/><circle cx="200.6" cy="364.0" r="2.00" fill="#a0b8a8" fill-opacity="0.40"/><circle cx="168.0" cy="315.0" r="1.90" fill="#a0a890" fill-opacity="0.35"/><circle cx="189.0" cy="336.0" r="1.80" fill="#a0a890" fill-opacity="0.30"/><circle cx="121.5" cy="363.0" r="1.80" fill="#a09870" fill-opacity="0.30"/><circle cx="108.5" cy="357.0" r="1.80" fill="#a09870" fill-opacity="0.30"/><circle cx="153.0" cy="328.0" r="1.80" fill="#a0a890" fill-opacity="0.28"/><circle cx="204.0" cy="280.0" r="1.80" fill="#a0a890" fill-opacity="0.30"/><circle cx="222.0" cy="422.0" r="1.80" fill="#a0a890" fill-opacity="0.28"/><circle cx="227.8" cy="465.0" r="1.80" fill="#a0a890" fill-opacity="0.28"/><circle cx="131.5" cy="462.0" r="1.80" fill="#a0a890" fill-opacity="0.25"/><circle cx="256.0" cy="354.6" r="1.80" fill="#a0a890" fill-opacity="0.25"/><circle cx="130.0" cy="245.0" r="1.80" fill="#a0a890" fill-opacity="0.30"/><circle cx="188.5" cy="251.0" r="1.80" fill="#a0a890" fill-opacity="0.25"/><circle cx="84.0" cy="291.0" r="1.80" fill="#a0a890" fill-opacity="0.22"/><circle cx="269.8" cy="280.0" r="1.80" fill="#a0a890" fill-opacity="0.25"/><circle cx="322.7" cy="382.0" r="2.00" fill="#d0c070" fill-opacity="0.45"/><circle cx="424.3" cy="408.0" r="2.80" fill="#d8d8d0" fill-opacity="0.70"/><circle cx="380.4" cy="442.8" r="3.00" fill="#f8b078" fill-opacity="0.95"/><circle cx="380.4" cy="475.0" r="2.20" fill="#90c0c0" fill-opacity="0.45"/><circle cx="629.0" cy="472.6" r="2.40" fill="#e0c080" fill-opacity="0.70"/><circle cx="550.4" cy="450.0" r="2.00" fill="#c0b890" fill-opacity="0.40"/><circle cx="494.8" cy="340.8" r="1.90" fill="#a0a890" fill-opacity="0.35"/><circle cx="578.9" cy="337.5" r="1.90" fill="#a0a890" fill-opacity="0.30"/><circle cx="429.0" cy="386.4" r="1.90" fill="#a0a890" fill-opacity="0.30"/><circle cx="332.7" cy="401.3" r="1.80" fill="#a0a890" fill-opacity="0.28"/><circle cx="326.0" cy="382.0" r="2.00" fill="#d0c070" fill-opacity="0.40"/><circle cx="471.8" cy="480.0" r="2.00" fill="#d09060" fill-opacity="0.40"/><circle cx="512.4" cy="246.7" r="1.80" fill="#a0a890" fill-opacity="0.30"/><circle cx="607.0" cy="246.7" r="1.80" fill="#a0a890" fill-opacity="0.25"/><circle cx="474.5" cy="290.0" r="1.80" fill="#a0a890" fill-opacity="0.25"/><circle cx="354.4" cy="334.8" r="1.80" fill="#a0a890" fill-opacity="0.25"/><circle cx="621.0" cy="298.0" r="1.80" fill="#a0a890" fill-opacity="0.22"/><circle cx="625.0" cy="398.6" r="1.80" fill="#a0a890" fill-opacity="0.22"/><circle cx="588.0" cy="396.0" r="1.80" fill="#a0a890" fill-opacity="0.22"/><circle cx="470.4" cy="424.0" r="1.80" fill="#a0a890" fill-opacity="0.25"/><circle cx="359.0" cy="424.0" r="1.80" fill="#a0a890" fill-opacity="0.25"/></g><filter id="cb33" x="-50%" y="-50%" width="200%" height="200%"><feGaussianBlur stdDeviation="1.5"/></filter><g filter="url(#cb33)"><circle cx="332.3" cy="252.3" r="18" fill="#d07a38"/><circle cx="332.3" cy="252.3" r="15" fill="#f49a52"/></g></svg></div>
<svg style="left:581px;top:312px;width:18px;height:64.5px" width="18" height="64.5"><path d="M0.5 16 L18 0 L18 64.0 L0.5 64.0 Z" fill="#5b5b5b" stroke="#505050" stroke-width="1"/></svg>
<div class="t" style="left:586.09px;top:372.00px;font-size:9px;line-height:9px;color:#dddddd;font-family:'Liberation Sans', sans-serif;font-weight:normal;transform:rotate(-90deg) scaleX(1.0742);transform-origin:0 0;">Image128</div>
<svg style="left:585px;top:740px;width:12px;height:52px" width="12" height="52" viewBox="0 0 12 52"><path d="M1.5 1 L9 8.5" stroke="#e6e6e6" stroke-width="1.1" fill="none"/><path d="M9.5 3.5 L9.5 9 L4 9 Z" fill="none" stroke="#e6e6e6" stroke-width="1.1"/><rect x="3.3" y="17.3" width="4.4" height="4.4" fill="none" stroke="#e6e6e6" stroke-width="1.3"/><path d="M1 15 L3.5 17.5 M10 15 L7.5 17.5 M1 24 L3.5 21.5 M10 24 L7.5 21.5" stroke="#e6e6e6" stroke-width="0.9"/><rect x="4" y="29" width="6" height="6" fill="none" stroke="#e6e6e6" stroke-width="1.2"/><rect x="1.2" y="32.5" width="5" height="4.8" fill="#7a7a7a" stroke="#e6e6e6" stroke-width="1.2"/><circle cx="5.5" cy="46" r="3.9" fill="none" stroke="#e6e6e6" stroke-width="1.2"/><circle cx="5.5" cy="46" r="1.3" fill="#e6e6e6"/></svg>
<div style="left:414px;top:86px;width:347px;height:267px;background:#5865b4"></div>
<div style="left:416px;top:107px;width:342px;height:244px;background:#7a7a7a"></div>
<div style="left:421px;top:91px;width:12px;height:12px;box-sizing:border-box;border:2px solid #dedeff;background:#4a56a0"></div>
<div class="t" style="left:443.4px;top:92.29px;font-size:11px;line-height:11px;color:#ffffff;font-family:'Liberation Sans', sans-serif;font-weight:bold;transform:scaleX(1.0712);transform-origin:0 0;">RGB 2:1 Image71_Preview01_clone | &lt;*...</div>
<svg style="left:692.5px;top:92.7px;width:64px;height:10px" width="64" height="10" viewBox="0 0 64 10"><rect x="0" y="3.7" width="8" height="2.6" fill="#f4f4f4"/><rect x="17.7" y="2.5" width="8.2" height="1.5" fill="#f4f4f4"/><path d="M21.8 3.6 L25.9 8.5 L17.7 8.5 Z" fill="#f4f4f4"/><path d="M37.4 1.1h2.7v2.7h2.8v2.7h-2.8v2.8h-2.7v-2.8h-2.7v-2.7h2.7z" fill="#f4f4f4"/><path d="M53.2 1.6 L60.2 8.6 M60.2 1.6 L53.2 8.6" stroke="#f4f4f4" stroke-width="1.9"/></svg>
<div style="left:435px;top:107px;width:311px;height:231px;background:#060505"></div>
<div id="img2" style="left:435px;top:107px;width:311px;height:231px;overflow:hidden"><svg style="left:0;top:0" width="311" height="231" viewBox="0 0 311 231"><defs><filter id="bl22" x="-20%" y="-20%" width="140%" height="140%"><feGaussianBlur stdDeviation="1.3"/></filter><filter id="bl222" x="-50%" y="-50%" width="200%" height="200%"><feGaussianBlur stdDeviation="1.9"/></filter><radialGradient id="g22_0" cx="163.7" cy="124.3" r="46" gradientUnits="userSpaceOnUse"><stop offset="0" stop-color="#f08040" stop-opacity="0.8"/><stop offset="0.42" stop-color="#b05820" stop-opacity="0.45"/><stop offset="0.7" stop-color="#602e10" stop-opacity="0.2"/><stop offset="1" stop-color="#301808" stop-opacity="0"/></radialGradient><radialGradient id="g22_1" cx="163.7" cy="124.3" r="110" gradientUnits="userSpaceOnUse"><stop offset="0" stop-color="#2a1808" stop-opacity="0.5"/><stop offset="1" stop-color="#070605" stop-opacity="0"/></radialGradient></defs><rect width="311" height="231" fill="#070605"/><rect width="311" height="231" fill="url(#g22_0)"/><rect width="311" height="231" fill="url(#g22_1)"/><g filter="url(#bl222)"><path d="M163.3 128.3 L187.5 126.5 L164.1 120.3 Z" fill="#c87030" fill-opacity="0.31"/><path d="M162.5 128.1 L187.4 131.9 L164.9 120.5 Z" fill="#c87030" fill-opacity="0.34"/><path d="M162.0 127.9 L189.2 136.6 L165.4 120.7 Z" fill="#c87030" fill-opacity="0.57"/><path d="M161.5 127.7 L198.2 146.7 L165.9 120.9 Z" fill="#c87030" fill-opacity="0.40"/><path d="M160.7 126.9 L190.2 155.0 L166.7 121.7 Z" fill="#c87030" fill-opacity="0.51"/><path d="M160.1 126.0 L178.9 156.8 L167.3 122.6 Z" fill="#c87030" fill-opacity="0.31"/><path d="M159.8 125.2 L171.6 156.7 L167.6 123.4 Z" fill="#c87030" fill-opacity="0.39"/><path d="M159.8 125.0 L170.1 162.6 L167.6 123.6 Z" fill="#c87030" fill-opacity="0.47"/><path d="M159.8 123.5 L156.6 160.9 L167.6 125.1 Z" fill="#c87030" fill-opacity="0.59"/><path d="M159.9 123.0 L152.2 158.1 L167.5 125.6 Z" fill="#c87030" fill-opacity="0.48"/><path d="M160.1 122.5 L144.9 160.8 L167.3 126.1 Z" fill="#c87030" fill-opacity="0.39"/><path d="M160.9 121.5 L134.6 153.2 L166.5 127.1 Z" fill="#c87030" fill-opacity="0.50"/><path d="M161.1 121.2 L134.4 149.0 L166.3 127.4 Z" fill="#c87030" fill-opacity="0.50"/><path d="M161.8 120.8 L144.2 134.5 L165.6 127.8 Z" fill="#c87030" fill-opacity="0.46"/><path d="M162.5 120.5 L125.1 136.4 L164.9 128.1 Z" fill="#c87030" fill-opacity="0.45"/><path d="M163.7 120.3 L134.1 124.2 L163.7 128.3 Z" fill="#c87030" fill-opacity="0.50"/><path d="M164.9 120.5 L137.4 116.4 L162.5 128.1 Z" fill="#c87030" fill-opacity="0.41"/><path d="M165.4 120.7 L139.0 112.8 L162.0 127.9 Z" fill="#c87030" fill-opacity="0.48"/><path d="M166.1 121.1 L139.5 106.4 L161.3 127.5 Z" fill="#c87030" fill-opacity="0.50"/><path d="M166.7 121.6 L148.5 107.2 L160.7 127.0 Z" fill="#c87030" fill-opacity="0.60"/><path d="M167.1 122.2 L147.9 98.7 L160.3 126.4 Z" fill="#c87030" fill-opacity="0.42"/><path d="M167.6 123.4 L154.4 84.4 L159.8 125.2 Z" fill="#c87030" fill-opacity="0.45"/><path d="M167.7 123.8 L160.8 101.5 L159.7 124.8 Z" fill="#c87030" fill-opacity="0.57"/><path d="M167.7 124.5 L165.0 91.8 L159.7 124.1 Z" fill="#c87030" fill-opacity="0.40"/><path d="M167.5 125.4 L171.6 96.9 L159.9 123.2 Z" fill="#c87030" fill-opacity="0.36"/><path d="M167.3 126.0 L177.2 95.0 L160.1 122.6 Z" fill="#c87030" fill-opacity="0.54"/><path d="M166.6 127.1 L181.1 106.1 L160.8 121.5 Z" fill="#c87030" fill-opacity="0.51"/><path d="M166.3 127.3 L186.0 104.8 L161.1 121.3 Z" fill="#c87030" fill-opacity="0.55"/><path d="M165.0 128.1 L192.7 114.2 L162.4 120.5 Z" fill="#c87030" fill-opacity="0.55"/><path d="M164.5 128.2 L195.0 117.6 L162.9 120.4 Z" fill="#c87030" fill-opacity="0.48"/></g><g filter="url(#bl22)"><circle cx="308.3" cy="171.8" r="1.97" fill="#605848" fill-opacity="0.11"/><circle cx="296.9" cy="25.6" r="2.31" fill="#506050" fill-opacity="0.04"/><circle cx="5.7" cy="115.5" r="2.13" fill="#506050" fill-opacity="0.05"/><circle cx="195.6" cy="137.9" r="2.20" fill="#506050" fill-opacity="0.03"/><circle cx="300.8" cy="81.4" r="1.62" fill="#605848" fill-opacity="0.03"/><circle cx="151.3" cy="15.7" r="1.52" fill="#605848" fill-opacity="0.12"/><circle cx="192.3" cy="93.0" r="1.62" fill="#506050" fill-opacity="0.15"/><circle cx="11.9" cy="87.3" r="2.35" fill="#506050" fill-opacity="0.01"/><circle cx="234.4" cy="146.7" r="1.55" fill="#605848" fill-opacity="0.10"/><circle cx="144.4" cy="57.5" r="1.73" fill="#506050" fill-opacity="0.04"/><circle cx="289.5" cy="130.8" r="1.68" fill="#605848" fill-opacity="0.16"/><circle cx="17.7" cy="115.2" r="2.10" fill="#605848" fill-opacity="0.01"/><circle cx="217.8" cy="64.0" r="2.27" fill="#605848" fill-opacity="0.03"/><circle cx="263.2" cy="53.9" r="2.03" fill="#605848" fill-opacity="0.02"/><circle cx="80.6" cy="224.3" r="2.19" fill="#506050" fill-opacity="0.11"/><circle cx="54.6" cy="185.4" r="2.39" fill="#605848" fill-opacity="0.08"/><circle cx="86.7" cy="195.1" r="1.76" fill="#506050" fill-opacity="0.04"/><circle cx="108.2" cy="183.4" r="2.00" fill="#506050" fill-opacity="0.07"/><circle cx="302.8" cy="44.0" r="1.91" fill="#506050" fill-opacity="0.14"/><circle cx="120.3" cy="151.5" r="1.69" fill="#506050" fill-opacity="0.03"/><circle cx="286.4" cy="78.1" r="1.55" fill="#506050" fill-opacity="0.08"/><circle cx="61.2" cy="83.6" r="2.45" fill="#605848" fill-opacity="0.01"/><circle cx="238.8" cy="5.0" r="2.45" fill="#506050" fill-opacity="0.10"/><circle cx="30.7" cy="15.4" r="1.68" fill="#605848" fill-opacity="0.07"/><circle cx="282.8" cy="95.2" r="2.12" fill="#605848" fill-opacity="0.11"/><circle cx="100.2" cy="156.2" r="2.29" fill="#506050" fill-opacity="0.02"/><circle cx="249.1" cy="150.7" r="1.82" fill="#506050" fill-opacity="0.04"/><circle cx="75.4" cy="27.2" r="1.81" fill="#605848" fill-opacity="0.14"/><circle cx="35.1" cy="209.5" r="2.32" fill="#506050" fill-opacity="0.15"/><circle cx="148.3" cy="95.8" r="1.85" fill="#605848" fill-opacity="0.13"/><circle cx="73.0" cy="52.5" r="2.12" fill="#506050" fill-opacity="0.15"/><circle cx="144.4" cy="64.7" r="2.04" fill="#506050" fill-opacity="0.02"/><circle cx="233.7" cy="128.5" r="1.94" fill="#506050" fill-opacity="0.04"/><circle cx="255.1" cy="26.2" r="1.98" fill="#605848" fill-opacity="0.13"/><circle cx="21.5" cy="78.5" r="1.88" fill="#605848" fill-opacity="0.15"/><circle cx="134.9" cy="124.4" r="1.89" fill="#605848" fill-opacity="0.07"/><circle cx="112.2" cy="66.1" r="1.51" fill="#506050" fill-opacity="0.02"/><circle cx="262.3" cy="174.1" r="1.58" fill="#605848" fill-opacity="0.08"/><circle cx="195.8" cy="4.7" r="2.42" fill="#605848" fill-opacity="0.09"/><circle cx="167.2" cy="135.4" r="1.70" fill="#605848" fill-opacity="0.12"/><circle cx="139.6" cy="165.4" r="2.28" fill="#605848" fill-opacity="0.10"/><circle cx="173.0" cy="190.1" r="1.76" fill="#506050" fill-opacity="0.14"/><circle cx="70.1" cy="122.4" r="2.18" fill="#506050" fill-opacity="0.08"/><circle cx="190.0" cy="55.8" r="1.96" fill="#506050" fill-opacity="0.13"/><circle cx="180.5" cy="52.6" r="1.92" fill="#506050" fill-opacity="0.02"/><circle cx="14.3" cy="139.7" r="1.81" fill="#506050" fill-opacity="0.12"/><circle cx="250.9" cy="117.6" r="2.42" fill="#506050" fill-opacity="0.06"/><circle cx="115.9" cy="149.9" r="1.76" fill="#605848" fill-opacity="0.01"/><circle cx="309.7" cy="77.5" r="1.98" fill="#506050" fill-opacity="0.03"/><circle cx="219.6" cy="60.4" r="1.62" fill="#506050" fill-opacity="0.03"/><circle cx="216.2" cy="154.5" r="2.19" fill="#605848" fill-opacity="0.08"/><circle cx="216.9" cy="133.4" r="1.73" fill="#506050" fill-opacity="0.03"/><circle cx="191.0" cy="83.9" r="1.51" fill="#605848" fill-opacity="0.08"/><circle cx="194.8" cy="77.5" r="1.93" fill="#506050" fill-opacity="0.11"/><circle cx="266.1" cy="224.0" r="1.76" fill="#605848" fill-opacity="0.08"/><circle cx="45.6" cy="209.2" r="2.43" fill="#506050" fill-opacity="0.07"/><circle cx="214.6" cy="124.3" r="1.66" fill="#506050" fill-opacity="0.15"/><circle cx="140.6" cy="88.9" r="1.57" fill="#605848" fill-opacity="0.09"/><circle cx="120.9" cy="66.7" r="2.11" fill="#506050" fill-opacity="0.12"/><circle cx="290.5" cy="230.9" r="1.61" fill="#506050" fill-opacity="0.07"/><circle cx="115.0" cy="26.5" r="2.40" fill="#80c090" fill-opacity="0.45"/><circle cx="13.9" cy="143.5" r="2.40" fill="#80c090" fill-opacity="0.45"/><circle cx="90.0" cy="57.0" r="2.00" fill="#80a080" fill-opacity="0.30"/><circle cx="116.6" cy="1.0" r="2.50" fill="#e09090" fill-opacity="0.50"/><circle cx="220.0" cy="1.0" r="2.00" fill="#80a080" fill-opacity="0.30"/><circle cx="227.0" cy="1.0" r="2.00" fill="#80a080" fill-opacity="0.30"/><circle cx="65.0" cy="123.0" r="2.00" fill="#708070" fill-opacity="0.20"/><circle cx="35.0" cy="183.0" r="2.00" fill="#708070" fill-opacity="0.20"/><circle cx="250.0" cy="33.0" r="2.00" fill="#708070" fill-opacity="0.20"/><circle cx="285.0" cy="93.0" r="2.00" fill="#708070" fill-opacity="0.18"/><circle cx="192.0" cy="173.0" r="2.00" fill="#708070" fill-opacity="0.20"/></g><filter id="cb22" x="-50%" y="-50%" width="200%" height="200%"><feGaussianBlur stdDeviation="1.5"/></filter><g filter="url(#cb22)"><circle cx="163.7" cy="124.3" r="16.5" fill="#e87838"/><circle cx="163.7" cy="124.3" r="13.5" fill="#f06c84"/></g></svg></div>
<svg style="left:417.2px;top:108px;width:17.80000000000001px;height:139.6px" width="17.80000000000001" height="139.6"><path d="M0.5 18 L17.80000000000001 0 L17.80000000000001 139.1 L0.5 139.1 Z" fill="#5b5b5b" stroke="#505050" stroke-width="1"/></svg>
<div class="t" style="left:422.19px;top:244.00px;font-size:9px;line-height:9px;color:#dddddd;font-family:'Liberation Sans', sans-serif;font-weight:normal;transform:rotate(-90deg) scaleX(1.0886);transform-origin:0 0;">Image71_Preview01_clone</div>
<svg style="left:422px;top:294.5px;width:12px;height:52px" width="12" height="52" viewBox="0 0 12 52"><path d="M1.5 1 L9 8.5" stroke="#e6e6e6" stroke-width="1.1" fill="none"/><path d="M9.5 3.5 L9.5 9 L4 9 Z" fill="none" stroke="#e6e6e6" stroke-width="1.1"/><rect x="3.3" y="17.3" width="4.4" height="4.4" fill="none" stroke="#e6e6e6" stroke-width="1.3"/><path d="M1 15 L3.5 17.5 M10 15 L7.5 17.5 M1 24 L3.5 21.5 M10 24 L7.5 21.5" stroke="#e6e6e6" stroke-width="0.9"/><rect x="4" y="29" width="6" height="6" fill="none" stroke="#e6e6e6" stroke-width="1.2"/><rect x="1.2" y="32.5" width="5" height="4.8" fill="#7a7a7a" stroke="#e6e6e6" stroke-width="1.2"/><circle cx="5.5" cy="46" r="3.9" fill="none" stroke="#e6e6e6" stroke-width="1.2"/><circle cx="5.5" cy="46" r="1.3" fill="#e6e6e6"/></svg>
<div style="left:746px;top:107px;width:12.5px;height:231px;background:#6e6e6e"></div>
<div style="left:747px;top:161px;width:10px;height:96px;background:#b9b9b9;border:1px solid #d0d0d0;box-sizing:border-box"></div>
<div style="left:435px;top:338px;width:311px;height:13px;background:#6e6e6e"></div>
<div style="left:509px;top:339px;width:135px;height:12px;background:#b9b9b9;border:1px solid #d0d0d0;box-sizing:border-box"></div>
<svg style="left:746px;top:310px;width:12px;height:26px" width="12" height="26"><path d="M2 9 L6 4.8 L10 9 Z M2 18.5 L10 18.5 L6 22.7 Z" fill="#e8e8e8"/></svg>
<svg style="left:718px;top:338px;width:26px;height:13px" width="26" height="13"><path d="M8.5 2 L4 6.5 L8.5 11 Z M18 2 L22.5 6.5 L18 11 Z" fill="#e8e8e8"/></svg>
<div style="left:1424px;top:90px;width:81px;height:20px;background:#b6b6b6;box-shadow:1px 1px 0 #2e2e2e"></div>
<svg style="left:1425px;top:91px;width:19px;height:19px" width="19" height="19"><rect x="0" y="0" width="19" height="19" fill="#0a4a10"/><rect x="1.5" y="1.5" width="13" height="13" fill="#4d6de8"/><rect x="4" y="4" width="12" height="12" fill="#6f8cff" opacity="0.7"/><path d="M12 7 L13.6 11 L17.8 11.2 L14.5 13.8 L15.7 17.8 L12 15.5 L8.3 17.8 L9.5 13.8 L6.2 11.2 L10.4 11 Z" fill="#f3a030"/></svg>
<div class="t" style="left:1447.5px;top:94.47px;font-size:9.6px;line-height:9.6px;color:#262626;font-family:'Liberation Sans', sans-serif;font-weight:normal;transform:scaleX(0.9745);transform-origin:0 0;">Process12</div>
<svg style="left:1498px;top:92px;width:6px;height:17px" width="6" height="17"><path d="M1 5 V1.2 L4.2 5 V1.2" stroke="#262626" stroke-width="0.9" fill="none"/><path d="M1 15.5 V12 H2.5 Q4.4 12 4.4 13.75 Q4.4 15.5 2.5 15.5 Z" stroke="#262626" stroke-width="0.9" fill="none"/></svg>
<div style="left:1424px;top:115px;width:81px;height:19px;background:#b6b6b6;box-shadow:1px 1px 0 #2e2e2e"></div>
<svg style="left:1425px;top:116px;width:19px;height:19px" width="19" height="19"><rect x="0.5" y="0.5" width="18" height="18" fill="#d8d0f0" stroke="#222"/><path d="M5 4 H14 V6 H8.2 L11.5 9.5 L8.2 13 H14 V15 H5 V13.2 L8.5 9.5 L5 5.8 Z" fill="#111"/></svg>
<div class="t" style="left:1447.5px;top:119.47px;font-size:9.6px;line-height:9.6px;color:#262626;font-family:'Liberation Sans', sans-serif;font-weight:normal;transform:scaleX(0.9745);transform-origin:0 0;">Process13</div>
<svg style="left:1498px;top:117px;width:6px;height:17px" width="6" height="17"><path d="M1 5 V1.2 L4.2 5 V1.2" stroke="#262626" stroke-width="0.9" fill="none"/><path d="M1 15.5 V12 H2.5 Q4.4 12 4.4 13.75 Q4.4 15.5 2.5 15.5 Z" stroke="#262626" stroke-width="0.9" fill="none"/></svg>
<div style="left:1424px;top:140px;width:81px;height:19.5px;background:#b6b6b6;box-shadow:1px 1px 0 #2e2e2e"></div>
<svg style="left:1425px;top:141px;width:19px;height:19px" width="19" height="19"><rect x="0.5" y="0.5" width="18" height="18" fill="#e8e8e8" stroke="#333"/><path d="M2 2 L9.5 8 L17 2 Z M2 17 L9.5 11 L17 17 Z" fill="#333"/><rect x="2" y="8" width="15" height="1.2" fill="#e33"/><rect x="2" y="9.3" width="15" height="1.2" fill="#2b2"/><rect x="2" y="10.6" width="15" height="1.2" fill="#33f"/></svg>
<div class="t" style="left:1447.5px;top:144.47px;font-size:9.6px;line-height:9.6px;color:#262626;font-family:'Liberation Sans', sans-serif;font-weight:normal;transform:scaleX(0.9745);transform-origin:0 0;">Process15</div>
<svg style="left:1498px;top:142px;width:6px;height:17px" width="6" height="17"><path d="M1 5 V1.2 L4.2 5 V1.2" stroke="#262626" stroke-width="0.9" fill="none"/><path d="M1 15.5 V12 H2.5 Q4.4 12 4.4 13.75 Q4.4 15.5 2.5 15.5 Z" stroke="#262626" stroke-width="0.9" fill="none"/></svg>
<div style="left:1424px;top:165px;width:81px;height:19.5px;background:#b6b6b6;box-shadow:1px 1px 0 #2e2e2e"></div>
<svg style="left:1425px;top:166px;width:19px;height:19px" width="19" height="19"><rect x="0.5" y="0.5" width="18" height="18" fill="#e8e8e8" stroke="#333"/><circle cx="9.5" cy="6" r="3.6" fill="#f00"/><circle cx="6" cy="12.5" r="3.6" fill="#0c0"/><circle cx="13" cy="12.5" r="3.6" fill="#00f"/></svg>
<div class="t" style="left:1447.5px;top:169.47px;font-size:9.6px;line-height:9.6px;color:#262626;font-family:'Liberation Sans', sans-serif;font-weight:normal;transform:scaleX(0.9745);transform-origin:0 0;">Process16</div>
<svg style="left:1498px;top:167px;width:6px;height:17px" width="6" height="17"><path d="M1 5 V1.2 L4.2 5 V1.2" stroke="#262626" stroke-width="0.9" fill="none"/><path d="M1 15.5 V12 H2.5 Q4.4 12 4.4 13.75 Q4.4 15.5 2.5 15.5 Z" stroke="#262626" stroke-width="0.9" fill="none"/></svg>
<div style="left:1424px;top:190px;width:81px;height:20.5px;background:#b6b6b6;box-shadow:1px 1px 0 #2e2e2e"></div>
<svg style="left:1425px;top:191px;width:19px;height:19px" width="19" height="19"><rect x="0" y="0" width="19" height="19" fill="#0a4a10"/><rect x="1.5" y="1.5" width="13" height="13" fill="#4d6de8"/><rect x="4" y="4" width="12" height="12" fill="#6f8cff" opacity="0.7"/><path d="M12 7 L13.6 11 L17.8 11.2 L14.5 13.8 L15.7 17.8 L12 15.5 L8.3 17.8 L9.5 13.8 L6.2 11.2 L10.4 11 Z" fill="#f3a030"/></svg>
<div class="t" style="left:1447.5px;top:194.47px;font-size:9.6px;line-height:9.6px;color:#262626;font-family:'Liberation Sans', sans-serif;font-weight:normal;transform:scaleX(0.9745);transform-origin:0 0;">Process17</div>
<svg style="left:1498px;top:192px;width:6px;height:17px" width="6" height="17"><path d="M1 5 V1.2 L4.2 5 V1.2" stroke="#262626" stroke-width="0.9" fill="none"/><path d="M1 15.5 V12 H2.5 Q4.4 12 4.4 13.75 Q4.4 15.5 2.5 15.5 Z" stroke="#262626" stroke-width="0.9" fill="none"/></svg>
<div style="left:1420px;top:292px;width:82px;height:21px;background:#b6b6b6;box-shadow:1px 1px 0 #2e2e2e"></div>
<svg style="left:1421px;top:293px;width:19px;height:19px" width="19" height="19"><rect x="0.5" y="0.5" width="18" height="18" fill="#ddd" stroke="#222"/><rect x="1" y="1" width="8.5" height="8.5" fill="#0a0af0"/><path d="M1 1 H7 L1 7 Z" fill="#f08a80"/><path d="M9.5 1 L18 9.5 H9.5 Z" fill="#10f010"/><path d="M9.5 1 H18 V9.5 Z" fill="#e0e0e0"/><rect x="1" y="9.5" width="8.5" height="8.5" fill="#a8c8a0"/><path d="M9.5 9.5 H1 L9.5 18 Z" fill="#b0a8a8"/><path d="M9.5 9.5 H18 L9.5 18 Z" fill="#f01010"/><path d="M18 9.5 V18 H9.5 Z" fill="#b0c8f0"/></svg>
<div class="t" style="left:1443.5px;top:296.47px;font-size:9.6px;line-height:9.6px;color:#262626;font-family:'Liberation Sans', sans-serif;font-weight:normal;transform:scaleX(0.9745);transform-origin:0 0;">Process18</div>
<svg style="left:1495px;top:294px;width:6px;height:17px" width="6" height="17"><path d="M1 5 V1.2 L4.2 5 V1.2" stroke="#262626" stroke-width="0.9" fill="none"/><path d="M1 15.5 V12 H2.5 Q4.4 12 4.4 13.75 Q4.4 15.5 2.5 15.5 Z" stroke="#262626" stroke-width="0.9" fill="none"/></svg>
<div style="left:1420px;top:343px;width:82px;height:20.5px;background:#6b79dc;box-shadow:1px 1px 0 #2e2e2e"></div>
<svg style="left:1421px;top:344px;width:19px;height:19px" width="19" height="19"><rect x="0.5" y="0.5" width="18" height="18" fill="#fff" stroke="#333"/><rect x="1" y="1" width="3" height="3" fill="#111"/><rect x="1" y="7" width="3" height="3" fill="#111"/><rect x="1" y="13" width="3" height="3" fill="#111"/><rect x="4" y="4" width="3" height="3" fill="#111"/><rect x="4" y="10" width="3" height="3" fill="#111"/><rect x="4" y="16" width="3" height="3" fill="#111"/><rect x="7" y="1" width="3" height="3" fill="#111"/><rect x="7" y="7" width="3" height="3" fill="#111"/><rect x="7" y="13" width="3" height="3" fill="#111"/><rect x="10" y="4" width="3" height="3" fill="#111"/><rect x="10" y="10" width="3" height="3" fill="#111"/><rect x="10" y="16" width="3" height="3" fill="#111"/><rect x="13" y="1" width="3" height="3" fill="#111"/><rect x="13" y="7" width="3" height="3" fill="#111"/><rect x="13" y="13" width="3" height="3" fill="#111"/><rect x="16" y="4" width="3" height="3" fill="#111"/><rect x="16" y="10" width="3" height="3" fill="#111"/><rect x="16" y="16" width="3" height="3" fill="#111"/><path d="M2 17 Q4 5 16 2" stroke="#f60" stroke-width="1.6" fill="none"/><path d="M2 11 H17 M2 7 H17" stroke="#88f" stroke-width="0.7"/></svg>
<div class="t" style="left:1443.5px;top:347.47px;font-size:9.6px;line-height:9.6px;color:#ffffff;font-family:'Liberation Sans', sans-serif;font-weight:normal;transform:scaleX(0.9745);transform-origin:0 0;">Process19</div>
<svg style="left:1495px;top:345px;width:6px;height:17px" width="6" height="17"><path d="M1 5 V1.2 L4.2 5 V1.2" stroke="#ffffff" stroke-width="0.9" fill="none"/><path d="M1 15.5 V12 H2.5 Q4.4 12 4.4 13.75 Q4.4 15.5 2.5 15.5 Z" stroke="#ffffff" stroke-width="0.9" fill="none"/></svg>
<div style="left:1419px;top:368px;width:81px;height:20.5px;background:#b6b6b6;box-shadow:1px 1px 0 #2e2e2e"></div>
<svg style="left:1420px;top:369px;width:19px;height:19px" width="19" height="19"><rect x="0.5" y="0.5" width="18" height="18" fill="#ddd" stroke="#222"/><rect x="1" y="1" width="8.5" height="8.5" fill="#0a0af0"/><path d="M1 1 H7 L1 7 Z" fill="#f08a80"/><path d="M9.5 1 L18 9.5 H9.5 Z" fill="#10f010"/><path d="M9.5 1 H18 V9.5 Z" fill="#e0e0e0"/><rect x="1" y="9.5" width="8.5" height="8.5" fill="#a8c8a0"/><path d="M9.5 9.5 H1 L9.5 18 Z" fill="#b0a8a8"/><path d="M9.5 9.5 H18 L9.5 18 Z" fill="#f01010"/><path d="M18 9.5 V18 H9.5 Z" fill="#b0c8f0"/></svg>
<div class="t" style="left:1442.5px;top:372.47px;font-size:9.6px;line-height:9.6px;color:#262626;font-family:'Liberation Sans', sans-serif;font-weight:normal;transform:scaleX(0.9745);transform-origin:0 0;">Process21</div>
<svg style="left:1493px;top:370px;width:6px;height:17px" width="6" height="17"><path d="M1 5 V1.2 L4.2 5 V1.2" stroke="#262626" stroke-width="0.9" fill="none"/><path d="M1 15.5 V12 H2.5 Q4.4 12 4.4 13.75 Q4.4 15.5 2.5 15.5 Z" stroke="#262626" stroke-width="0.9" fill="none"/></svg>
<svg style="left:1298px;top:213px;width:110px;height:23.5px" width="110" height="23.5"><path d="M1 1 H101 L109 8 V22.5 H1 Z" fill="#262626"/><path d="M0 0 H100 L108 7 V21.5 H0 Z" fill="#b4b4b4"/></svg>
<svg style="left:1299px;top:213.5px;width:20px;height:20px" width="20" height="20"><path d="M10 1 L18 5 L18 15 L10 19 L2 15 L2 5 Z" fill="#1f7ee0"/><path d="M2 5 L10 9 L18 5 L10 1 Z" fill="#2a95ff"/><path d="M2 5 L10 9 L10 19 L2 15 Z" fill="#5cb0ff"/><path d="M10 9 L18 5 L18 15 L10 19 Z" fill="#1670d0"/></svg>
<div class="t" style="left:1322.8px;top:218.53px;font-size:10px;line-height:10px;color:#1e1e1e;font-family:'Liberation Sans', sans-serif;font-weight:normal;transform:scaleX(0.9901);transform-origin:0 0;">integration1_R</div>
<svg style="left:1397px;top:225.5px;width:7px;height:7px" width="7" height="7"><path d="M1 6 V2 L4.5 6 V2" stroke="#222" stroke-width="1" fill="none"/></svg>
<svg style="left:1298px;top:239px;width:109.5px;height:22.5px" width="109.5" height="22.5"><path d="M1 1 H100.5 L108.5 8 V21.5 H1 Z" fill="#262626"/><path d="M0 0 H99.5 L107.5 7 V20.5 H0 Z" fill="#b4b4b4"/></svg>
<svg style="left:1299px;top:239.5px;width:20px;height:20px" width="20" height="20"><path d="M10 1 L18 5 L18 15 L10 19 L2 15 L2 5 Z" fill="#1f7ee0"/><path d="M2 5 L10 9 L18 5 L10 1 Z" fill="#2a95ff"/><path d="M2 5 L10 9 L10 19 L2 15 Z" fill="#5cb0ff"/><path d="M10 9 L18 5 L18 15 L10 19 Z" fill="#1670d0"/></svg>
<div class="t" style="left:1322.8px;top:244.53px;font-size:10px;line-height:10px;color:#1e1e1e;font-family:'Liberation Sans', sans-serif;font-weight:normal;transform:scaleX(0.9908);transform-origin:0 0;">integration1_G</div>
<svg style="left:1396.5px;top:250.5px;width:7px;height:7px" width="7" height="7"><path d="M1 6 V2 L4.5 6 V2" stroke="#222" stroke-width="1" fill="none"/></svg>
<svg style="left:1298px;top:264px;width:108.5px;height:22.5px" width="108.5" height="22.5"><path d="M1 1 H99.5 L107.5 8 V21.5 H1 Z" fill="#262626"/><path d="M0 0 H98.5 L106.5 7 V20.5 H0 Z" fill="#b4b4b4"/></svg>
<svg style="left:1299px;top:264.5px;width:20px;height:20px" width="20" height="20"><path d="M10 1 L18 5 L18 15 L10 19 L2 15 L2 5 Z" fill="#1f7ee0"/><path d="M2 5 L10 9 L18 5 L10 1 Z" fill="#2a95ff"/><path d="M2 5 L10 9 L10 19 L2 15 Z" fill="#5cb0ff"/><path d="M10 9 L18 5 L18 15 L10 19 Z" fill="#1670d0"/></svg>
<div class="t" style="left:1322.8px;top:269.54px;font-size:10px;line-height:10px;color:#1e1e1e;font-family:'Liberation Sans', sans-serif;font-weight:normal;transform:scaleX(0.9985);transform-origin:0 0;">integration1_B</div>
<svg style="left:1395.5px;top:275.5px;width:7px;height:7px" width="7" height="7"><path d="M1 6 V2 L4.5 6 V2" stroke="#222" stroke-width="1" fill="none"/></svg>
<svg style="left:1411.5px;top:240px;width:157.5px;height:23px" width="157.5" height="23"><path d="M1 1 H148.5 L156.5 8 V22 H1 Z" fill="#262626"/><path d="M0 0 H147.5 L155.5 7 V21 H0 Z" fill="#b4b4b4"/></svg>
<svg style="left:1412.5px;top:240.5px;width:20px;height:20px" width="20" height="20"><path d="M10 1 L18 5 L18 15 L10 19 L2 15 L2 5 Z" fill="#1f7ee0"/><path d="M2 5 L10 9 L18 5 L10 1 Z" fill="#2a95ff"/><path d="M2 5 L10 9 L10 19 L2 15 Z" fill="#5cb0ff"/><path d="M10 9 L18 5 L18 15 L10 19 Z" fill="#1670d0"/></svg>
<div class="t" style="left:1436.3px;top:245.53px;font-size:10px;line-height:10px;color:#1e1e1e;font-family:'Liberation Sans', sans-serif;font-weight:normal;transform:scaleX(0.9954);transform-origin:0 0;">integration1_B_registered</div>
<svg style="left:1558px;top:252px;width:7px;height:7px" width="7" height="7"><path d="M1 6 V2 L4.5 6 V2" stroke="#222" stroke-width="1" fill="none"/></svg>
<svg style="left:1411.5px;top:265px;width:158.5px;height:23.5px" width="158.5" height="23.5"><path d="M1 1 H149.5 L157.5 8 V22.5 H1 Z" fill="#262626"/><path d="M0 0 H148.5 L156.5 7 V21.5 H0 Z" fill="#b4b4b4"/></svg>
<svg style="left:1412.5px;top:265.5px;width:20px;height:20px" width="20" height="20"><path d="M10 1 L18 5 L18 15 L10 19 L2 15 L2 5 Z" fill="#1f7ee0"/><path d="M2 5 L10 9 L18 5 L10 1 Z" fill="#2a95ff"/><path d="M2 5 L10 9 L10 19 L2 15 Z" fill="#5cb0ff"/><path d="M10 9 L18 5 L18 15 L10 19 Z" fill="#1670d0"/></svg>
<div class="t" style="left:1436.3px;top:270.54px;font-size:10px;line-height:10px;color:#1e1e1e;font-family:'Liberation Sans', sans-serif;font-weight:normal;transform:scaleX(0.9859);transform-origin:0 0;">integration1_G_registered</div>
<svg style="left:1559px;top:277.5px;width:7px;height:7px" width="7" height="7"><path d="M1 6 V2 L4.5 6 V2" stroke="#222" stroke-width="1" fill="none"/></svg>
<svg style="left:5px;top:880px;width:6px;height:17px" width="6" height="17" viewBox="0 0 6 17"><rect x="0.1" y="0.60" width="1.6" height="1.5" fill="#6a6a6a" opacity="0.85"/><rect x="3.7" y="0.60" width="1.6" height="1.5" fill="#6a6a6a" opacity="0.75"/><rect x="1.9" y="2.30" width="1.6" height="1.5" fill="#6a6a6a" opacity="0.9"/><rect x="0.1" y="4.00" width="1.6" height="1.5" fill="#6a6a6a" opacity="0.85"/><rect x="3.7" y="4.00" width="1.6" height="1.5" fill="#6a6a6a" opacity="0.75"/><rect x="1.9" y="5.70" width="1.6" height="1.5" fill="#6a6a6a" opacity="0.9"/><rect x="0.1" y="7.40" width="1.6" height="1.5" fill="#6a6a6a" opacity="0.85"/><rect x="3.7" y="7.40" width="1.6" height="1.5" fill="#6a6a6a" opacity="0.75"/><rect x="1.9" y="9.10" width="1.6" height="1.5" fill="#6a6a6a" opacity="0.9"/><rect x="0.1" y="10.80" width="1.6" height="1.5" fill="#6a6a6a" opacity="0.85"/><rect x="3.7" y="10.80" width="1.6" height="1.5" fill="#6a6a6a" opacity="0.75"/><rect x="1.9" y="12.50" width="1.6" height="1.5" fill="#6a6a6a" opacity="0.9"/><rect x="0.1" y="14.20" width="1.6" height="1.5" fill="#6a6a6a" opacity="0.85"/><rect x="3.7" y="14.20" width="1.6" height="1.5" fill="#6a6a6a" opacity="0.75"/></svg>
<div style="left:17px;top:880px;width:204px;height:17px;background:linear-gradient(#f6f6f6,#dcdcdc);border:1px solid #9c9c9c;box-sizing:border-box;border-radius:2px"></div>
<div style="left:206.5px;top:881px;width:1px;height:15px;background:#b0b0b0"></div>
<svg style="left:208px;top:884px;width:10px;height:8px" width="10" height="8"><path d="M1 2 H9 L5 6.5 Z" fill="#222"/></svg>
<div style="left:23.5px;top:883.5px;width:10px;height:9.5px;box-sizing:border-box;border:1.5px solid #444;border-top-width:2.5px"></div>
<div class="t" style="left:40.9px;top:883.76px;font-size:9.7px;line-height:9.7px;color:#000000;font-family:'Liberation Mono', monospace;font-weight:normal;transform:scaleX(0.9934);transform-origin:0 0;-webkit-text-stroke:0.12px #000;">Image71_Preview01_clone</div>
<div style="left:224.5px;top:880px;width:14px;height:16px;background:#fafafa;border:1px solid #777;box-sizing:border-box"></div>
<svg style="left:226px;top:882px;width:11px;height:12px" width="11" height="12"><path d="M3.5 1.5 H9.5 V10.5 H3.5 Z" fill="none" stroke="#222" stroke-width="1.3"/><path d="M1.5 3.5 V10.5 H3.5" fill="none" stroke="#222" stroke-width="1.3"/></svg>
<svg style="left:249.5px;top:880px;width:6px;height:17px" width="6" height="17" viewBox="0 0 6 17"><rect x="0.1" y="0.60" width="1.6" height="1.5" fill="#6a6a6a" opacity="0.85"/><rect x="3.7" y="0.60" width="1.6" height="1.5" fill="#6a6a6a" opacity="0.75"/><rect x="1.9" y="2.30" width="1.6" height="1.5" fill="#6a6a6a" opacity="0.9"/><rect x="0.1" y="4.00" width="1.6" height="1.5" fill="#6a6a6a" opacity="0.85"/><rect x="3.7" y="4.00" width="1.6" height="1.5" fill="#6a6a6a" opacity="0.75"/><rect x="1.9" y="5.70" width="1.6" height="1.5" fill="#6a6a6a" opacity="0.9"/><rect x="0.1" y="7.40" width="1.6" height="1.5" fill="#6a6a6a" opacity="0.85"/><rect x="3.7" y="7.40" width="1.6" height="1.5" fill="#6a6a6a" opacity="0.75"/><rect x="1.9" y="9.10" width="1.6" height="1.5" fill="#6a6a6a" opacity="0.9"/><rect x="0.1" y="10.80" width="1.6" height="1.5" fill="#6a6a6a" opacity="0.85"/><rect x="3.7" y="10.80" width="1.6" height="1.5" fill="#6a6a6a" opacity="0.75"/><rect x="1.9" y="12.50" width="1.6" height="1.5" fill="#6a6a6a" opacity="0.9"/><rect x="0.1" y="14.20" width="1.6" height="1.5" fill="#6a6a6a" opacity="0.85"/><rect x="3.7" y="14.20" width="1.6" height="1.5" fill="#6a6a6a" opacity="0.75"/></svg>
<div style="left:261px;top:880px;width:15.5px;height:16px;background:linear-gradient(135deg,#7a7a7a,#2e2e2e);border:1px solid #222;box-sizing:border-box"></div>
<div style="left:280.4px;top:880px;width:15.5px;height:16px;background:linear-gradient(135deg,#7fb0ff,#1f55c8);border:1px solid #1a3a8a;box-sizing:border-box"></div>
<div style="left:299.5px;top:880px;width:15.5px;height:16px;background:linear-gradient(135deg,#7a7a7a,#2e2e2e);border:1px solid #222;box-sizing:border-box"></div>
<div style="left:318.7px;top:880px;width:15.5px;height:16px;background:linear-gradient(135deg,#7a7a7a,#2e2e2e);border:1px solid #222;box-sizing:border-box"></div>
<svg style="left:341.5px;top:880px;width:6px;height:17px" width="6" height="17" viewBox="0 0 6 17"><rect x="0.1" y="0.60" width="1.6" height="1.5" fill="#6a6a6a" opacity="0.85"/><rect x="3.7" y="0.60" width="1.6" height="1.5" fill="#6a6a6a" opacity="0.75"/><rect x="1.9" y="2.30" width="1.6" height="1.5" fill="#6a6a6a" opacity="0.9"/><rect x="0.1" y="4.00" width="1.6" height="1.5" fill="#6a6a6a" opacity="0.85"/><rect x="3.7" y="4.00" width="1.6" height="1.5" fill="#6a6a6a" opacity="0.75"/><rect x="1.9" y="5.70" width="1.6" height="1.5" fill="#6a6a6a" opacity="0.9"/><rect x="0.1" y="7.40" width="1.6" height="1.5" fill="#6a6a6a" opacity="0.85"/><rect x="3.7" y="7.40" width="1.6" height="1.5" fill="#6a6a6a" opacity="0.75"/><rect x="1.9" y="9.10" width="1.6" height="1.5" fill="#6a6a6a" opacity="0.9"/><rect x="0.1" y="10.80" width="1.6" height="1.5" fill="#6a6a6a" opacity="0.85"/><rect x="3.7" y="10.80" width="1.6" height="1.5" fill="#6a6a6a" opacity="0.75"/><rect x="1.9" y="12.50" width="1.6" height="1.5" fill="#6a6a6a" opacity="0.9"/><rect x="0.1" y="14.20" width="1.6" height="1.5" fill="#6a6a6a" opacity="0.85"/><rect x="3.7" y="14.20" width="1.6" height="1.5" fill="#6a6a6a" opacity="0.75"/></svg>
<svg style="left:504.5px;top:880px;width:6px;height:17px" width="6" height="17" viewBox="0 0 6 17"><rect x="0.1" y="0.60" width="1.6" height="1.5" fill="#6a6a6a" opacity="0.85"/><rect x="3.7" y="0.60" width="1.6" height="1.5" fill="#6a6a6a" opacity="0.75"/><rect x="1.9" y="2.30" width="1.6" height="1.5" fill="#6a6a6a" opacity="0.9"/><rect x="0.1" y="4.00" width="1.6" height="1.5" fill="#6a6a6a" opacity="0.85"/><rect x="3.7" y="4.00" width="1.6" height="1.5" fill="#6a6a6a" opacity="0.75"/><rect x="1.9" y="5.70" width="1.6" height="1.5" fill="#6a6a6a" opacity="0.9"/><rect x="0.1" y="7.40" width="1.6" height="1.5" fill="#6a6a6a" opacity="0.85"/><rect x="3.7" y="7.40" width="1.6" height="1.5" fill="#6a6a6a" opacity="0.75"/><rect x="1.9" y="9.10" width="1.6" height="1.5" fill="#6a6a6a" opacity="0.9"/><rect x="0.1" y="10.80" width="1.6" height="1.5" fill="#6a6a6a" opacity="0.85"/><rect x="3.7" y="10.80" width="1.6" height="1.5" fill="#6a6a6a" opacity="0.75"/><rect x="1.9" y="12.50" width="1.6" height="1.5" fill="#6a6a6a" opacity="0.9"/><rect x="0.1" y="14.20" width="1.6" height="1.5" fill="#6a6a6a" opacity="0.85"/><rect x="3.7" y="14.20" width="1.6" height="1.5" fill="#6a6a6a" opacity="0.75"/></svg>
<svg style="left:812px;top:882px;width:12px;height:12px" width="12" height="12"><path d="M2.5 1.5 L10.5 6 L2.5 10.5 Z" fill="#1a1a1a"/></svg>
<svg style="left:835.5px;top:880px;width:6px;height:17px" width="6" height="17" viewBox="0 0 6 17"><rect x="0.1" y="0.60" width="1.6" height="1.5" fill="#6a6a6a" opacity="0.85"/><rect x="3.7" y="0.60" width="1.6" height="1.5" fill="#6a6a6a" opacity="0.75"/><rect x="1.9" y="2.30" width="1.6" height="1.5" fill="#6a6a6a" opacity="0.9"/><rect x="0.1" y="4.00" width="1.6" height="1.5" fill="#6a6a6a" opacity="0.85"/><rect x="3.7" y="4.00" width="1.6" height="1.5" fill="#6a6a6a" opacity="0.75"/><rect x="1.9" y="5.70" width="1.6" height="1.5" fill="#6a6a6a" opacity="0.9"/><rect x="0.1" y="7.40" width="1.6" height="1.5" fill="#6a6a6a" opacity="0.85"/><rect x="3.7" y="7.40" width="1.6" height="1.5" fill="#6a6a6a" opacity="0.75"/><rect x="1.9" y="9.10" width="1.6" height="1.5" fill="#6a6a6a" opacity="0.9"/><rect x="0.1" y="10.80" width="1.6" height="1.5" fill="#6a6a6a" opacity="0.85"/><rect x="3.7" y="10.80" width="1.6" height="1.5" fill="#6a6a6a" opacity="0.75"/><rect x="1.9" y="12.50" width="1.6" height="1.5" fill="#6a6a6a" opacity="0.9"/><rect x="0.1" y="14.20" width="1.6" height="1.5" fill="#6a6a6a" opacity="0.85"/><rect x="3.7" y="14.20" width="1.6" height="1.5" fill="#6a6a6a" opacity="0.75"/></svg>
<div class="t" style="left:855.6px;top:883.76px;font-size:9.7px;line-height:9.7px;color:#000000;font-family:'Liberation Mono', monospace;font-weight:normal;transform:scaleX(1.0044);transform-origin:0 0;-webkit-text-stroke:0.12px #000;">w:388 · h:292 · n:3 · f32 · RGB · 1.297 MiB</div>
</div></body></html>
